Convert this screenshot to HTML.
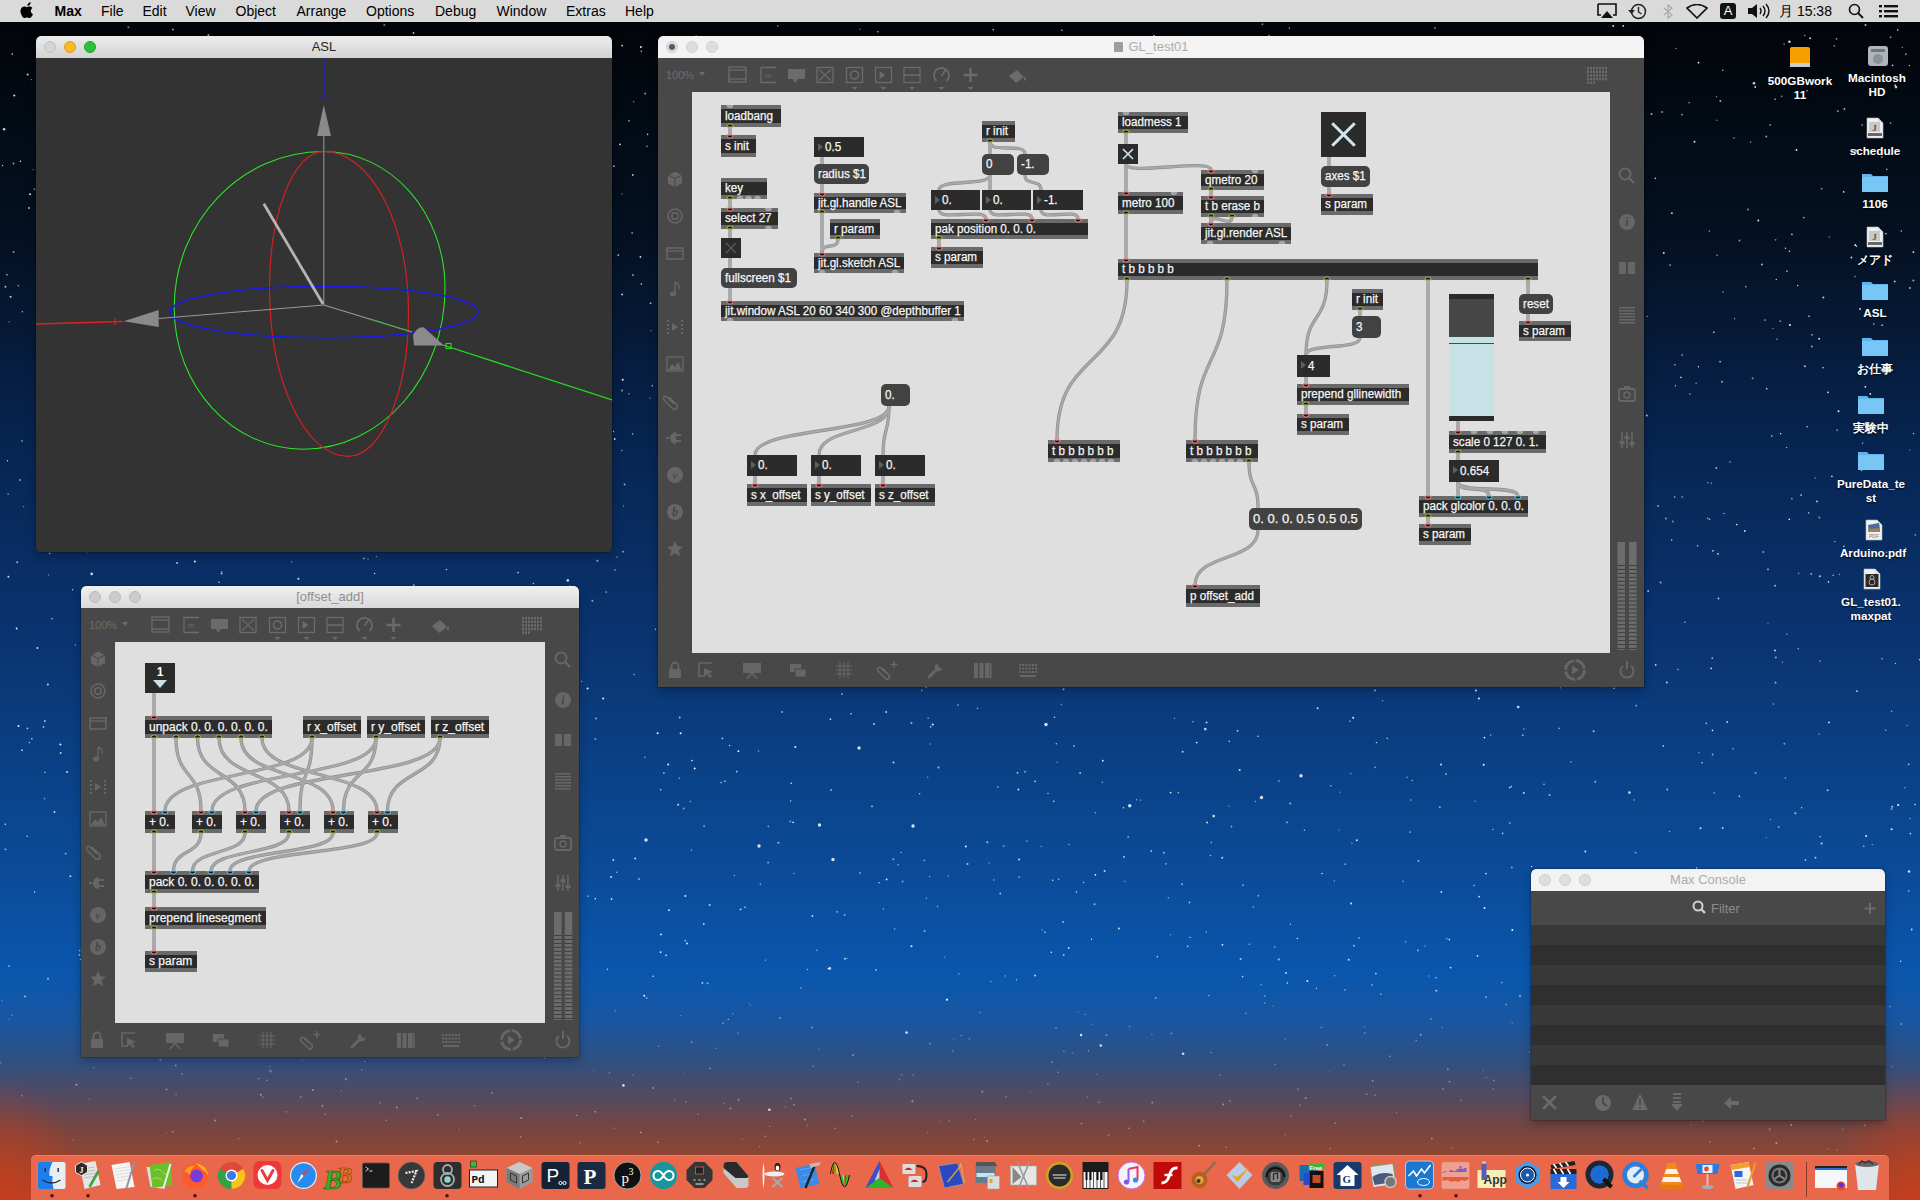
<!DOCTYPE html><html><head><meta charset="utf-8"><style>
*{margin:0;padding:0;box-sizing:border-box}
html,body{width:1920px;height:1200px;overflow:hidden}
body{position:relative;font-family:"Liberation Sans",sans-serif;
background:linear-gradient(to bottom,#010306 0px,#02060b 40px,#041122 240px,#072552 450px,#0a3674 660px,#0b4b98 870px,#0a57ae 978px,#1a56a0 1022px,#2f5080 1060px,#524a62 1095px,#784540 1130px,#924532 1160px,#b04028 1200px);}
.a{position:absolute}
#mb{position:absolute;left:0;top:0;width:1920px;height:22px;background:#dadada;font-size:14px;color:#000;line-height:22px}
#mb span{position:absolute;top:0;white-space:nowrap}
.win{position:absolute;border-radius:5px 5px 0 0;box-shadow:0 4px 10px rgba(0,0,0,.25),0 0 0 1px rgba(0,0,0,.18)}
.tb{position:absolute;left:0;top:0;right:0;height:22px;text-align:center;font-size:13px;line-height:22px;border-radius:5px 5px 0 0}
.tl{position:absolute;top:5px;width:12px;height:12px;border-radius:50%}
.o{position:absolute;background:#6a6a6a;color:#f6f6f6;font-size:12px;white-space:nowrap;overflow:hidden;-webkit-text-stroke:.25px #f6f6f6}
.o i{position:absolute;left:0;right:0;top:4px;bottom:4px;background:#2b2b2b}
.o b{position:absolute;left:4px;top:0;line-height:22px;font-weight:normal;transform-origin:0 0}
.sq b,.sq{transform-origin:0 50%}
.m{position:absolute;background:#424242;border-radius:5px;color:#f6f6f6;-webkit-text-stroke:.25px #f6f6f6;font-size:12px;white-space:nowrap;line-height:20px;padding-left:4px}
.n{position:absolute;background:#2b2b2b;color:#f6f6f6;-webkit-text-stroke:.25px #f6f6f6;font-size:12px;white-space:nowrap;line-height:20px;padding-left:11px}
.n:before{content:"";position:absolute;left:4px;top:6px;border-left:5px solid #5e5e5e;border-top:4px solid transparent;border-bottom:4px solid transparent}
.dl{position:absolute;color:#fff;font-size:11.7px;font-weight:bold;text-align:center;width:90px;line-height:14px;text-shadow:0 1px 2px rgba(0,0,0,.9)}
</style></head><body>
<div class="a" style="left:0;top:950px;width:1920px;height:250px;background:radial-gradient(ellipse 90px 120px at 0px 250px,rgba(205,62,25,.75),rgba(205,62,25,0)),radial-gradient(ellipse 90px 130px at 1920px 250px,rgba(205,62,25,.7),rgba(205,62,25,0))"></div>
<svg class="a" style="left:0;top:0" width="1920" height="1200"><circle cx="1046" cy="724.5" r="1.7" fill="#fff" opacity=".85"/><circle cx="859" cy="748" r="1.7" fill="#fff" opacity=".85"/><circle cx="913" cy="826" r="1.7" fill="#fff" opacity=".85"/><circle cx="819.5" cy="825" r="1.7" fill="#fff" opacity=".85"/><circle cx="646" cy="840" r="1.7" fill="#fff" opacity=".85"/><circle cx="833" cy="859.5" r="1.7" fill="#fff" opacity=".85"/><circle cx="759" cy="846" r="1.7" fill="#fff" opacity=".85"/><circle cx="1301" cy="775.75" r="1.7" fill="#fff" opacity=".85"/><circle cx="1129.75" cy="805.75" r="1.7" fill="#fff" opacity=".85"/><circle cx="1261.5" cy="797.5" r="1.7" fill="#fff" opacity=".85"/><circle cx="621.8" cy="193.9" r="0.7" fill="#fff" opacity="0.49"/><circle cx="702.1" cy="89.3" r="0.8" fill="#fff" opacity="0.47"/><circle cx="134.1" cy="126.1" r="1.0" fill="#fff" opacity="0.48"/><circle cx="1819.1" cy="734.1" r="0.7" fill="#fff" opacity="0.74"/><circle cx="1874.4" cy="76.5" r="0.8" fill="#fff" opacity="0.59"/><circle cx="226.2" cy="371.4" r="0.8" fill="#fff" opacity="0.50"/><circle cx="360.7" cy="133.7" r="0.7" fill="#fff" opacity="0.73"/><circle cx="953.1" cy="622.7" r="0.9" fill="#fff" opacity="0.68"/><circle cx="694.2" cy="303.7" r="0.8" fill="#fff" opacity="0.80"/><circle cx="1102.9" cy="615.4" r="0.9" fill="#fff" opacity="0.81"/><circle cx="1881.9" cy="156.9" r="1.0" fill="#fff" opacity="0.53"/><circle cx="1791.9" cy="498.8" r="0.7" fill="#fff" opacity="0.83"/><circle cx="1680.9" cy="377.3" r="0.9" fill="#fff" opacity="0.75"/><circle cx="875.9" cy="969.8" r="0.9" fill="#fff" opacity="0.69"/><circle cx="116.5" cy="813.9" r="1.0" fill="#fff" opacity="0.59"/><circle cx="1283.8" cy="49.4" r="1.0" fill="#fff" opacity="0.63"/><circle cx="947.9" cy="269.7" r="0.9" fill="#fff" opacity="0.51"/><circle cx="750.6" cy="1005.2" r="0.7" fill="#fff" opacity="0.27"/><circle cx="533.5" cy="178.2" r="1.0" fill="#fff" opacity="0.88"/><circle cx="797.4" cy="428.0" r="1.0" fill="#fff" opacity="0.93"/><circle cx="338.3" cy="285.2" r="0.8" fill="#fff" opacity="0.46"/><circle cx="350.1" cy="341.5" r="0.8" fill="#fff" opacity="0.66"/><circle cx="1087.4" cy="1097.2" r="0.7" fill="#fff" opacity="0.34"/><circle cx="1827.6" cy="790.3" r="1.0" fill="#fff" opacity="0.65"/><circle cx="924.5" cy="474.9" r="0.8" fill="#fff" opacity="0.48"/><circle cx="311.6" cy="406.9" r="0.7" fill="#fff" opacity="0.50"/><circle cx="1030.3" cy="1092.5" r="0.7" fill="#fff" opacity="0.24"/><circle cx="722.4" cy="738.3" r="0.9" fill="#fff" opacity="0.75"/><circle cx="221.5" cy="573.6" r="1.0" fill="#fff" opacity="0.69"/><circle cx="276.7" cy="868.1" r="0.9" fill="#fff" opacity="0.69"/><circle cx="991.4" cy="255.1" r="0.9" fill="#fff" opacity="0.52"/><circle cx="51.9" cy="618.7" r="0.7" fill="#fff" opacity="0.80"/><circle cx="704.1" cy="212.1" r="0.8" fill="#fff" opacity="0.72"/><circle cx="633.0" cy="275.1" r="0.8" fill="#fff" opacity="0.85"/><circle cx="1420.6" cy="279.3" r="1.0" fill="#fff" opacity="0.63"/><circle cx="53.6" cy="338.6" r="0.9" fill="#fff" opacity="0.55"/><circle cx="661.0" cy="934.4" r="0.9" fill="#fff" opacity="0.93"/><circle cx="423.3" cy="279.4" r="0.8" fill="#fff" opacity="0.62"/><circle cx="1891.7" cy="711.2" r="0.7" fill="#fff" opacity="0.69"/><circle cx="1535.3" cy="119.5" r="0.7" fill="#fff" opacity="0.90"/><circle cx="1440.3" cy="562.3" r="0.8" fill="#fff" opacity="0.67"/><circle cx="166.6" cy="1089.4" r="1.0" fill="#fff" opacity="0.34"/><circle cx="163.0" cy="202.9" r="0.8" fill="#fff" opacity="0.46"/><circle cx="893.5" cy="762.5" r="1.0" fill="#fff" opacity="0.78"/><circle cx="1053.4" cy="171.5" r="0.7" fill="#fff" opacity="0.85"/><circle cx="197.3" cy="867.9" r="0.8" fill="#fff" opacity="0.67"/><circle cx="1586.2" cy="261.6" r="0.9" fill="#fff" opacity="0.56"/><circle cx="1466.3" cy="391.1" r="1.0" fill="#fff" opacity="0.87"/><circle cx="1420.7" cy="1034.8" r="1.0" fill="#fff" opacity="0.43"/><circle cx="251.1" cy="195.0" r="0.7" fill="#fff" opacity="0.89"/><circle cx="1168.4" cy="897.8" r="0.8" fill="#fff" opacity="0.54"/><circle cx="1392.4" cy="650.6" r="0.9" fill="#fff" opacity="0.79"/><circle cx="926.4" cy="898.3" r="0.7" fill="#fff" opacity="0.57"/><circle cx="1482.7" cy="595.7" r="0.7" fill="#fff" opacity="0.83"/><circle cx="851.0" cy="713.7" r="0.8" fill="#fff" opacity="0.80"/><circle cx="1023.9" cy="562.3" r="0.8" fill="#fff" opacity="0.80"/><circle cx="1809.0" cy="316.3" r="0.8" fill="#fff" opacity="0.87"/><circle cx="233.5" cy="521.8" r="0.7" fill="#fff" opacity="0.79"/><circle cx="408.4" cy="364.9" r="0.7" fill="#fff" opacity="0.90"/><circle cx="1375.0" cy="767.4" r="0.8" fill="#fff" opacity="0.58"/><circle cx="898.1" cy="864.8" r="0.7" fill="#fff" opacity="0.65"/><circle cx="1900.6" cy="961.3" r="0.8" fill="#fff" opacity="0.80"/><circle cx="775.3" cy="498.4" r="0.9" fill="#fff" opacity="0.61"/><circle cx="37.4" cy="647.9" r="1.0" fill="#fff" opacity="0.80"/><circle cx="993.5" cy="356.7" r="0.7" fill="#fff" opacity="0.51"/><circle cx="438.8" cy="1010.8" r="0.7" fill="#fff" opacity="0.29"/><circle cx="1495.7" cy="328.5" r="0.8" fill="#fff" opacity="0.86"/><circle cx="1297.9" cy="1089.2" r="1.0" fill="#fff" opacity="0.26"/><circle cx="1095.5" cy="812.7" r="0.7" fill="#fff" opacity="0.59"/><circle cx="352.0" cy="1032.1" r="0.9" fill="#fff" opacity="0.46"/><circle cx="1539.1" cy="118.3" r="0.8" fill="#fff" opacity="0.48"/><circle cx="871.2" cy="405.9" r="1.0" fill="#fff" opacity="0.91"/><circle cx="248.1" cy="617.3" r="0.8" fill="#fff" opacity="0.92"/><circle cx="502.8" cy="228.0" r="0.9" fill="#fff" opacity="0.76"/><circle cx="395.3" cy="525.8" r="0.8" fill="#fff" opacity="0.59"/><circle cx="1909.4" cy="65.6" r="0.7" fill="#fff" opacity="0.82"/><circle cx="363.8" cy="558.6" r="1.0" fill="#fff" opacity="0.50"/><circle cx="829.8" cy="581.4" r="1.0" fill="#fff" opacity="0.94"/><circle cx="413.1" cy="282.5" r="0.8" fill="#fff" opacity="0.87"/><circle cx="1221.1" cy="479.7" r="0.9" fill="#fff" opacity="0.94"/><circle cx="27.4" cy="728.3" r="0.9" fill="#fff" opacity="0.67"/><circle cx="1277.2" cy="452.9" r="0.9" fill="#fff" opacity="0.75"/><circle cx="86.9" cy="232.7" r="0.9" fill="#fff" opacity="0.67"/><circle cx="1846.6" cy="1119.2" r="0.9" fill="#fff" opacity="0.29"/><circle cx="594.3" cy="425.5" r="0.7" fill="#fff" opacity="0.62"/><circle cx="535.5" cy="762.7" r="1.3" fill="#fff" opacity="0.80"/><circle cx="507.2" cy="125.1" r="1.0" fill="#fff" opacity="0.74"/><circle cx="575.3" cy="733.0" r="0.7" fill="#fff" opacity="0.74"/><circle cx="1441.0" cy="764.4" r="1.0" fill="#fff" opacity="0.83"/><circle cx="948.8" cy="344.0" r="0.8" fill="#fff" opacity="0.47"/><circle cx="1712.5" cy="730.4" r="0.8" fill="#fff" opacity="0.90"/><circle cx="1091.5" cy="939.3" r="0.7" fill="#fff" opacity="0.86"/><circle cx="1714.2" cy="792.9" r="0.8" fill="#fff" opacity="0.49"/><circle cx="1223.3" cy="1104.4" r="1.0" fill="#fff" opacity="0.43"/><circle cx="1205.3" cy="729.1" r="1.3" fill="#fff" opacity="0.80"/><circle cx="1531.6" cy="866.5" r="0.7" fill="#fff" opacity="0.78"/><circle cx="1414.6" cy="308.0" r="0.7" fill="#fff" opacity="0.87"/><circle cx="1452.4" cy="283.8" r="1.0" fill="#fff" opacity="0.70"/><circle cx="919.7" cy="793.8" r="0.7" fill="#fff" opacity="0.76"/><circle cx="148.7" cy="190.0" r="0.9" fill="#fff" opacity="0.78"/><circle cx="1192.6" cy="174.3" r="1.0" fill="#fff" opacity="0.48"/><circle cx="1290.2" cy="803.4" r="1.0" fill="#fff" opacity="0.60"/><circle cx="892.2" cy="549.1" r="0.7" fill="#fff" opacity="0.95"/><circle cx="598.4" cy="120.7" r="1.0" fill="#fff" opacity="0.46"/><circle cx="1574.2" cy="1114.1" r="1.0" fill="#fff" opacity="0.47"/><circle cx="1759.8" cy="1071.8" r="0.7" fill="#fff" opacity="0.37"/><circle cx="1006.2" cy="1096.8" r="0.8" fill="#fff" opacity="0.38"/><circle cx="536.8" cy="150.9" r="0.9" fill="#fff" opacity="0.57"/><circle cx="933.4" cy="52.0" r="0.7" fill="#fff" opacity="0.92"/><circle cx="778.4" cy="842.8" r="1.0" fill="#fff" opacity="0.62"/><circle cx="1613.2" cy="26.0" r="0.9" fill="#fff" opacity="0.87"/><circle cx="1778.7" cy="826.9" r="0.9" fill="#fff" opacity="0.58"/><circle cx="749.1" cy="1003.6" r="0.7" fill="#fff" opacity="0.32"/><circle cx="528.3" cy="78.3" r="0.7" fill="#fff" opacity="0.48"/><circle cx="1219.1" cy="191.7" r="0.9" fill="#fff" opacity="0.67"/><circle cx="1484.5" cy="908.1" r="1.0" fill="#fff" opacity="0.89"/><circle cx="1211.3" cy="1052.5" r="0.8" fill="#fff" opacity="0.40"/><circle cx="1406.1" cy="531.7" r="0.8" fill="#fff" opacity="0.77"/><circle cx="94.0" cy="1067.6" r="0.8" fill="#fff" opacity="0.27"/><circle cx="541.0" cy="312.0" r="0.9" fill="#fff" opacity="0.65"/><circle cx="927.7" cy="777.2" r="0.7" fill="#fff" opacity="0.53"/><circle cx="399.1" cy="1044.1" r="1.0" fill="#fff" opacity="0.36"/><circle cx="639.0" cy="878.9" r="1.0" fill="#fff" opacity="0.52"/><circle cx="174.2" cy="409.0" r="0.7" fill="#fff" opacity="0.61"/><circle cx="1554.0" cy="251.6" r="0.7" fill="#fff" opacity="0.82"/><circle cx="794.7" cy="614.2" r="1.0" fill="#fff" opacity="0.59"/><circle cx="956.4" cy="670.6" r="0.9" fill="#fff" opacity="0.51"/><circle cx="1208.9" cy="995.6" r="0.8" fill="#fff" opacity="0.50"/><circle cx="738.4" cy="751.2" r="1.0" fill="#fff" opacity="0.93"/><circle cx="1676.0" cy="48.6" r="0.7" fill="#fff" opacity="0.66"/><circle cx="1544.2" cy="1114.3" r="1.0" fill="#fff" opacity="0.23"/><circle cx="1779.5" cy="953.6" r="1.0" fill="#fff" opacity="0.94"/><circle cx="209.4" cy="197.8" r="0.7" fill="#fff" opacity="0.92"/><circle cx="1242.9" cy="885.2" r="1.0" fill="#fff" opacity="0.49"/><circle cx="2.6" cy="165.5" r="0.7" fill="#fff" opacity="0.77"/><circle cx="245.7" cy="307.5" r="1.0" fill="#fff" opacity="0.80"/><circle cx="135.1" cy="614.5" r="0.8" fill="#fff" opacity="0.64"/><circle cx="1154.0" cy="35.8" r="0.9" fill="#fff" opacity="0.95"/><circle cx="607.4" cy="969.2" r="0.8" fill="#fff" opacity="0.69"/><circle cx="474.4" cy="1105.7" r="0.9" fill="#fff" opacity="0.24"/><circle cx="1698.9" cy="752.7" r="0.7" fill="#fff" opacity="0.58"/><circle cx="1776.3" cy="279.4" r="0.7" fill="#fff" opacity="0.80"/><circle cx="695.7" cy="470.3" r="0.7" fill="#fff" opacity="0.85"/><circle cx="969.4" cy="255.1" r="0.8" fill="#fff" opacity="0.61"/><circle cx="443.2" cy="273.3" r="0.9" fill="#fff" opacity="0.50"/><circle cx="1171.4" cy="1033.4" r="1.0" fill="#fff" opacity="0.33"/><circle cx="1821.6" cy="188.8" r="1.0" fill="#fff" opacity="0.48"/><circle cx="1144.6" cy="491.7" r="0.7" fill="#fff" opacity="0.54"/><circle cx="1367.1" cy="377.8" r="0.7" fill="#fff" opacity="0.95"/><circle cx="632.1" cy="232.9" r="1.0" fill="#fff" opacity="0.47"/><circle cx="726.9" cy="445.0" r="0.9" fill="#fff" opacity="0.67"/><circle cx="150.2" cy="114.9" r="1.0" fill="#fff" opacity="0.93"/><circle cx="1851.4" cy="257.5" r="0.9" fill="#fff" opacity="0.83"/><circle cx="1543.6" cy="122.8" r="1.0" fill="#fff" opacity="0.55"/><circle cx="857.0" cy="388.0" r="1.0" fill="#fff" opacity="0.47"/><circle cx="1558.7" cy="887.3" r="0.7" fill="#fff" opacity="0.64"/><circle cx="1542.4" cy="93.8" r="0.8" fill="#fff" opacity="0.82"/><circle cx="651.0" cy="330.6" r="0.7" fill="#fff" opacity="0.58"/><circle cx="607.6" cy="334.4" r="0.7" fill="#fff" opacity="0.81"/><circle cx="1546.9" cy="1089.7" r="0.7" fill="#fff" opacity="0.23"/><circle cx="912.4" cy="1101.3" r="1.0" fill="#fff" opacity="0.42"/><circle cx="1564.4" cy="173.4" r="1.0" fill="#fff" opacity="0.54"/><circle cx="1417.9" cy="950.4" r="0.8" fill="#fff" opacity="0.75"/><circle cx="613.5" cy="431.5" r="0.7" fill="#fff" opacity="0.71"/><circle cx="307.1" cy="483.1" r="0.7" fill="#fff" opacity="0.69"/><circle cx="308.5" cy="504.3" r="0.7" fill="#fff" opacity="0.94"/><circle cx="161.4" cy="132.6" r="1.0" fill="#fff" opacity="0.94"/><circle cx="332.5" cy="173.7" r="1.0" fill="#fff" opacity="0.76"/><circle cx="1436.1" cy="977.7" r="0.7" fill="#fff" opacity="0.84"/><circle cx="536.4" cy="325.4" r="0.9" fill="#fff" opacity="0.82"/><circle cx="475.1" cy="300.3" r="0.8" fill="#fff" opacity="0.59"/><circle cx="361.4" cy="97.0" r="0.9" fill="#fff" opacity="0.95"/><circle cx="444.3" cy="934.3" r="1.0" fill="#fff" opacity="0.95"/><circle cx="911.5" cy="946.3" r="1.0" fill="#fff" opacity="0.91"/><circle cx="563.9" cy="158.2" r="0.8" fill="#fff" opacity="0.75"/><circle cx="372.8" cy="108.6" r="0.8" fill="#fff" opacity="0.67"/><circle cx="1493.3" cy="1088.9" r="0.7" fill="#fff" opacity="0.38"/><circle cx="671.4" cy="66.2" r="0.9" fill="#fff" opacity="0.52"/><circle cx="489.4" cy="699.0" r="0.8" fill="#fff" opacity="0.86"/><circle cx="785.3" cy="442.7" r="0.9" fill="#fff" opacity="0.49"/><circle cx="951.6" cy="568.4" r="1.0" fill="#fff" opacity="0.50"/><circle cx="1056.3" cy="743.7" r="0.7" fill="#fff" opacity="0.78"/><circle cx="520.6" cy="1136.8" r="0.9" fill="#fff" opacity="0.33"/><circle cx="1431.0" cy="1019.0" r="1.0" fill="#fff" opacity="0.33"/><circle cx="1913.5" cy="433.6" r="0.8" fill="#fff" opacity="0.65"/><circle cx="1808.6" cy="512.9" r="0.8" fill="#fff" opacity="0.66"/><circle cx="779.9" cy="1018.1" r="1.0" fill="#fff" opacity="0.42"/><circle cx="99.3" cy="184.5" r="1.0" fill="#fff" opacity="0.49"/><circle cx="712.0" cy="592.0" r="0.8" fill="#fff" opacity="0.62"/><circle cx="329.8" cy="99.6" r="1.0" fill="#fff" opacity="0.70"/><circle cx="1856.4" cy="246.2" r="0.8" fill="#fff" opacity="0.87"/><circle cx="1752.6" cy="378.2" r="1.0" fill="#fff" opacity="0.49"/><circle cx="1321.4" cy="1027.4" r="0.8" fill="#fff" opacity="0.38"/><circle cx="376.5" cy="556.5" r="0.8" fill="#fff" opacity="0.47"/><circle cx="300.4" cy="428.5" r="0.8" fill="#fff" opacity="0.57"/><circle cx="1722.8" cy="70.3" r="0.7" fill="#fff" opacity="0.78"/><circle cx="748.5" cy="537.2" r="0.9" fill="#fff" opacity="0.77"/><circle cx="478.6" cy="462.3" r="0.9" fill="#fff" opacity="0.67"/><circle cx="44.9" cy="720.9" r="1.0" fill="#fff" opacity="0.68"/><circle cx="1187.7" cy="946.2" r="0.8" fill="#fff" opacity="0.86"/><circle cx="128.9" cy="427.8" r="0.9" fill="#fff" opacity="0.50"/><circle cx="979.5" cy="69.9" r="0.8" fill="#fff" opacity="0.49"/><circle cx="1493.1" cy="599.9" r="0.7" fill="#fff" opacity="0.83"/><circle cx="1253.3" cy="907.1" r="0.7" fill="#fff" opacity="0.88"/><circle cx="1405.6" cy="941.7" r="0.8" fill="#fff" opacity="0.52"/><circle cx="552.7" cy="937.2" r="0.8" fill="#fff" opacity="0.79"/><circle cx="424.6" cy="962.0" r="0.9" fill="#fff" opacity="0.53"/><circle cx="528.0" cy="942.4" r="0.8" fill="#fff" opacity="0.58"/><circle cx="921.8" cy="690.5" r="0.8" fill="#fff" opacity="0.61"/><circle cx="349.6" cy="205.5" r="0.9" fill="#fff" opacity="0.79"/><circle cx="324.0" cy="907.8" r="0.7" fill="#fff" opacity="0.83"/><circle cx="1647.9" cy="1111.9" r="1.0" fill="#fff" opacity="0.36"/><circle cx="1694.5" cy="141.8" r="1.0" fill="#fff" opacity="0.82"/><circle cx="721.4" cy="439.4" r="0.8" fill="#fff" opacity="0.63"/><circle cx="849.2" cy="223.0" r="0.7" fill="#fff" opacity="0.60"/><circle cx="595.3" cy="1111.7" r="0.9" fill="#fff" opacity="0.41"/><circle cx="425.5" cy="351.6" r="1.0" fill="#fff" opacity="0.66"/><circle cx="91.7" cy="573.9" r="1.3" fill="#fff" opacity="0.80"/><circle cx="681.5" cy="143.8" r="0.9" fill="#fff" opacity="0.72"/><circle cx="578.2" cy="174.6" r="0.9" fill="#fff" opacity="0.76"/><circle cx="258.7" cy="1078.6" r="0.8" fill="#fff" opacity="0.40"/><circle cx="122.2" cy="186.9" r="0.9" fill="#fff" opacity="0.65"/><circle cx="22.1" cy="750.2" r="0.9" fill="#fff" opacity="0.75"/><circle cx="1155.6" cy="606.8" r="1.0" fill="#fff" opacity="0.57"/><circle cx="84.5" cy="622.5" r="1.0" fill="#fff" opacity="0.54"/><circle cx="1750.5" cy="142.1" r="0.8" fill="#fff" opacity="0.52"/><circle cx="1167.5" cy="594.8" r="1.0" fill="#fff" opacity="0.86"/><circle cx="594.0" cy="362.1" r="0.7" fill="#fff" opacity="0.95"/><circle cx="917.6" cy="630.2" r="1.0" fill="#fff" opacity="0.87"/><circle cx="893.3" cy="859.2" r="1.0" fill="#fff" opacity="0.54"/><circle cx="501.9" cy="749.2" r="0.7" fill="#fff" opacity="0.62"/><circle cx="1334.6" cy="975.8" r="0.7" fill="#fff" opacity="0.58"/><circle cx="837.2" cy="911.8" r="0.9" fill="#fff" opacity="0.60"/><circle cx="1716.8" cy="120.2" r="0.7" fill="#fff" opacity="0.53"/><circle cx="1616.1" cy="252.3" r="0.8" fill="#fff" opacity="0.82"/><circle cx="1689.9" cy="394.0" r="0.8" fill="#fff" opacity="0.64"/><circle cx="1769.6" cy="1129.3" r="1.0" fill="#fff" opacity="0.34"/><circle cx="12.3" cy="53.9" r="0.8" fill="#fff" opacity="0.74"/><circle cx="407.0" cy="725.1" r="0.7" fill="#fff" opacity="0.73"/><circle cx="63.2" cy="150.0" r="0.8" fill="#fff" opacity="0.62"/><circle cx="55.2" cy="70.9" r="0.7" fill="#fff" opacity="0.80"/><circle cx="126.3" cy="688.9" r="0.9" fill="#fff" opacity="0.55"/><circle cx="1025.1" cy="771.8" r="1.0" fill="#fff" opacity="0.50"/><circle cx="215.0" cy="62.8" r="0.7" fill="#fff" opacity="0.86"/><circle cx="551.7" cy="136.5" r="0.7" fill="#fff" opacity="0.85"/><circle cx="565.4" cy="402.9" r="0.9" fill="#fff" opacity="0.46"/><circle cx="542.6" cy="829.9" r="0.9" fill="#fff" opacity="0.91"/><circle cx="1155.9" cy="560.1" r="0.9" fill="#fff" opacity="0.76"/><circle cx="792.8" cy="515.4" r="0.7" fill="#fff" opacity="0.62"/><circle cx="1032.7" cy="267.9" r="0.7" fill="#fff" opacity="0.74"/><circle cx="837.2" cy="613.5" r="0.9" fill="#fff" opacity="0.83"/><circle cx="8.4" cy="576.7" r="1.0" fill="#fff" opacity="0.80"/><circle cx="1856.9" cy="691.2" r="0.9" fill="#fff" opacity="0.74"/><circle cx="1565.3" cy="1080.5" r="0.8" fill="#fff" opacity="0.35"/><circle cx="1222.1" cy="115.1" r="0.7" fill="#fff" opacity="0.76"/><circle cx="770.4" cy="468.3" r="0.7" fill="#fff" opacity="0.66"/><circle cx="714.1" cy="365.3" r="1.0" fill="#fff" opacity="0.90"/><circle cx="728.3" cy="1019.4" r="0.8" fill="#fff" opacity="0.46"/><circle cx="1140.6" cy="800.1" r="0.7" fill="#fff" opacity="0.62"/><circle cx="298.2" cy="973.3" r="0.9" fill="#fff" opacity="0.53"/><circle cx="1485.0" cy="676.1" r="0.8" fill="#fff" opacity="0.62"/><circle cx="1337.4" cy="595.7" r="0.9" fill="#fff" opacity="0.60"/><circle cx="1619.8" cy="198.1" r="0.8" fill="#fff" opacity="0.94"/><circle cx="1157.6" cy="416.6" r="0.8" fill="#fff" opacity="0.61"/><circle cx="1872.3" cy="844.6" r="0.7" fill="#fff" opacity="0.53"/><circle cx="375.2" cy="194.0" r="0.8" fill="#fff" opacity="0.85"/><circle cx="835.1" cy="244.9" r="0.7" fill="#fff" opacity="0.59"/><circle cx="890.7" cy="38.2" r="1.0" fill="#fff" opacity="0.80"/><circle cx="1214.2" cy="545.7" r="0.8" fill="#fff" opacity="0.58"/><circle cx="10.6" cy="296.8" r="1.0" fill="#fff" opacity="0.80"/><circle cx="1242.6" cy="976.6" r="0.8" fill="#fff" opacity="0.79"/><circle cx="871.5" cy="376.5" r="0.7" fill="#fff" opacity="0.90"/><circle cx="768.3" cy="826.4" r="0.8" fill="#fff" opacity="0.58"/><circle cx="874.0" cy="723.9" r="1.0" fill="#fff" opacity="0.71"/><circle cx="1676.1" cy="1031.2" r="0.9" fill="#fff" opacity="0.42"/><circle cx="940.5" cy="1121.4" r="0.7" fill="#fff" opacity="0.29"/><circle cx="1375.1" cy="1095.2" r="0.8" fill="#fff" opacity="0.35"/><circle cx="1103.2" cy="633.2" r="1.0" fill="#fff" opacity="0.71"/><circle cx="1591.7" cy="611.4" r="1.0" fill="#fff" opacity="0.82"/><circle cx="1901.3" cy="231.0" r="0.7" fill="#fff" opacity="0.81"/><circle cx="1224.1" cy="308.3" r="1.3" fill="#fff" opacity="0.80"/><circle cx="803.7" cy="497.5" r="0.9" fill="#fff" opacity="0.74"/><circle cx="582.7" cy="474.9" r="0.8" fill="#fff" opacity="0.95"/><circle cx="887.3" cy="209.3" r="0.7" fill="#fff" opacity="0.85"/><circle cx="900.8" cy="656.9" r="0.8" fill="#fff" opacity="0.86"/><circle cx="1278.8" cy="959.4" r="1.0" fill="#fff" opacity="0.68"/><circle cx="1052.7" cy="164.9" r="1.0" fill="#fff" opacity="0.63"/><circle cx="513.5" cy="447.5" r="0.9" fill="#fff" opacity="0.94"/><circle cx="924.6" cy="930.9" r="0.9" fill="#fff" opacity="0.63"/><circle cx="615.0" cy="570.0" r="0.7" fill="#fff" opacity="0.78"/><circle cx="1783.2" cy="986.1" r="0.7" fill="#fff" opacity="0.49"/><circle cx="623.4" cy="1085.4" r="1.3" fill="#fff" opacity="0.80"/><circle cx="22.0" cy="1095.7" r="0.9" fill="#fff" opacity="0.29"/><circle cx="274.0" cy="287.1" r="1.0" fill="#fff" opacity="0.62"/><circle cx="1735.8" cy="915.4" r="0.8" fill="#fff" opacity="0.75"/><circle cx="1876.2" cy="125.8" r="0.9" fill="#fff" opacity="0.55"/><circle cx="1019.1" cy="859.4" r="1.0" fill="#fff" opacity="0.79"/><circle cx="227.4" cy="495.8" r="0.8" fill="#fff" opacity="0.69"/><circle cx="930.0" cy="1043.6" r="1.0" fill="#fff" opacity="0.29"/><circle cx="1151.2" cy="851.1" r="0.8" fill="#fff" opacity="0.87"/><circle cx="1080.1" cy="773.1" r="1.0" fill="#fff" opacity="0.64"/><circle cx="1844.4" cy="108.9" r="0.9" fill="#fff" opacity="0.77"/><circle cx="1170.6" cy="792.6" r="0.9" fill="#fff" opacity="0.85"/><circle cx="929.6" cy="876.6" r="0.8" fill="#fff" opacity="0.47"/><circle cx="1200.5" cy="405.3" r="0.9" fill="#fff" opacity="0.62"/><circle cx="1063.9" cy="1051.3" r="0.9" fill="#fff" opacity="0.33"/><circle cx="1063.7" cy="954.9" r="0.9" fill="#fff" opacity="0.63"/><circle cx="640.7" cy="1132.3" r="0.9" fill="#fff" opacity="0.47"/><circle cx="1520.5" cy="396.6" r="0.9" fill="#fff" opacity="0.81"/><circle cx="1867.7" cy="122.6" r="0.7" fill="#fff" opacity="0.65"/><circle cx="779.6" cy="670.4" r="1.3" fill="#fff" opacity="0.80"/><circle cx="364.7" cy="1061.5" r="0.7" fill="#fff" opacity="0.42"/><circle cx="1174.5" cy="718.4" r="0.7" fill="#fff" opacity="0.56"/><circle cx="879.1" cy="882.8" r="0.7" fill="#fff" opacity="0.78"/><circle cx="809.4" cy="137.3" r="0.7" fill="#fff" opacity="0.63"/><circle cx="1510.2" cy="656.9" r="0.9" fill="#fff" opacity="0.88"/><circle cx="65.7" cy="47.0" r="0.7" fill="#fff" opacity="0.70"/><circle cx="1583.5" cy="895.3" r="1.0" fill="#fff" opacity="0.74"/><circle cx="857.2" cy="39.9" r="1.0" fill="#fff" opacity="0.75"/><circle cx="1266.0" cy="198.9" r="1.0" fill="#fff" opacity="0.72"/><circle cx="906.6" cy="1032.6" r="1.3" fill="#fff" opacity="0.80"/><circle cx="1285.2" cy="1135.0" r="0.7" fill="#fff" opacity="0.28"/><circle cx="906.9" cy="334.2" r="0.8" fill="#fff" opacity="0.68"/><circle cx="1771.8" cy="436.0" r="0.8" fill="#fff" opacity="0.81"/><circle cx="1207.0" cy="822.6" r="1.0" fill="#fff" opacity="0.78"/><circle cx="1754.0" cy="83.3" r="1.3" fill="#fff" opacity="0.80"/><circle cx="1249.3" cy="944.3" r="0.7" fill="#fff" opacity="0.64"/><circle cx="1152.2" cy="1102.4" r="1.0" fill="#fff" opacity="0.38"/><circle cx="1821.6" cy="843.5" r="1.0" fill="#fff" opacity="0.79"/><circle cx="1530.9" cy="433.0" r="0.8" fill="#fff" opacity="0.76"/><circle cx="740.6" cy="909.3" r="0.9" fill="#fff" opacity="0.84"/><circle cx="561.4" cy="92.3" r="0.9" fill="#fff" opacity="0.88"/><circle cx="29.8" cy="194.2" r="0.9" fill="#fff" opacity="0.74"/><circle cx="472.5" cy="460.2" r="1.0" fill="#fff" opacity="0.75"/><circle cx="1550.4" cy="343.0" r="0.7" fill="#fff" opacity="0.61"/><circle cx="302.0" cy="1060.6" r="0.7" fill="#fff" opacity="0.30"/><circle cx="1710.0" cy="1141.9" r="0.8" fill="#fff" opacity="0.29"/><circle cx="1549.5" cy="794.9" r="1.0" fill="#fff" opacity="0.62"/><circle cx="1063.1" cy="921.9" r="0.8" fill="#fff" opacity="0.84"/><circle cx="1886.0" cy="372.5" r="0.7" fill="#fff" opacity="0.79"/><circle cx="396.6" cy="310.8" r="0.7" fill="#fff" opacity="0.85"/><circle cx="168.4" cy="932.2" r="0.7" fill="#fff" opacity="0.57"/><circle cx="1722.1" cy="1020.6" r="0.9" fill="#fff" opacity="0.34"/><circle cx="363.2" cy="240.5" r="0.8" fill="#fff" opacity="0.85"/><circle cx="1109.5" cy="428.1" r="0.8" fill="#fff" opacity="0.57"/><circle cx="947.1" cy="999.5" r="0.9" fill="#fff" opacity="0.77"/><circle cx="299.8" cy="696.5" r="0.9" fill="#fff" opacity="0.59"/><circle cx="180.6" cy="254.4" r="1.0" fill="#fff" opacity="0.74"/><circle cx="1777.0" cy="339.1" r="0.7" fill="#fff" opacity="0.92"/><circle cx="1572.2" cy="1108.9" r="0.9" fill="#fff" opacity="0.44"/><circle cx="1909.7" cy="449.9" r="0.7" fill="#fff" opacity="0.48"/><circle cx="1671.7" cy="540.0" r="0.7" fill="#fff" opacity="0.88"/><circle cx="1770.5" cy="819.4" r="0.7" fill="#fff" opacity="0.58"/><circle cx="1230.0" cy="1100.9" r="1.0" fill="#fff" opacity="0.27"/><circle cx="712.1" cy="288.8" r="0.8" fill="#fff" opacity="0.54"/><circle cx="1807.0" cy="90.7" r="0.7" fill="#fff" opacity="0.87"/><circle cx="1509.8" cy="823.0" r="1.0" fill="#fff" opacity="0.48"/><circle cx="1449.5" cy="1081.7" r="0.9" fill="#fff" opacity="0.37"/><circle cx="1252.8" cy="554.0" r="0.9" fill="#fff" opacity="0.58"/><circle cx="924.1" cy="213.8" r="0.8" fill="#fff" opacity="0.85"/><circle cx="1713.0" cy="550.9" r="0.8" fill="#fff" opacity="0.85"/><circle cx="1599.0" cy="111.6" r="0.9" fill="#fff" opacity="0.89"/><circle cx="858.7" cy="133.2" r="1.0" fill="#fff" opacity="0.87"/><circle cx="868.5" cy="406.6" r="0.8" fill="#fff" opacity="0.69"/><circle cx="274.1" cy="273.6" r="0.7" fill="#fff" opacity="0.54"/><circle cx="1707.5" cy="518.3" r="0.8" fill="#fff" opacity="0.58"/><circle cx="298.9" cy="329.3" r="0.9" fill="#fff" opacity="0.62"/><circle cx="942.7" cy="382.1" r="1.0" fill="#fff" opacity="0.51"/><circle cx="109.2" cy="1031.8" r="0.8" fill="#fff" opacity="0.36"/><circle cx="228.8" cy="874.0" r="0.9" fill="#fff" opacity="0.67"/><circle cx="458.3" cy="292.2" r="1.0" fill="#fff" opacity="0.59"/><circle cx="110.4" cy="842.0" r="0.9" fill="#fff" opacity="0.52"/><circle cx="848.9" cy="595.8" r="0.8" fill="#fff" opacity="0.67"/><circle cx="1811.8" cy="346.5" r="0.9" fill="#fff" opacity="0.67"/><circle cx="419.1" cy="667.3" r="0.8" fill="#fff" opacity="0.87"/><circle cx="442.4" cy="221.8" r="0.7" fill="#fff" opacity="0.86"/><circle cx="1403.2" cy="881.2" r="0.8" fill="#fff" opacity="0.55"/><circle cx="1358.9" cy="937.8" r="0.9" fill="#fff" opacity="0.55"/><circle cx="1406.8" cy="483.5" r="0.7" fill="#fff" opacity="0.71"/><circle cx="541.0" cy="743.7" r="1.0" fill="#fff" opacity="0.50"/><circle cx="1464.9" cy="174.1" r="0.9" fill="#fff" opacity="0.57"/><circle cx="1892.6" cy="65.3" r="0.9" fill="#fff" opacity="0.74"/><circle cx="683.8" cy="1073.6" r="0.7" fill="#fff" opacity="0.26"/><circle cx="1567.7" cy="998.5" r="0.9" fill="#fff" opacity="0.84"/><circle cx="1106.5" cy="1035.2" r="0.9" fill="#fff" opacity="0.44"/><circle cx="950.0" cy="602.0" r="0.8" fill="#fff" opacity="0.46"/><circle cx="429.5" cy="229.4" r="0.7" fill="#fff" opacity="0.61"/><circle cx="1834.3" cy="45.9" r="0.8" fill="#fff" opacity="0.58"/><circle cx="1222.7" cy="546.4" r="0.8" fill="#fff" opacity="0.80"/><circle cx="1669.5" cy="831.5" r="0.7" fill="#fff" opacity="0.59"/><circle cx="1124.9" cy="881.5" r="0.7" fill="#fff" opacity="0.51"/><circle cx="263.0" cy="690.4" r="0.8" fill="#fff" opacity="0.52"/><circle cx="1433.4" cy="209.0" r="0.7" fill="#fff" opacity="0.92"/><circle cx="807.3" cy="969.5" r="0.7" fill="#fff" opacity="0.65"/><circle cx="1491.7" cy="405.2" r="0.8" fill="#fff" opacity="0.87"/><circle cx="1618.6" cy="659.5" r="0.9" fill="#fff" opacity="0.86"/><circle cx="102.8" cy="606.6" r="0.9" fill="#fff" opacity="0.57"/><circle cx="1214.8" cy="434.4" r="0.8" fill="#fff" opacity="0.48"/><circle cx="969.2" cy="47.5" r="0.8" fill="#fff" opacity="0.66"/><circle cx="1915.2" cy="534.9" r="0.7" fill="#fff" opacity="0.85"/><circle cx="1698.5" cy="62.7" r="0.9" fill="#fff" opacity="0.91"/><circle cx="1206.2" cy="931.9" r="0.7" fill="#fff" opacity="0.76"/><circle cx="999.0" cy="512.3" r="0.7" fill="#fff" opacity="0.59"/><circle cx="1243.2" cy="159.5" r="0.9" fill="#fff" opacity="0.49"/><circle cx="1789.3" cy="519.4" r="0.8" fill="#fff" opacity="0.89"/><circle cx="1108.5" cy="332.7" r="0.7" fill="#fff" opacity="0.82"/><circle cx="872.0" cy="806.4" r="0.8" fill="#fff" opacity="0.78"/><circle cx="1363.9" cy="543.0" r="0.9" fill="#fff" opacity="0.76"/><circle cx="596.2" cy="296.8" r="0.8" fill="#fff" opacity="0.54"/><circle cx="1861.6" cy="470.4" r="0.9" fill="#fff" opacity="0.53"/><circle cx="622.0" cy="390.5" r="0.9" fill="#fff" opacity="0.59"/><circle cx="567.4" cy="893.4" r="0.8" fill="#fff" opacity="0.73"/><circle cx="668.2" cy="764.6" r="1.0" fill="#fff" opacity="0.87"/><circle cx="1464.7" cy="610.6" r="0.8" fill="#fff" opacity="0.66"/><circle cx="269.4" cy="252.0" r="0.9" fill="#fff" opacity="0.86"/><circle cx="1418.4" cy="860.9" r="1.0" fill="#fff" opacity="0.58"/><circle cx="1213.7" cy="816.1" r="1.3" fill="#fff" opacity="0.80"/><circle cx="1470.1" cy="683.6" r="1.0" fill="#fff" opacity="0.65"/><circle cx="287.3" cy="981.0" r="0.9" fill="#fff" opacity="0.89"/><circle cx="728.8" cy="533.3" r="1.0" fill="#fff" opacity="0.59"/><circle cx="677.7" cy="616.4" r="1.3" fill="#fff" opacity="0.80"/><circle cx="1431.9" cy="1138.4" r="1.0" fill="#fff" opacity="0.34"/><circle cx="583.7" cy="187.3" r="1.0" fill="#fff" opacity="0.74"/><circle cx="1766.7" cy="388.7" r="0.8" fill="#fff" opacity="0.93"/><circle cx="818.8" cy="1049.3" r="0.7" fill="#fff" opacity="0.23"/><circle cx="1720.1" cy="361.6" r="0.9" fill="#fff" opacity="0.72"/><circle cx="993.5" cy="606.4" r="1.0" fill="#fff" opacity="0.64"/><circle cx="1141.9" cy="419.3" r="0.7" fill="#fff" opacity="0.79"/><circle cx="190.0" cy="445.6" r="1.0" fill="#fff" opacity="0.77"/><circle cx="296.1" cy="235.9" r="1.0" fill="#fff" opacity="0.69"/><circle cx="1199.2" cy="1145.6" r="0.9" fill="#fff" opacity="0.40"/><circle cx="177.1" cy="432.4" r="0.9" fill="#fff" opacity="0.94"/><circle cx="984.2" cy="148.4" r="0.9" fill="#fff" opacity="0.79"/><circle cx="1901.3" cy="1024.0" r="1.0" fill="#fff" opacity="0.38"/><circle cx="1567.0" cy="258.0" r="0.8" fill="#fff" opacity="0.66"/><circle cx="1084.7" cy="144.1" r="1.3" fill="#fff" opacity="0.80"/><circle cx="5.3" cy="824.2" r="0.7" fill="#fff" opacity="0.91"/><circle cx="189.1" cy="41.4" r="0.7" fill="#fff" opacity="0.55"/><circle cx="1062.2" cy="323.5" r="0.8" fill="#fff" opacity="0.74"/><circle cx="233.3" cy="200.5" r="0.7" fill="#fff" opacity="0.46"/><circle cx="1819.8" cy="576.2" r="1.0" fill="#fff" opacity="0.76"/><circle cx="119.3" cy="38.1" r="0.9" fill="#fff" opacity="0.52"/><circle cx="528.9" cy="61.0" r="0.7" fill="#fff" opacity="0.88"/><circle cx="121.0" cy="239.8" r="1.0" fill="#fff" opacity="0.46"/><circle cx="760.3" cy="884.3" r="0.7" fill="#fff" opacity="0.67"/><circle cx="478.7" cy="73.5" r="0.8" fill="#fff" opacity="0.61"/><circle cx="1566.5" cy="365.9" r="0.9" fill="#fff" opacity="0.93"/><circle cx="1823.4" cy="297.5" r="1.0" fill="#fff" opacity="0.79"/><circle cx="793.9" cy="472.8" r="1.0" fill="#fff" opacity="0.46"/><circle cx="167.9" cy="215.3" r="1.0" fill="#fff" opacity="0.54"/><circle cx="558.1" cy="656.3" r="0.7" fill="#fff" opacity="0.62"/><circle cx="644.9" cy="757.3" r="0.7" fill="#fff" opacity="0.66"/><circle cx="1063.4" cy="460.2" r="1.0" fill="#fff" opacity="0.59"/><circle cx="67.0" cy="772.0" r="0.9" fill="#fff" opacity="0.85"/><circle cx="249.3" cy="245.0" r="0.8" fill="#fff" opacity="0.73"/><circle cx="1526.3" cy="294.4" r="0.9" fill="#fff" opacity="0.63"/><circle cx="723.6" cy="1103.2" r="0.8" fill="#fff" opacity="0.30"/><circle cx="392.5" cy="990.5" r="0.8" fill="#fff" opacity="0.92"/><circle cx="1144.2" cy="519.8" r="0.9" fill="#fff" opacity="0.72"/><circle cx="979.6" cy="165.3" r="0.7" fill="#fff" opacity="0.79"/><circle cx="1635.6" cy="852.7" r="1.0" fill="#fff" opacity="0.46"/><circle cx="278.5" cy="40.9" r="0.7" fill="#fff" opacity="0.80"/><circle cx="444.6" cy="236.0" r="0.7" fill="#fff" opacity="0.48"/><circle cx="1545.9" cy="878.0" r="0.8" fill="#fff" opacity="0.48"/><circle cx="434.7" cy="166.0" r="1.0" fill="#fff" opacity="0.59"/><circle cx="1745.1" cy="896.6" r="0.8" fill="#fff" opacity="0.92"/><circle cx="703.8" cy="924.1" r="0.9" fill="#fff" opacity="0.90"/><circle cx="1351.3" cy="544.9" r="1.0" fill="#fff" opacity="0.63"/><circle cx="348.8" cy="153.8" r="0.8" fill="#fff" opacity="0.81"/><circle cx="76.8" cy="206.4" r="0.8" fill="#fff" opacity="0.83"/><circle cx="1417.6" cy="645.9" r="0.8" fill="#fff" opacity="0.73"/><circle cx="956.0" cy="610.4" r="1.0" fill="#fff" opacity="0.79"/><circle cx="1796.5" cy="150.0" r="0.9" fill="#fff" opacity="0.90"/><circle cx="1123.4" cy="807.7" r="0.8" fill="#fff" opacity="0.79"/><circle cx="611.6" cy="899.0" r="0.9" fill="#fff" opacity="0.82"/><circle cx="1333.8" cy="467.2" r="0.8" fill="#fff" opacity="0.59"/><circle cx="1817.0" cy="501.4" r="0.9" fill="#fff" opacity="0.80"/><circle cx="1593.6" cy="731.2" r="1.0" fill="#fff" opacity="0.70"/><circle cx="395.5" cy="781.9" r="0.8" fill="#fff" opacity="0.69"/><circle cx="1828.4" cy="953.1" r="0.9" fill="#fff" opacity="0.54"/><circle cx="1499.3" cy="289.7" r="0.9" fill="#fff" opacity="0.57"/><circle cx="687.0" cy="487.5" r="0.8" fill="#fff" opacity="0.77"/><circle cx="1317.6" cy="571.7" r="1.0" fill="#fff" opacity="0.57"/><circle cx="989.5" cy="525.1" r="0.9" fill="#fff" opacity="0.80"/><circle cx="1358.8" cy="685.6" r="0.8" fill="#fff" opacity="0.62"/><circle cx="1052.7" cy="880.3" r="0.8" fill="#fff" opacity="0.79"/><circle cx="1880.3" cy="969.3" r="1.0" fill="#fff" opacity="0.87"/><circle cx="555.5" cy="429.9" r="0.8" fill="#fff" opacity="0.47"/><circle cx="583.5" cy="148.5" r="0.9" fill="#fff" opacity="0.67"/><circle cx="623.0" cy="551.7" r="0.9" fill="#fff" opacity="0.59"/><circle cx="87.5" cy="551.5" r="1.0" fill="#fff" opacity="0.49"/><circle cx="1882.0" cy="658.7" r="0.7" fill="#fff" opacity="0.77"/><circle cx="937.6" cy="906.6" r="0.9" fill="#fff" opacity="0.45"/><circle cx="1237.5" cy="730.8" r="0.9" fill="#fff" opacity="0.78"/><circle cx="1435.1" cy="52.5" r="1.0" fill="#fff" opacity="0.87"/><circle cx="356.6" cy="742.5" r="0.8" fill="#fff" opacity="0.50"/><circle cx="595.9" cy="718.5" r="1.0" fill="#fff" opacity="0.54"/><circle cx="614.7" cy="439.0" r="0.9" fill="#fff" opacity="0.87"/><circle cx="110.8" cy="144.7" r="1.0" fill="#fff" opacity="0.90"/><circle cx="949.2" cy="586.5" r="0.8" fill="#fff" opacity="0.95"/><circle cx="1202.9" cy="183.8" r="0.8" fill="#fff" opacity="0.53"/><circle cx="1862.0" cy="125.0" r="0.7" fill="#fff" opacity="0.88"/><circle cx="419.1" cy="443.4" r="0.7" fill="#fff" opacity="0.87"/><circle cx="1510.9" cy="503.1" r="0.9" fill="#fff" opacity="0.49"/><circle cx="1364.7" cy="1026.8" r="0.7" fill="#fff" opacity="0.33"/><circle cx="1586.1" cy="1041.9" r="1.3" fill="#fff" opacity="0.80"/><circle cx="1544.0" cy="784.3" r="0.8" fill="#fff" opacity="0.68"/><circle cx="992.2" cy="506.4" r="0.8" fill="#fff" opacity="0.94"/><circle cx="1190.1" cy="937.4" r="0.7" fill="#fff" opacity="0.81"/><circle cx="1264.2" cy="660.2" r="1.0" fill="#fff" opacity="0.93"/><circle cx="1242.9" cy="361.0" r="0.9" fill="#fff" opacity="0.72"/><circle cx="1628.4" cy="274.5" r="1.0" fill="#fff" opacity="0.80"/><circle cx="1111.8" cy="648.8" r="1.0" fill="#fff" opacity="0.63"/><circle cx="847.4" cy="318.0" r="0.8" fill="#fff" opacity="0.54"/><circle cx="1052.4" cy="150.4" r="0.9" fill="#fff" opacity="0.77"/><circle cx="1286.9" cy="822.4" r="0.8" fill="#fff" opacity="0.73"/><circle cx="1099.6" cy="151.3" r="0.7" fill="#fff" opacity="0.88"/><circle cx="1536.6" cy="175.2" r="0.7" fill="#fff" opacity="0.76"/><circle cx="989.1" cy="541.9" r="1.0" fill="#fff" opacity="0.72"/><circle cx="368.0" cy="559.0" r="0.7" fill="#fff" opacity="0.52"/><circle cx="110.5" cy="290.8" r="0.9" fill="#fff" opacity="0.47"/><circle cx="1834.8" cy="541.6" r="0.7" fill="#fff" opacity="0.80"/><circle cx="1706.2" cy="723.4" r="0.8" fill="#fff" opacity="0.73"/><circle cx="1671.9" cy="213.2" r="0.9" fill="#fff" opacity="0.85"/><circle cx="22.4" cy="311.8" r="0.8" fill="#fff" opacity="0.64"/><circle cx="1820.2" cy="836.7" r="0.7" fill="#fff" opacity="0.86"/><circle cx="683.0" cy="392.6" r="0.7" fill="#fff" opacity="0.47"/><circle cx="465.5" cy="423.0" r="1.0" fill="#fff" opacity="0.46"/><circle cx="844.6" cy="914.9" r="1.0" fill="#fff" opacity="0.51"/><circle cx="355.7" cy="648.1" r="0.9" fill="#fff" opacity="0.89"/><circle cx="1605.5" cy="686.4" r="0.9" fill="#fff" opacity="0.72"/><circle cx="1551.7" cy="1092.3" r="0.7" fill="#fff" opacity="0.23"/><circle cx="935.4" cy="568.9" r="0.7" fill="#fff" opacity="0.85"/><circle cx="350.0" cy="945.4" r="1.0" fill="#fff" opacity="0.87"/><circle cx="1330.4" cy="529.1" r="0.8" fill="#fff" opacity="0.89"/><circle cx="145.7" cy="394.8" r="0.8" fill="#fff" opacity="0.61"/><circle cx="1199.3" cy="262.0" r="0.9" fill="#fff" opacity="0.81"/><circle cx="899.3" cy="1079.5" r="0.9" fill="#fff" opacity="0.23"/><circle cx="640.9" cy="47.1" r="1.0" fill="#fff" opacity="0.89"/><circle cx="1211.3" cy="842.6" r="0.8" fill="#fff" opacity="0.59"/><circle cx="960.0" cy="319.1" r="0.8" fill="#fff" opacity="0.95"/><circle cx="1076.4" cy="892.0" r="0.8" fill="#fff" opacity="0.84"/><circle cx="1218.5" cy="432.6" r="0.9" fill="#fff" opacity="0.85"/><circle cx="1529.7" cy="182.9" r="0.7" fill="#fff" opacity="0.60"/><circle cx="1419.9" cy="597.0" r="0.8" fill="#fff" opacity="0.63"/><circle cx="779.4" cy="92.1" r="0.9" fill="#fff" opacity="0.79"/><circle cx="1502.5" cy="591.2" r="0.8" fill="#fff" opacity="0.85"/><circle cx="289.6" cy="255.2" r="1.0" fill="#fff" opacity="0.65"/><circle cx="1482.9" cy="1070.6" r="0.7" fill="#fff" opacity="0.26"/><circle cx="484.1" cy="668.0" r="0.9" fill="#fff" opacity="0.49"/><circle cx="1775.6" cy="682.6" r="0.9" fill="#fff" opacity="0.74"/><circle cx="685.4" cy="896.0" r="1.0" fill="#fff" opacity="0.81"/><circle cx="1610.1" cy="383.5" r="0.8" fill="#fff" opacity="0.59"/><circle cx="44.3" cy="209.3" r="0.9" fill="#fff" opacity="0.57"/><circle cx="91.6" cy="528.4" r="0.9" fill="#fff" opacity="0.88"/><circle cx="377.7" cy="850.4" r="0.8" fill="#fff" opacity="0.75"/><circle cx="1554.2" cy="1009.8" r="1.3" fill="#fff" opacity="0.80"/><circle cx="519.6" cy="747.4" r="0.7" fill="#fff" opacity="0.77"/><circle cx="407.5" cy="391.9" r="0.7" fill="#fff" opacity="0.77"/><circle cx="1303.6" cy="404.3" r="0.7" fill="#fff" opacity="0.88"/><circle cx="167.4" cy="714.0" r="1.0" fill="#fff" opacity="0.94"/><circle cx="1805.3" cy="1007.4" r="0.7" fill="#fff" opacity="0.46"/><circle cx="1896.0" cy="87.1" r="1.3" fill="#fff" opacity="0.80"/><circle cx="404.1" cy="620.2" r="0.7" fill="#fff" opacity="0.63"/><circle cx="660.7" cy="789.8" r="0.8" fill="#fff" opacity="0.78"/><circle cx="635.2" cy="858.5" r="0.9" fill="#fff" opacity="0.86"/><circle cx="60.7" cy="752.9" r="1.0" fill="#fff" opacity="0.73"/><circle cx="1016.9" cy="332.4" r="0.9" fill="#fff" opacity="0.45"/><circle cx="1258.3" cy="895.7" r="0.9" fill="#fff" opacity="0.53"/><circle cx="769.6" cy="1126.4" r="0.7" fill="#fff" opacity="0.38"/><circle cx="1043.1" cy="254.8" r="0.8" fill="#fff" opacity="0.58"/><circle cx="1416.2" cy="1040.6" r="0.8" fill="#fff" opacity="0.36"/><circle cx="1362.5" cy="521.2" r="1.0" fill="#fff" opacity="0.56"/><circle cx="1730.0" cy="462.0" r="0.8" fill="#fff" opacity="0.61"/><circle cx="207.0" cy="849.8" r="0.7" fill="#fff" opacity="0.85"/><circle cx="1294.5" cy="418.9" r="0.8" fill="#fff" opacity="0.73"/><circle cx="1764.7" cy="1088.0" r="0.8" fill="#fff" opacity="0.23"/><circle cx="1361.8" cy="296.3" r="0.9" fill="#fff" opacity="0.55"/><circle cx="1234.0" cy="360.1" r="1.0" fill="#fff" opacity="0.56"/><circle cx="300.9" cy="995.8" r="0.9" fill="#fff" opacity="0.93"/><circle cx="576.2" cy="123.6" r="0.7" fill="#fff" opacity="0.69"/><circle cx="310.3" cy="792.8" r="1.0" fill="#fff" opacity="0.56"/><circle cx="1501.8" cy="982.6" r="0.9" fill="#fff" opacity="0.47"/><circle cx="843.0" cy="513.6" r="0.8" fill="#fff" opacity="0.95"/><circle cx="46.9" cy="149.6" r="0.7" fill="#fff" opacity="0.52"/><circle cx="965.0" cy="420.0" r="0.8" fill="#fff" opacity="0.68"/><circle cx="795.3" cy="747.1" r="1.0" fill="#fff" opacity="0.89"/><circle cx="63.2" cy="288.2" r="0.7" fill="#fff" opacity="0.47"/><circle cx="444.7" cy="508.7" r="0.7" fill="#fff" opacity="0.81"/><circle cx="1716.5" cy="96.7" r="0.7" fill="#fff" opacity="0.51"/><circle cx="260.8" cy="506.5" r="0.8" fill="#fff" opacity="0.56"/><circle cx="1215.7" cy="638.3" r="0.7" fill="#fff" opacity="0.71"/><circle cx="1837.9" cy="111.1" r="0.8" fill="#fff" opacity="0.88"/><circle cx="430.0" cy="105.5" r="0.8" fill="#fff" opacity="0.46"/><circle cx="1855.3" cy="245.2" r="0.7" fill="#fff" opacity="0.65"/><circle cx="696.2" cy="35.9" r="0.7" fill="#fff" opacity="0.78"/><circle cx="1053.7" cy="801.3" r="0.9" fill="#fff" opacity="0.65"/><circle cx="804.8" cy="1119.5" r="1.0" fill="#fff" opacity="0.42"/><circle cx="1543.2" cy="1035.3" r="0.7" fill="#fff" opacity="0.28"/><circle cx="1898.2" cy="805.1" r="1.0" fill="#fff" opacity="0.95"/><circle cx="1273.8" cy="121.8" r="0.7" fill="#fff" opacity="0.90"/><circle cx="1332.8" cy="389.2" r="1.0" fill="#fff" opacity="0.72"/><circle cx="1865.5" cy="25.0" r="1.0" fill="#fff" opacity="0.71"/><circle cx="1909.9" cy="288.0" r="1.0" fill="#fff" opacity="0.63"/><circle cx="1873.8" cy="324.0" r="0.9" fill="#fff" opacity="0.49"/><circle cx="1275.3" cy="1064.4" r="0.9" fill="#fff" opacity="0.29"/><circle cx="1646.8" cy="415.6" r="1.0" fill="#fff" opacity="0.74"/><circle cx="126.4" cy="876.7" r="0.9" fill="#fff" opacity="0.71"/><circle cx="1561.6" cy="292.7" r="0.8" fill="#fff" opacity="0.53"/><circle cx="341.2" cy="1090.7" r="0.7" fill="#fff" opacity="0.31"/><circle cx="1658.1" cy="506.0" r="1.0" fill="#fff" opacity="0.53"/><circle cx="197.4" cy="425.6" r="0.9" fill="#fff" opacity="0.68"/><circle cx="759.5" cy="1146.6" r="0.7" fill="#fff" opacity="0.34"/><circle cx="1532.7" cy="878.4" r="0.8" fill="#fff" opacity="0.45"/><circle cx="938.5" cy="767.5" r="0.9" fill="#fff" opacity="0.71"/><circle cx="485.5" cy="650.3" r="0.7" fill="#fff" opacity="0.74"/><circle cx="342.6" cy="832.7" r="0.9" fill="#fff" opacity="0.91"/><circle cx="509.6" cy="517.3" r="1.0" fill="#fff" opacity="0.88"/><circle cx="812.4" cy="916.1" r="0.9" fill="#fff" opacity="0.91"/><circle cx="721.4" cy="71.0" r="0.9" fill="#fff" opacity="0.93"/><circle cx="1166.3" cy="313.1" r="0.8" fill="#fff" opacity="0.64"/><circle cx="1775.6" cy="239.8" r="0.9" fill="#fff" opacity="0.48"/><circle cx="1651.5" cy="114.0" r="1.0" fill="#fff" opacity="0.64"/><circle cx="953.5" cy="1038.9" r="0.7" fill="#fff" opacity="0.25"/><circle cx="1795.3" cy="813.3" r="1.0" fill="#fff" opacity="0.66"/><circle cx="1709.5" cy="519.3" r="1.0" fill="#fff" opacity="0.52"/><circle cx="18.3" cy="285.7" r="0.8" fill="#fff" opacity="0.65"/><circle cx="1305.3" cy="647.6" r="1.0" fill="#fff" opacity="0.83"/><circle cx="423.8" cy="110.9" r="0.7" fill="#fff" opacity="0.50"/><circle cx="1446.4" cy="659.5" r="0.7" fill="#fff" opacity="0.86"/><circle cx="644.3" cy="995.7" r="1.0" fill="#fff" opacity="0.87"/><circle cx="781.3" cy="80.4" r="0.8" fill="#fff" opacity="0.61"/><circle cx="1885.9" cy="233.6" r="0.9" fill="#fff" opacity="0.71"/><circle cx="736.8" cy="771.6" r="0.9" fill="#fff" opacity="0.73"/><circle cx="806.8" cy="81.6" r="0.9" fill="#fff" opacity="0.57"/><circle cx="837.3" cy="631.6" r="0.9" fill="#fff" opacity="0.55"/><circle cx="1030.8" cy="444.9" r="1.0" fill="#fff" opacity="0.78"/><circle cx="271.3" cy="1071.7" r="0.9" fill="#fff" opacity="0.28"/><circle cx="1067.8" cy="81.6" r="0.9" fill="#fff" opacity="0.45"/><circle cx="1826.7" cy="951.1" r="0.7" fill="#fff" opacity="0.59"/><circle cx="559.7" cy="824.1" r="1.0" fill="#fff" opacity="0.65"/><circle cx="391.4" cy="252.8" r="0.8" fill="#fff" opacity="0.67"/><circle cx="94.0" cy="995.3" r="0.7" fill="#fff" opacity="0.86"/><circle cx="27.2" cy="836.2" r="0.8" fill="#fff" opacity="0.70"/><circle cx="1295.9" cy="356.0" r="0.8" fill="#fff" opacity="0.72"/><circle cx="1492.9" cy="829.4" r="0.7" fill="#fff" opacity="0.68"/><circle cx="175.7" cy="80.6" r="0.8" fill="#fff" opacity="0.78"/><circle cx="1739.3" cy="796.3" r="0.8" fill="#fff" opacity="0.88"/><circle cx="256.1" cy="204.3" r="1.0" fill="#fff" opacity="0.60"/><circle cx="1117.5" cy="382.9" r="0.8" fill="#fff" opacity="0.60"/><circle cx="1053.6" cy="265.6" r="0.8" fill="#fff" opacity="0.65"/><circle cx="729.6" cy="745.5" r="0.8" fill="#fff" opacity="0.78"/><circle cx="380.5" cy="191.7" r="0.8" fill="#fff" opacity="0.66"/><circle cx="219.6" cy="956.9" r="0.7" fill="#fff" opacity="0.78"/><circle cx="1259.8" cy="614.4" r="0.7" fill="#fff" opacity="0.60"/><circle cx="1440.7" cy="583.1" r="0.7" fill="#fff" opacity="0.55"/><circle cx="581.7" cy="681.5" r="0.7" fill="#fff" opacity="0.55"/><circle cx="1474.1" cy="885.5" r="0.8" fill="#fff" opacity="0.74"/><circle cx="1113.8" cy="137.4" r="0.7" fill="#fff" opacity="0.62"/><circle cx="1260.5" cy="80.4" r="0.9" fill="#fff" opacity="0.63"/><circle cx="632.7" cy="433.9" r="0.7" fill="#fff" opacity="0.84"/><circle cx="133.3" cy="653.6" r="0.7" fill="#fff" opacity="0.82"/><circle cx="309.8" cy="466.8" r="0.7" fill="#fff" opacity="0.47"/><circle cx="186.7" cy="752.3" r="0.8" fill="#fff" opacity="0.66"/><circle cx="146.4" cy="843.3" r="0.8" fill="#fff" opacity="0.63"/><circle cx="172.9" cy="29.6" r="1.0" fill="#fff" opacity="0.60"/><circle cx="204.5" cy="292.8" r="0.8" fill="#fff" opacity="0.70"/><circle cx="225.8" cy="550.8" r="0.8" fill="#fff" opacity="0.73"/><circle cx="492.0" cy="1093.0" r="0.9" fill="#fff" opacity="0.33"/><circle cx="244.1" cy="294.1" r="1.3" fill="#fff" opacity="0.80"/><circle cx="1811.2" cy="573.9" r="0.8" fill="#fff" opacity="0.79"/><circle cx="1440.1" cy="197.0" r="0.9" fill="#fff" opacity="0.95"/><circle cx="1198.5" cy="147.4" r="0.7" fill="#fff" opacity="0.49"/><circle cx="449.1" cy="694.3" r="0.7" fill="#fff" opacity="0.86"/><circle cx="647.6" cy="134.4" r="0.8" fill="#fff" opacity="0.76"/><circle cx="1564.1" cy="409.2" r="1.0" fill="#fff" opacity="0.75"/><circle cx="609.6" cy="1072.7" r="1.0" fill="#fff" opacity="0.23"/><circle cx="284.3" cy="599.8" r="0.8" fill="#fff" opacity="0.53"/><circle cx="269.5" cy="247.2" r="0.8" fill="#fff" opacity="0.79"/><circle cx="128.4" cy="27.2" r="1.0" fill="#fff" opacity="0.47"/><circle cx="633.6" cy="101.7" r="0.7" fill="#fff" opacity="0.55"/><circle cx="1623.8" cy="909.7" r="0.7" fill="#fff" opacity="0.78"/><circle cx="1118.9" cy="928.6" r="1.0" fill="#fff" opacity="0.79"/><circle cx="259.1" cy="956.8" r="0.9" fill="#fff" opacity="0.90"/><circle cx="1598.3" cy="927.2" r="0.8" fill="#fff" opacity="0.67"/><circle cx="1506.1" cy="1004.5" r="0.9" fill="#fff" opacity="0.41"/><circle cx="1258.0" cy="736.2" r="0.7" fill="#fff" opacity="0.93"/><circle cx="483.8" cy="968.0" r="0.8" fill="#fff" opacity="0.57"/><circle cx="1078.3" cy="1012.1" r="0.7" fill="#fff" opacity="0.32"/><circle cx="1523.8" cy="792.9" r="0.9" fill="#fff" opacity="0.86"/><circle cx="167.2" cy="758.7" r="0.9" fill="#fff" opacity="0.78"/><circle cx="819.1" cy="367.2" r="1.3" fill="#fff" opacity="0.80"/><circle cx="212.3" cy="938.8" r="1.0" fill="#fff" opacity="0.66"/><circle cx="280.0" cy="638.1" r="0.7" fill="#fff" opacity="0.63"/><circle cx="1189.0" cy="352.9" r="0.7" fill="#fff" opacity="0.95"/><circle cx="1707.9" cy="482.8" r="0.8" fill="#fff" opacity="0.51"/><circle cx="79.7" cy="950.6" r="0.8" fill="#fff" opacity="0.64"/><circle cx="289.7" cy="212.5" r="0.9" fill="#fff" opacity="0.89"/><circle cx="1716.3" cy="468.0" r="1.0" fill="#fff" opacity="0.61"/><circle cx="1518.2" cy="707.0" r="1.3" fill="#fff" opacity="0.80"/><circle cx="1638.7" cy="140.8" r="0.8" fill="#fff" opacity="0.68"/><circle cx="481.6" cy="420.7" r="0.7" fill="#fff" opacity="0.94"/><circle cx="1446.0" cy="774.0" r="0.8" fill="#fff" opacity="0.91"/><circle cx="1279.3" cy="109.5" r="0.9" fill="#fff" opacity="0.67"/><circle cx="694.7" cy="768.5" r="1.0" fill="#fff" opacity="0.92"/><circle cx="114.6" cy="761.1" r="1.0" fill="#fff" opacity="0.63"/><circle cx="109.4" cy="964.0" r="0.7" fill="#fff" opacity="0.73"/><circle cx="1442.1" cy="1027.4" r="1.0" fill="#fff" opacity="0.23"/><circle cx="263.0" cy="1097.1" r="0.9" fill="#fff" opacity="0.26"/><circle cx="1107.4" cy="76.6" r="1.0" fill="#fff" opacity="0.54"/><circle cx="1885.7" cy="730.3" r="0.8" fill="#fff" opacity="0.60"/><circle cx="807.7" cy="1125.4" r="0.7" fill="#fff" opacity="0.43"/><circle cx="730.5" cy="1108.4" r="0.9" fill="#fff" opacity="0.40"/><circle cx="310.8" cy="671.6" r="0.7" fill="#fff" opacity="0.85"/><circle cx="268.6" cy="605.0" r="0.7" fill="#fff" opacity="0.53"/><circle cx="327.7" cy="375.3" r="0.7" fill="#fff" opacity="0.74"/><circle cx="1492.0" cy="429.5" r="0.8" fill="#fff" opacity="0.59"/><circle cx="911.5" cy="722.9" r="1.0" fill="#fff" opacity="0.65"/><circle cx="694.6" cy="383.9" r="1.0" fill="#fff" opacity="0.58"/><circle cx="1744.8" cy="531.0" r="1.0" fill="#fff" opacity="0.77"/><circle cx="604.3" cy="195.2" r="1.0" fill="#fff" opacity="0.78"/><circle cx="790.5" cy="110.1" r="1.0" fill="#fff" opacity="0.63"/><circle cx="1016.3" cy="348.7" r="0.7" fill="#fff" opacity="0.58"/><circle cx="79.4" cy="954.8" r="0.9" fill="#fff" opacity="0.63"/><circle cx="509.8" cy="298.0" r="0.7" fill="#fff" opacity="0.89"/><circle cx="1157.3" cy="956.7" r="0.7" fill="#fff" opacity="0.92"/><circle cx="338.7" cy="838.0" r="0.7" fill="#fff" opacity="0.84"/><circle cx="1805.5" cy="860.0" r="0.9" fill="#fff" opacity="0.65"/><circle cx="646.7" cy="998.0" r="0.8" fill="#fff" opacity="0.72"/><circle cx="1285.3" cy="1039.1" r="0.8" fill="#fff" opacity="0.28"/><circle cx="1775.1" cy="99.2" r="0.7" fill="#fff" opacity="0.88"/><circle cx="1109.4" cy="478.5" r="0.9" fill="#fff" opacity="0.84"/><circle cx="1637.7" cy="173.1" r="0.8" fill="#fff" opacity="0.79"/><circle cx="961.1" cy="1035.5" r="0.7" fill="#fff" opacity="0.41"/><circle cx="1245.8" cy="1013.4" r="0.8" fill="#fff" opacity="0.39"/><circle cx="737.9" cy="1033.2" r="0.7" fill="#fff" opacity="0.42"/><circle cx="977.4" cy="708.2" r="0.8" fill="#fff" opacity="0.60"/><circle cx="1092.5" cy="1024.3" r="0.7" fill="#fff" opacity="0.31"/><circle cx="138.6" cy="968.3" r="0.9" fill="#fff" opacity="0.56"/><circle cx="1466.9" cy="527.2" r="0.7" fill="#fff" opacity="0.94"/><circle cx="1143.7" cy="60.3" r="1.0" fill="#fff" opacity="0.51"/><circle cx="1208.5" cy="407.0" r="0.9" fill="#fff" opacity="0.72"/><circle cx="1068.7" cy="947.9" r="0.9" fill="#fff" opacity="0.87"/><circle cx="1031.2" cy="58.3" r="0.8" fill="#fff" opacity="0.46"/><circle cx="813.9" cy="95.0" r="0.9" fill="#fff" opacity="0.81"/><circle cx="768.3" cy="600.6" r="1.0" fill="#fff" opacity="0.56"/><circle cx="1911.7" cy="929.5" r="0.9" fill="#fff" opacity="0.78"/><circle cx="1232.2" cy="672.1" r="1.0" fill="#fff" opacity="0.68"/><circle cx="1360.2" cy="535.9" r="0.9" fill="#fff" opacity="0.76"/><circle cx="317.9" cy="879.3" r="0.7" fill="#fff" opacity="0.82"/><circle cx="842.1" cy="246.6" r="0.8" fill="#fff" opacity="0.84"/><circle cx="1450.6" cy="967.6" r="0.9" fill="#fff" opacity="0.82"/><circle cx="1766.3" cy="837.6" r="0.7" fill="#fff" opacity="0.48"/><circle cx="25.0" cy="996.4" r="0.9" fill="#fff" opacity="0.73"/><circle cx="1085.5" cy="379.5" r="0.9" fill="#fff" opacity="0.60"/><circle cx="336.3" cy="424.0" r="0.7" fill="#fff" opacity="0.85"/><circle cx="196.1" cy="144.1" r="0.8" fill="#fff" opacity="0.63"/><circle cx="933.2" cy="117.2" r="0.9" fill="#fff" opacity="0.85"/><circle cx="1578.1" cy="168.5" r="0.7" fill="#fff" opacity="0.71"/><circle cx="746.7" cy="422.4" r="0.7" fill="#fff" opacity="0.92"/><circle cx="534.4" cy="941.7" r="1.0" fill="#fff" opacity="0.84"/><circle cx="309.0" cy="1033.3" r="1.3" fill="#fff" opacity="0.80"/><circle cx="410.9" cy="683.1" r="1.0" fill="#fff" opacity="0.46"/><circle cx="1868.5" cy="120.9" r="0.7" fill="#fff" opacity="0.55"/><circle cx="1754.6" cy="990.7" r="0.9" fill="#fff" opacity="0.76"/><circle cx="930.3" cy="744.0" r="0.8" fill="#fff" opacity="0.45"/><circle cx="680.8" cy="1015.6" r="0.7" fill="#fff" opacity="0.37"/><circle cx="383.8" cy="537.9" r="1.0" fill="#fff" opacity="0.83"/><circle cx="1380.8" cy="994.3" r="0.8" fill="#fff" opacity="0.65"/><circle cx="1370.4" cy="294.0" r="1.0" fill="#fff" opacity="0.80"/><circle cx="272.2" cy="1047.6" r="1.0" fill="#fff" opacity="0.24"/><circle cx="1894.7" cy="281.5" r="1.0" fill="#fff" opacity="0.73"/><circle cx="430.4" cy="855.5" r="0.7" fill="#fff" opacity="0.57"/><circle cx="384.3" cy="25.1" r="1.0" fill="#fff" opacity="0.47"/><circle cx="1786.9" cy="271.3" r="0.7" fill="#fff" opacity="0.92"/><circle cx="1765.0" cy="320.1" r="0.8" fill="#fff" opacity="0.68"/><circle cx="1836.4" cy="879.2" r="0.7" fill="#fff" opacity="0.54"/><circle cx="312.6" cy="600.7" r="0.7" fill="#fff" opacity="0.70"/><circle cx="732.7" cy="1013.7" r="0.7" fill="#fff" opacity="0.44"/><circle cx="1577.0" cy="589.8" r="0.7" fill="#fff" opacity="0.80"/><circle cx="1181.0" cy="538.7" r="0.7" fill="#fff" opacity="0.73"/><circle cx="359.7" cy="594.9" r="1.0" fill="#fff" opacity="0.55"/><circle cx="1412.2" cy="780.4" r="0.7" fill="#fff" opacity="0.76"/><circle cx="997.8" cy="787.0" r="0.7" fill="#fff" opacity="0.82"/><circle cx="1628.8" cy="138.2" r="0.9" fill="#fff" opacity="0.59"/><circle cx="567.8" cy="580.4" r="1.3" fill="#fff" opacity="0.80"/><circle cx="144.0" cy="152.0" r="0.8" fill="#fff" opacity="0.71"/><circle cx="782.2" cy="712.0" r="0.8" fill="#fff" opacity="0.91"/><circle cx="1529.4" cy="1051.9" r="0.7" fill="#fff" opacity="0.40"/><circle cx="1307.3" cy="981.1" r="1.0" fill="#fff" opacity="0.85"/><circle cx="1187.9" cy="354.3" r="0.9" fill="#fff" opacity="0.80"/><circle cx="577.0" cy="416.4" r="0.9" fill="#fff" opacity="0.64"/><circle cx="312.8" cy="1090.0" r="1.0" fill="#fff" opacity="0.42"/><circle cx="1909.0" cy="871.5" r="1.3" fill="#fff" opacity="0.80"/><circle cx="1032.7" cy="407.6" r="0.9" fill="#fff" opacity="0.91"/><circle cx="1479.2" cy="896.6" r="0.9" fill="#fff" opacity="0.85"/><circle cx="201.3" cy="953.4" r="0.9" fill="#fff" opacity="0.66"/><circle cx="123.4" cy="161.2" r="1.0" fill="#fff" opacity="0.53"/><circle cx="1247.9" cy="630.2" r="1.0" fill="#fff" opacity="0.92"/><circle cx="1490.6" cy="735.1" r="0.8" fill="#fff" opacity="0.56"/><circle cx="1700.5" cy="828.3" r="1.0" fill="#fff" opacity="0.81"/><circle cx="338.5" cy="517.2" r="0.8" fill="#fff" opacity="0.80"/><circle cx="1446.0" cy="303.8" r="0.9" fill="#fff" opacity="0.93"/><circle cx="1663.2" cy="745.9" r="0.8" fill="#fff" opacity="0.78"/><circle cx="1334.2" cy="366.2" r="0.7" fill="#fff" opacity="0.81"/><circle cx="141.0" cy="107.9" r="0.7" fill="#fff" opacity="0.81"/><circle cx="979.7" cy="1012.4" r="1.0" fill="#fff" opacity="0.27"/><circle cx="582.1" cy="484.5" r="0.8" fill="#fff" opacity="0.67"/><circle cx="182.1" cy="1073.8" r="0.9" fill="#fff" opacity="0.31"/><circle cx="744.9" cy="907.3" r="0.7" fill="#fff" opacity="0.88"/><circle cx="1287.8" cy="336.6" r="0.7" fill="#fff" opacity="0.87"/><circle cx="171.8" cy="905.0" r="0.9" fill="#fff" opacity="0.78"/><circle cx="275.8" cy="133.3" r="0.7" fill="#fff" opacity="0.64"/><circle cx="1093.7" cy="275.4" r="0.7" fill="#fff" opacity="0.60"/><circle cx="1787.0" cy="1078.0" r="0.9" fill="#fff" opacity="0.32"/><circle cx="265.7" cy="911.3" r="0.9" fill="#fff" opacity="0.64"/><circle cx="1273.3" cy="1006.3" r="0.8" fill="#fff" opacity="0.30"/><circle cx="1468.4" cy="276.2" r="0.8" fill="#fff" opacity="0.89"/><circle cx="1638.0" cy="295.2" r="1.3" fill="#fff" opacity="0.80"/><circle cx="191.2" cy="449.0" r="0.9" fill="#fff" opacity="0.57"/><circle cx="841.6" cy="154.4" r="1.0" fill="#fff" opacity="0.73"/><circle cx="777.0" cy="570.1" r="0.8" fill="#fff" opacity="0.90"/><circle cx="116.6" cy="238.8" r="0.9" fill="#fff" opacity="0.63"/><circle cx="1798.2" cy="648.7" r="0.7" fill="#fff" opacity="0.70"/><circle cx="414.5" cy="712.1" r="1.0" fill="#fff" opacity="0.51"/><circle cx="1007.7" cy="293.9" r="0.8" fill="#fff" opacity="0.71"/><circle cx="194.9" cy="561.5" r="1.0" fill="#fff" opacity="0.91"/><circle cx="1404.1" cy="107.8" r="1.0" fill="#fff" opacity="0.77"/><circle cx="538.8" cy="912.5" r="0.7" fill="#fff" opacity="0.51"/><circle cx="924.6" cy="226.6" r="0.7" fill="#fff" opacity="0.76"/><circle cx="1733.1" cy="748.7" r="0.7" fill="#fff" opacity="0.72"/><circle cx="958.1" cy="705.1" r="0.9" fill="#fff" opacity="0.52"/><circle cx="1815.5" cy="857.7" r="0.9" fill="#fff" opacity="0.78"/><circle cx="1343.6" cy="41.6" r="1.0" fill="#fff" opacity="0.90"/><circle cx="416.6" cy="64.4" r="1.0" fill="#fff" opacity="0.94"/><circle cx="584.5" cy="377.6" r="0.8" fill="#fff" opacity="0.92"/><circle cx="1303.9" cy="38.2" r="1.0" fill="#fff" opacity="0.57"/><circle cx="982.4" cy="1091.8" r="1.0" fill="#fff" opacity="0.39"/><circle cx="1739.5" cy="240.6" r="1.0" fill="#fff" opacity="0.55"/><circle cx="876.6" cy="278.8" r="0.9" fill="#fff" opacity="0.47"/><circle cx="793.1" cy="822.3" r="0.9" fill="#fff" opacity="0.84"/><circle cx="1607.0" cy="198.3" r="0.9" fill="#fff" opacity="0.75"/><circle cx="1051.9" cy="459.3" r="0.9" fill="#fff" opacity="0.57"/><circle cx="1843.7" cy="191.9" r="0.8" fill="#fff" opacity="0.95"/><circle cx="616.7" cy="872.2" r="0.8" fill="#fff" opacity="0.57"/><circle cx="1124.3" cy="533.4" r="1.0" fill="#fff" opacity="0.58"/><circle cx="428.1" cy="193.8" r="0.9" fill="#fff" opacity="0.93"/><circle cx="182.1" cy="514.5" r="0.7" fill="#fff" opacity="0.93"/><circle cx="135.4" cy="872.4" r="0.8" fill="#fff" opacity="0.89"/><circle cx="1016.4" cy="979.8" r="0.7" fill="#fff" opacity="0.67"/><circle cx="1018.4" cy="789.5" r="0.9" fill="#fff" opacity="0.90"/><circle cx="370.0" cy="109.6" r="0.9" fill="#fff" opacity="0.74"/><circle cx="1328.8" cy="311.9" r="0.8" fill="#fff" opacity="0.66"/><circle cx="494.3" cy="949.6" r="0.7" fill="#fff" opacity="0.76"/><circle cx="1290.4" cy="924.3" r="0.7" fill="#fff" opacity="0.67"/><circle cx="1460.7" cy="1100.4" r="0.8" fill="#fff" opacity="0.34"/><circle cx="1864.8" cy="1125.5" r="0.7" fill="#fff" opacity="0.46"/><circle cx="785.5" cy="1106.8" r="0.8" fill="#fff" opacity="0.32"/><circle cx="729.8" cy="580.6" r="0.9" fill="#fff" opacity="0.51"/><circle cx="412.7" cy="323.5" r="0.7" fill="#fff" opacity="0.70"/><circle cx="1182.7" cy="751.8" r="1.0" fill="#fff" opacity="0.74"/><circle cx="1107.8" cy="424.5" r="1.0" fill="#fff" opacity="0.61"/><circle cx="1330.8" cy="785.7" r="0.8" fill="#fff" opacity="0.65"/><circle cx="1208.4" cy="353.0" r="0.8" fill="#fff" opacity="0.77"/><circle cx="1855.3" cy="245.0" r="0.9" fill="#fff" opacity="0.77"/><circle cx="124.3" cy="536.2" r="1.3" fill="#fff" opacity="0.80"/><circle cx="1026.9" cy="841.1" r="0.9" fill="#fff" opacity="0.46"/><circle cx="1607.2" cy="120.6" r="0.8" fill="#fff" opacity="0.45"/><circle cx="509.1" cy="824.7" r="0.8" fill="#fff" opacity="0.46"/><circle cx="1794.4" cy="1116.2" r="0.8" fill="#fff" opacity="0.34"/><circle cx="670.0" cy="352.5" r="1.0" fill="#fff" opacity="0.89"/><circle cx="1780.3" cy="321.2" r="0.9" fill="#fff" opacity="0.50"/><circle cx="1337.5" cy="320.1" r="0.9" fill="#fff" opacity="0.62"/><circle cx="361.7" cy="1070.0" r="0.7" fill="#fff" opacity="0.41"/><circle cx="811.8" cy="356.3" r="0.7" fill="#fff" opacity="0.56"/><circle cx="1539.8" cy="130.1" r="0.8" fill="#fff" opacity="0.55"/><circle cx="1543.7" cy="915.0" r="0.8" fill="#fff" opacity="0.76"/><circle cx="906.0" cy="514.3" r="0.7" fill="#fff" opacity="0.55"/><circle cx="207.2" cy="737.8" r="0.8" fill="#fff" opacity="0.83"/><circle cx="1001.9" cy="397.7" r="0.7" fill="#fff" opacity="0.47"/><circle cx="424.3" cy="351.4" r="1.0" fill="#fff" opacity="0.76"/><circle cx="392.9" cy="374.3" r="0.9" fill="#fff" opacity="0.52"/><circle cx="888.8" cy="405.6" r="0.9" fill="#fff" opacity="0.65"/><circle cx="588.3" cy="896.2" r="0.9" fill="#fff" opacity="0.49"/><circle cx="986.4" cy="194.3" r="0.8" fill="#fff" opacity="0.68"/><circle cx="229.6" cy="594.7" r="0.9" fill="#fff" opacity="0.79"/><circle cx="596.7" cy="108.4" r="0.7" fill="#fff" opacity="0.76"/><circle cx="128.1" cy="928.8" r="0.8" fill="#fff" opacity="0.67"/><circle cx="1801.1" cy="495.1" r="0.9" fill="#fff" opacity="0.72"/><circle cx="1391.4" cy="378.3" r="0.7" fill="#fff" opacity="0.50"/><circle cx="1222.7" cy="337.7" r="0.7" fill="#fff" opacity="0.88"/><circle cx="1070.5" cy="95.2" r="0.7" fill="#fff" opacity="0.60"/><circle cx="1441.3" cy="891.9" r="1.0" fill="#fff" opacity="0.71"/><circle cx="1339.1" cy="830.1" r="0.7" fill="#fff" opacity="0.47"/><circle cx="1287.0" cy="620.8" r="0.7" fill="#fff" opacity="0.61"/><circle cx="1159.0" cy="481.5" r="0.8" fill="#fff" opacity="0.54"/><circle cx="817.5" cy="404.6" r="0.7" fill="#fff" opacity="0.90"/><circle cx="1059.7" cy="127.2" r="1.0" fill="#fff" opacity="0.69"/><circle cx="1159.8" cy="349.1" r="1.0" fill="#fff" opacity="0.65"/><circle cx="1511.8" cy="867.4" r="1.0" fill="#fff" opacity="0.50"/><circle cx="650.6" cy="303.2" r="0.9" fill="#fff" opacity="0.71"/><circle cx="1335.0" cy="1123.2" r="0.9" fill="#fff" opacity="0.30"/><circle cx="1629.4" cy="792.6" r="1.3" fill="#fff" opacity="0.80"/><circle cx="444.9" cy="411.1" r="0.9" fill="#fff" opacity="0.75"/><circle cx="1827.9" cy="392.3" r="0.9" fill="#fff" opacity="0.86"/><circle cx="702.4" cy="445.9" r="0.9" fill="#fff" opacity="0.65"/><circle cx="1810.1" cy="38.2" r="1.0" fill="#fff" opacity="0.83"/><circle cx="1088.6" cy="1050.7" r="0.7" fill="#fff" opacity="0.47"/><circle cx="1449.3" cy="939.5" r="0.9" fill="#fff" opacity="0.70"/><circle cx="839.0" cy="369.8" r="0.8" fill="#fff" opacity="0.72"/><circle cx="1575.6" cy="412.8" r="0.8" fill="#fff" opacity="0.87"/><circle cx="267.0" cy="1080.5" r="0.7" fill="#fff" opacity="0.42"/><circle cx="1880.0" cy="1089.4" r="1.0" fill="#fff" opacity="0.42"/><circle cx="1670.1" cy="265.1" r="0.9" fill="#fff" opacity="0.63"/><circle cx="227.2" cy="1022.3" r="0.7" fill="#fff" opacity="0.28"/><circle cx="129.9" cy="858.5" r="0.8" fill="#fff" opacity="0.88"/><circle cx="597.4" cy="560.7" r="1.0" fill="#fff" opacity="0.60"/><circle cx="1717.9" cy="553.8" r="0.9" fill="#fff" opacity="0.82"/><circle cx="1678.0" cy="669.5" r="0.7" fill="#fff" opacity="0.75"/><circle cx="1720.3" cy="101.1" r="1.0" fill="#fff" opacity="0.66"/><circle cx="1277.8" cy="258.1" r="0.9" fill="#fff" opacity="0.72"/><circle cx="1264.9" cy="996.0" r="0.7" fill="#fff" opacity="0.68"/><circle cx="45.4" cy="171.5" r="0.7" fill="#fff" opacity="0.54"/><circle cx="989.2" cy="862.9" r="0.7" fill="#fff" opacity="0.56"/><circle cx="1539.3" cy="270.6" r="1.0" fill="#fff" opacity="0.53"/><circle cx="147.8" cy="493.3" r="0.9" fill="#fff" opacity="0.60"/><circle cx="1405.8" cy="234.4" r="0.7" fill="#fff" opacity="0.78"/><circle cx="1836.8" cy="1150.0" r="0.8" fill="#fff" opacity="0.27"/><circle cx="1058.7" cy="879.2" r="0.9" fill="#fff" opacity="0.48"/><circle cx="969.4" cy="1038.9" r="0.8" fill="#fff" opacity="0.35"/><circle cx="1075.1" cy="185.8" r="1.0" fill="#fff" opacity="0.85"/><circle cx="1156.1" cy="315.8" r="0.9" fill="#fff" opacity="0.57"/><circle cx="1206.7" cy="85.0" r="0.7" fill="#fff" opacity="0.85"/><circle cx="317.6" cy="905.4" r="0.9" fill="#fff" opacity="0.57"/><circle cx="445.7" cy="220.9" r="0.8" fill="#fff" opacity="0.94"/><circle cx="210.8" cy="544.6" r="0.8" fill="#fff" opacity="0.59"/><circle cx="1776.2" cy="83.2" r="0.7" fill="#fff" opacity="0.67"/><circle cx="133.7" cy="921.3" r="1.0" fill="#fff" opacity="0.52"/><circle cx="1226.3" cy="1147.3" r="0.9" fill="#fff" opacity="0.33"/><circle cx="1913.3" cy="280.4" r="1.0" fill="#fff" opacity="0.63"/><circle cx="595.3" cy="739.0" r="1.0" fill="#fff" opacity="0.49"/><circle cx="606.3" cy="592.1" r="0.8" fill="#fff" opacity="0.66"/><circle cx="1475.9" cy="690.6" r="1.0" fill="#fff" opacity="0.92"/><circle cx="380.1" cy="690.6" r="0.8" fill="#fff" opacity="0.70"/><circle cx="675.4" cy="455.8" r="0.7" fill="#fff" opacity="0.65"/><circle cx="816.3" cy="420.3" r="1.0" fill="#fff" opacity="0.77"/><circle cx="1602.4" cy="640.9" r="0.7" fill="#fff" opacity="0.87"/><circle cx="680.6" cy="733.3" r="1.0" fill="#fff" opacity="0.93"/><circle cx="300.4" cy="758.6" r="0.7" fill="#fff" opacity="0.92"/><circle cx="702.4" cy="982.9" r="0.9" fill="#fff" opacity="0.75"/><circle cx="652.9" cy="1087.9" r="1.0" fill="#fff" opacity="0.39"/><circle cx="261.1" cy="1042.4" r="0.7" fill="#fff" opacity="0.38"/><circle cx="846.4" cy="333.3" r="0.7" fill="#fff" opacity="0.62"/><circle cx="1784.4" cy="743.7" r="1.0" fill="#fff" opacity="0.51"/><circle cx="1170.7" cy="660.5" r="0.9" fill="#fff" opacity="0.46"/><circle cx="129.0" cy="936.5" r="0.7" fill="#fff" opacity="0.59"/><circle cx="1577.2" cy="204.4" r="1.0" fill="#fff" opacity="0.46"/><circle cx="114.2" cy="931.1" r="0.8" fill="#fff" opacity="0.61"/><circle cx="838.3" cy="161.4" r="0.7" fill="#fff" opacity="0.92"/><circle cx="1770.1" cy="124.9" r="0.8" fill="#fff" opacity="0.67"/><circle cx="1436.3" cy="990.8" r="1.0" fill="#fff" opacity="0.66"/><circle cx="1361.1" cy="226.1" r="0.8" fill="#fff" opacity="0.94"/><circle cx="107.4" cy="163.9" r="0.7" fill="#fff" opacity="0.61"/><circle cx="323.5" cy="545.7" r="0.7" fill="#fff" opacity="0.54"/><circle cx="1291.2" cy="1115.7" r="0.9" fill="#fff" opacity="0.26"/><circle cx="624.6" cy="484.6" r="1.0" fill="#fff" opacity="0.57"/><circle cx="1910.2" cy="818.8" r="0.8" fill="#fff" opacity="0.53"/><circle cx="1523.9" cy="728.9" r="0.7" fill="#fff" opacity="0.67"/><circle cx="1738.5" cy="905.9" r="0.7" fill="#fff" opacity="0.68"/><circle cx="1153.9" cy="403.4" r="1.0" fill="#fff" opacity="0.71"/><circle cx="92.4" cy="909.6" r="0.8" fill="#fff" opacity="0.70"/><circle cx="300.7" cy="751.5" r="0.7" fill="#fff" opacity="0.87"/><circle cx="1354.7" cy="236.9" r="1.0" fill="#fff" opacity="0.81"/><circle cx="1843.1" cy="1099.9" r="0.8" fill="#fff" opacity="0.30"/><circle cx="516.4" cy="1041.7" r="0.7" fill="#fff" opacity="0.47"/><circle cx="611.1" cy="877.0" r="0.9" fill="#fff" opacity="0.85"/><circle cx="1101.3" cy="638.8" r="0.9" fill="#fff" opacity="0.88"/><circle cx="944.7" cy="957.1" r="0.7" fill="#fff" opacity="0.52"/><circle cx="1100.8" cy="1045.5" r="1.3" fill="#fff" opacity="0.80"/><circle cx="1130.8" cy="174.4" r="1.0" fill="#fff" opacity="0.59"/><circle cx="1672.8" cy="521.5" r="0.9" fill="#fff" opacity="0.49"/><circle cx="707.2" cy="64.2" r="0.9" fill="#fff" opacity="0.56"/><circle cx="533.6" cy="441.2" r="1.0" fill="#fff" opacity="0.83"/><circle cx="1243.2" cy="336.6" r="0.9" fill="#fff" opacity="0.65"/><circle cx="907.7" cy="157.5" r="0.8" fill="#fff" opacity="0.86"/><circle cx="1155.7" cy="997.9" r="0.8" fill="#fff" opacity="0.63"/><circle cx="1647.2" cy="316.4" r="0.7" fill="#fff" opacity="0.67"/><circle cx="157.0" cy="914.8" r="0.7" fill="#fff" opacity="0.56"/><circle cx="1682.1" cy="114.6" r="0.9" fill="#fff" opacity="0.62"/><circle cx="355.8" cy="177.8" r="0.7" fill="#fff" opacity="0.77"/><circle cx="499.7" cy="208.9" r="0.8" fill="#fff" opacity="0.69"/><circle cx="480.4" cy="1051.6" r="0.8" fill="#fff" opacity="0.27"/><circle cx="579.7" cy="1142.7" r="0.7" fill="#fff" opacity="0.38"/><circle cx="1641.3" cy="523.4" r="0.7" fill="#fff" opacity="0.66"/><circle cx="600.5" cy="92.1" r="1.0" fill="#fff" opacity="0.57"/><circle cx="1580.0" cy="1107.2" r="0.9" fill="#fff" opacity="0.27"/><circle cx="1063.9" cy="480.2" r="0.8" fill="#fff" opacity="0.91"/><circle cx="901.6" cy="1074.8" r="0.9" fill="#fff" opacity="0.25"/><circle cx="1870.3" cy="393.9" r="0.9" fill="#fff" opacity="0.89"/><circle cx="1842.8" cy="1129.3" r="0.8" fill="#fff" opacity="0.35"/><circle cx="634.1" cy="674.5" r="0.8" fill="#fff" opacity="0.61"/><circle cx="392.8" cy="163.6" r="0.9" fill="#fff" opacity="0.68"/><circle cx="1493.7" cy="1080.4" r="0.9" fill="#fff" opacity="0.35"/><circle cx="379.8" cy="1102.9" r="0.8" fill="#fff" opacity="0.32"/><circle cx="576.5" cy="1115.4" r="0.8" fill="#fff" opacity="0.40"/><circle cx="807.3" cy="260.1" r="0.7" fill="#fff" opacity="0.55"/><circle cx="226.9" cy="966.3" r="0.7" fill="#fff" opacity="0.79"/><circle cx="1904.9" cy="787.7" r="0.7" fill="#fff" opacity="0.58"/><circle cx="168.1" cy="339.8" r="0.7" fill="#fff" opacity="0.71"/><circle cx="1363.4" cy="623.9" r="0.8" fill="#fff" opacity="0.46"/><circle cx="344.1" cy="961.2" r="0.7" fill="#fff" opacity="0.56"/><circle cx="1124.1" cy="856.9" r="0.9" fill="#fff" opacity="0.79"/><circle cx="1905.9" cy="54.3" r="1.0" fill="#fff" opacity="0.51"/><circle cx="519.2" cy="190.6" r="0.9" fill="#fff" opacity="0.89"/><circle cx="52.3" cy="85.3" r="1.0" fill="#fff" opacity="0.76"/><circle cx="309.4" cy="841.6" r="0.8" fill="#fff" opacity="0.63"/><circle cx="489.7" cy="183.5" r="0.8" fill="#fff" opacity="0.53"/><circle cx="1530.0" cy="164.5" r="0.9" fill="#fff" opacity="0.70"/><circle cx="1076.1" cy="488.7" r="0.7" fill="#fff" opacity="0.81"/><circle cx="269.7" cy="1066.4" r="0.7" fill="#fff" opacity="0.29"/><circle cx="463.6" cy="128.2" r="1.0" fill="#fff" opacity="0.74"/><circle cx="914.6" cy="70.8" r="0.7" fill="#fff" opacity="0.68"/><circle cx="1773.4" cy="704.1" r="0.8" fill="#fff" opacity="0.55"/><circle cx="1486.0" cy="873.6" r="0.9" fill="#fff" opacity="0.77"/><circle cx="592.4" cy="600.7" r="1.0" fill="#fff" opacity="0.57"/><circle cx="586.3" cy="389.2" r="0.7" fill="#fff" opacity="0.80"/><circle cx="318.7" cy="75.1" r="0.7" fill="#fff" opacity="0.94"/><circle cx="1425.0" cy="945.9" r="0.7" fill="#fff" opacity="0.59"/><circle cx="91.7" cy="610.5" r="0.8" fill="#fff" opacity="0.71"/><circle cx="1285.6" cy="511.9" r="1.0" fill="#fff" opacity="0.50"/><circle cx="6.9" cy="274.8" r="1.0" fill="#fff" opacity="0.50"/><circle cx="1029.4" cy="347.9" r="0.9" fill="#fff" opacity="0.62"/><circle cx="1287.7" cy="274.6" r="1.0" fill="#fff" opacity="0.66"/><circle cx="132.7" cy="119.5" r="0.7" fill="#fff" opacity="0.72"/><circle cx="1766.3" cy="136.5" r="1.0" fill="#fff" opacity="0.58"/><circle cx="1775.8" cy="657.6" r="1.0" fill="#fff" opacity="0.60"/><circle cx="1563.9" cy="557.2" r="0.8" fill="#fff" opacity="0.48"/><circle cx="1267.2" cy="52.3" r="0.8" fill="#fff" opacity="0.74"/><circle cx="86.8" cy="829.4" r="0.7" fill="#fff" opacity="0.51"/><circle cx="103.2" cy="680.5" r="0.9" fill="#fff" opacity="0.62"/><circle cx="704.1" cy="826.0" r="0.9" fill="#fff" opacity="0.53"/><circle cx="344.9" cy="172.7" r="1.0" fill="#fff" opacity="0.88"/><circle cx="298.3" cy="1005.9" r="0.7" fill="#fff" opacity="0.25"/><circle cx="1289.3" cy="28.1" r="0.7" fill="#fff" opacity="0.89"/><circle cx="587.6" cy="688.5" r="1.0" fill="#fff" opacity="0.93"/><circle cx="1819.9" cy="661.1" r="0.8" fill="#fff" opacity="0.61"/><circle cx="1396.7" cy="166.3" r="0.9" fill="#fff" opacity="0.71"/><circle cx="427.3" cy="336.4" r="0.8" fill="#fff" opacity="0.70"/><circle cx="1275.2" cy="232.8" r="0.9" fill="#fff" opacity="0.59"/><circle cx="1351.1" cy="903.4" r="1.0" fill="#fff" opacity="0.57"/><circle cx="980.8" cy="446.4" r="0.9" fill="#fff" opacity="0.60"/><circle cx="61.1" cy="313.2" r="0.9" fill="#fff" opacity="0.82"/><circle cx="867.9" cy="427.0" r="0.9" fill="#fff" opacity="0.68"/><circle cx="691.9" cy="760.6" r="0.8" fill="#fff" opacity="0.94"/><circle cx="1411.3" cy="312.0" r="0.9" fill="#fff" opacity="0.80"/><circle cx="116.9" cy="430.1" r="0.7" fill="#fff" opacity="0.67"/><circle cx="1708.7" cy="1001.7" r="0.9" fill="#fff" opacity="0.43"/><circle cx="646.9" cy="146.2" r="0.8" fill="#fff" opacity="0.69"/><circle cx="518.1" cy="572.6" r="0.8" fill="#fff" opacity="0.90"/><circle cx="1665.9" cy="518.6" r="1.0" fill="#fff" opacity="0.53"/><circle cx="1231.5" cy="826.6" r="0.9" fill="#fff" opacity="0.59"/><circle cx="1637.2" cy="397.3" r="0.8" fill="#fff" opacity="0.90"/><circle cx="369.2" cy="894.1" r="0.9" fill="#fff" opacity="0.70"/><circle cx="521.5" cy="598.8" r="0.9" fill="#fff" opacity="0.94"/><circle cx="356.8" cy="904.6" r="0.9" fill="#fff" opacity="0.51"/><circle cx="243.3" cy="63.5" r="0.8" fill="#fff" opacity="0.55"/><circle cx="1099.6" cy="284.9" r="0.7" fill="#fff" opacity="0.55"/><circle cx="1745.8" cy="286.7" r="0.9" fill="#fff" opacity="0.51"/><circle cx="990.8" cy="981.6" r="0.7" fill="#fff" opacity="0.71"/><circle cx="408.6" cy="374.6" r="1.3" fill="#fff" opacity="0.80"/><circle cx="438.2" cy="397.8" r="1.0" fill="#fff" opacity="0.57"/><circle cx="467.7" cy="685.2" r="1.0" fill="#fff" opacity="0.77"/><circle cx="1056.2" cy="366.0" r="1.0" fill="#fff" opacity="0.84"/><circle cx="1895.1" cy="85.2" r="1.0" fill="#fff" opacity="0.68"/><circle cx="336.4" cy="698.7" r="1.0" fill="#fff" opacity="0.72"/><circle cx="1535.3" cy="141.8" r="0.9" fill="#fff" opacity="0.83"/><circle cx="1802.6" cy="1012.6" r="0.9" fill="#fff" opacity="0.34"/><circle cx="4.1" cy="129.3" r="1.3" fill="#fff" opacity="0.80"/><circle cx="787.9" cy="537.0" r="0.9" fill="#fff" opacity="0.71"/><circle cx="324.9" cy="598.9" r="1.0" fill="#fff" opacity="0.51"/><circle cx="1038.8" cy="272.3" r="1.0" fill="#fff" opacity="0.63"/><circle cx="1180.5" cy="658.3" r="0.9" fill="#fff" opacity="0.83"/><circle cx="1375.9" cy="973.6" r="0.9" fill="#fff" opacity="0.78"/><circle cx="628.9" cy="393.8" r="0.7" fill="#fff" opacity="0.62"/><circle cx="1837.2" cy="430.3" r="1.0" fill="#fff" opacity="0.45"/><circle cx="379.6" cy="622.5" r="0.9" fill="#fff" opacity="0.65"/><circle cx="1516.7" cy="538.9" r="0.9" fill="#fff" opacity="0.86"/><circle cx="723.2" cy="1023.2" r="0.9" fill="#fff" opacity="0.40"/><circle cx="954.3" cy="555.9" r="0.8" fill="#fff" opacity="0.72"/><circle cx="335.0" cy="233.7" r="0.8" fill="#fff" opacity="0.80"/><circle cx="1264.6" cy="1003.2" r="0.9" fill="#fff" opacity="0.36"/><circle cx="928.1" cy="718.3" r="0.8" fill="#fff" opacity="0.59"/><circle cx="386.2" cy="1120.2" r="0.8" fill="#fff" opacity="0.39"/><circle cx="613.9" cy="166.2" r="0.9" fill="#fff" opacity="0.70"/><circle cx="315.2" cy="90.9" r="0.7" fill="#fff" opacity="0.49"/><circle cx="1136.5" cy="799.7" r="0.8" fill="#fff" opacity="0.58"/><circle cx="340.2" cy="956.2" r="0.7" fill="#fff" opacity="0.46"/><circle cx="844.9" cy="958.8" r="1.0" fill="#fff" opacity="0.72"/><circle cx="389.8" cy="1035.8" r="0.9" fill="#fff" opacity="0.38"/><circle cx="715.6" cy="1048.2" r="0.7" fill="#fff" opacity="0.38"/><circle cx="306.6" cy="353.4" r="0.9" fill="#fff" opacity="0.60"/><circle cx="167.8" cy="254.7" r="1.0" fill="#fff" opacity="0.75"/><circle cx="1061.9" cy="30.2" r="0.7" fill="#fff" opacity="0.82"/><circle cx="175.7" cy="1065.6" r="1.0" fill="#fff" opacity="0.38"/><circle cx="275.5" cy="811.4" r="1.0" fill="#fff" opacity="0.64"/><circle cx="1592.7" cy="1081.8" r="0.8" fill="#fff" opacity="0.30"/><circle cx="1596.0" cy="303.0" r="0.9" fill="#fff" opacity="0.65"/><circle cx="417.2" cy="1098.3" r="0.9" fill="#fff" opacity="0.34"/><circle cx="930.7" cy="726.8" r="0.9" fill="#fff" opacity="0.65"/><circle cx="952.8" cy="1051.2" r="1.0" fill="#fff" opacity="0.26"/><circle cx="816.1" cy="231.8" r="0.8" fill="#fff" opacity="0.84"/><circle cx="1387.2" cy="421.8" r="0.7" fill="#fff" opacity="0.58"/><circle cx="232.7" cy="341.4" r="0.8" fill="#fff" opacity="0.61"/><circle cx="1674.9" cy="364.8" r="0.8" fill="#fff" opacity="0.73"/><circle cx="1202.0" cy="165.3" r="0.8" fill="#fff" opacity="0.60"/><circle cx="1509.8" cy="787.6" r="1.0" fill="#fff" opacity="0.67"/><circle cx="1829.4" cy="236.9" r="0.7" fill="#fff" opacity="0.53"/><circle cx="1722.0" cy="381.8" r="1.0" fill="#fff" opacity="0.64"/><circle cx="351.3" cy="674.2" r="0.8" fill="#fff" opacity="0.53"/><circle cx="370.8" cy="751.2" r="1.3" fill="#fff" opacity="0.80"/><circle cx="1785.5" cy="248.3" r="0.7" fill="#fff" opacity="0.89"/><circle cx="195.7" cy="514.2" r="0.9" fill="#fff" opacity="0.77"/><circle cx="1803.8" cy="217.6" r="0.9" fill="#fff" opacity="0.64"/><circle cx="125.3" cy="748.4" r="0.9" fill="#fff" opacity="0.53"/><circle cx="1407.5" cy="137.8" r="0.7" fill="#fff" opacity="0.55"/><circle cx="490.9" cy="962.5" r="0.9" fill="#fff" opacity="0.69"/><circle cx="576.2" cy="543.7" r="0.9" fill="#fff" opacity="0.57"/><circle cx="794.0" cy="873.4" r="0.7" fill="#fff" opacity="0.51"/><circle cx="868.3" cy="576.1" r="0.7" fill="#fff" opacity="0.95"/><circle cx="70.4" cy="876.3" r="1.0" fill="#fff" opacity="0.78"/><circle cx="429.6" cy="494.6" r="1.0" fill="#fff" opacity="0.79"/><circle cx="1019.2" cy="877.1" r="0.9" fill="#fff" opacity="0.54"/><circle cx="1711.3" cy="483.1" r="0.7" fill="#fff" opacity="0.73"/><circle cx="1103.7" cy="300.0" r="0.7" fill="#fff" opacity="0.49"/><circle cx="1690.8" cy="1125.5" r="0.7" fill="#fff" opacity="0.29"/><circle cx="303.0" cy="240.9" r="0.8" fill="#fff" opacity="0.89"/><circle cx="1220.3" cy="1075.1" r="0.8" fill="#fff" opacity="0.39"/><circle cx="1263.0" cy="48.7" r="1.0" fill="#fff" opacity="0.81"/><circle cx="444.5" cy="100.4" r="0.7" fill="#fff" opacity="0.79"/><circle cx="1518.1" cy="368.2" r="0.8" fill="#fff" opacity="0.51"/><circle cx="130.8" cy="1078.2" r="0.7" fill="#fff" opacity="0.42"/><circle cx="1353.2" cy="717.8" r="1.0" fill="#fff" opacity="0.90"/><circle cx="890.8" cy="572.5" r="1.0" fill="#fff" opacity="0.64"/><circle cx="437.9" cy="1114.9" r="0.9" fill="#fff" opacity="0.35"/><circle cx="727.1" cy="608.5" r="0.9" fill="#fff" opacity="0.87"/><circle cx="1251.2" cy="319.6" r="0.8" fill="#fff" opacity="0.53"/><circle cx="1170.3" cy="430.9" r="0.8" fill="#fff" opacity="0.66"/><circle cx="1723.0" cy="292.0" r="0.7" fill="#fff" opacity="0.66"/><circle cx="853.1" cy="1055.0" r="0.9" fill="#fff" opacity="0.45"/><circle cx="1464.7" cy="139.2" r="0.7" fill="#fff" opacity="0.65"/><circle cx="1570.3" cy="936.7" r="0.9" fill="#fff" opacity="0.51"/><circle cx="30.3" cy="194.2" r="0.8" fill="#fff" opacity="0.77"/><circle cx="1061.3" cy="704.5" r="0.7" fill="#fff" opacity="0.52"/><circle cx="800.4" cy="307.6" r="0.8" fill="#fff" opacity="0.61"/><circle cx="1081.5" cy="1123.5" r="1.0" fill="#fff" opacity="0.30"/><circle cx="214.8" cy="505.8" r="0.8" fill="#fff" opacity="0.74"/><circle cx="533.4" cy="583.5" r="0.8" fill="#fff" opacity="0.74"/><circle cx="876.2" cy="390.3" r="0.9" fill="#fff" opacity="0.77"/><circle cx="180.7" cy="605.4" r="0.9" fill="#fff" opacity="0.56"/><circle cx="976.9" cy="591.4" r="0.9" fill="#fff" opacity="0.64"/><circle cx="1713.8" cy="332.3" r="0.8" fill="#fff" opacity="0.95"/><circle cx="493.8" cy="940.9" r="0.8" fill="#fff" opacity="0.52"/><circle cx="245.8" cy="936.0" r="0.7" fill="#fff" opacity="0.49"/><circle cx="336.9" cy="315.8" r="0.8" fill="#fff" opacity="0.65"/><circle cx="1249.3" cy="362.2" r="0.7" fill="#fff" opacity="0.54"/><circle cx="1015.1" cy="496.5" r="0.8" fill="#fff" opacity="0.93"/><circle cx="1315.5" cy="244.3" r="0.9" fill="#fff" opacity="0.65"/><circle cx="989.6" cy="235.6" r="0.8" fill="#fff" opacity="0.93"/><circle cx="1905.7" cy="548.2" r="0.7" fill="#fff" opacity="0.57"/><circle cx="1372.7" cy="1080.8" r="0.9" fill="#fff" opacity="0.44"/><circle cx="1511.9" cy="559.2" r="0.9" fill="#fff" opacity="0.75"/><circle cx="1709.3" cy="231.1" r="0.8" fill="#fff" opacity="0.54"/><circle cx="1090.5" cy="262.7" r="0.9" fill="#fff" opacity="0.88"/><circle cx="275.6" cy="644.3" r="0.9" fill="#fff" opacity="0.94"/><circle cx="157.7" cy="255.9" r="0.7" fill="#fff" opacity="0.92"/><circle cx="895.4" cy="520.1" r="1.0" fill="#fff" opacity="0.84"/><circle cx="1815.2" cy="478.0" r="0.8" fill="#fff" opacity="0.46"/><circle cx="1362.8" cy="679.3" r="0.7" fill="#fff" opacity="0.57"/><circle cx="1862.6" cy="443.1" r="0.7" fill="#fff" opacity="0.89"/><circle cx="1628.4" cy="47.7" r="1.0" fill="#fff" opacity="0.72"/><circle cx="296.4" cy="631.8" r="0.9" fill="#fff" opacity="0.62"/><circle cx="172.8" cy="1131.7" r="0.9" fill="#fff" opacity="0.37"/><circle cx="1559.9" cy="662.2" r="0.9" fill="#fff" opacity="0.47"/><circle cx="973.1" cy="67.0" r="0.9" fill="#fff" opacity="0.80"/><circle cx="1239.7" cy="770.0" r="1.0" fill="#fff" opacity="0.84"/><circle cx="886.6" cy="879.4" r="0.9" fill="#fff" opacity="0.91"/><circle cx="336.5" cy="151.6" r="0.8" fill="#fff" opacity="0.55"/><circle cx="1281.5" cy="235.8" r="0.9" fill="#fff" opacity="0.95"/><circle cx="1522.8" cy="735.3" r="0.8" fill="#fff" opacity="0.86"/><circle cx="856.4" cy="99.7" r="0.7" fill="#fff" opacity="0.46"/><circle cx="791.2" cy="1098.6" r="1.0" fill="#fff" opacity="0.28"/><circle cx="96.1" cy="486.6" r="0.9" fill="#fff" opacity="0.60"/><circle cx="758.6" cy="750.9" r="0.7" fill="#fff" opacity="0.61"/><circle cx="1913.4" cy="252.1" r="0.9" fill="#fff" opacity="0.94"/><circle cx="1617.2" cy="984.7" r="1.0" fill="#fff" opacity="0.80"/><circle cx="1606.9" cy="683.7" r="0.9" fill="#fff" opacity="0.46"/><circle cx="502.4" cy="722.9" r="0.7" fill="#fff" opacity="0.70"/><circle cx="199.0" cy="134.3" r="0.7" fill="#fff" opacity="0.70"/><circle cx="968.9" cy="52.0" r="1.0" fill="#fff" opacity="0.89"/><circle cx="1456.3" cy="75.5" r="1.0" fill="#fff" opacity="0.78"/><circle cx="1766.5" cy="954.2" r="0.8" fill="#fff" opacity="0.63"/><circle cx="198.7" cy="731.9" r="0.7" fill="#fff" opacity="0.62"/><circle cx="1782.4" cy="662.1" r="0.7" fill="#fff" opacity="0.67"/><circle cx="1218.2" cy="677.4" r="0.8" fill="#fff" opacity="0.76"/><circle cx="1217.8" cy="624.6" r="1.3" fill="#fff" opacity="0.80"/><circle cx="615.1" cy="1010.8" r="0.7" fill="#fff" opacity="0.42"/><circle cx="1747.9" cy="209.5" r="0.9" fill="#fff" opacity="0.57"/><circle cx="434.7" cy="817.6" r="0.9" fill="#fff" opacity="0.76"/><circle cx="1546.3" cy="946.6" r="0.7" fill="#fff" opacity="0.57"/><circle cx="740.5" cy="413.7" r="1.0" fill="#fff" opacity="0.54"/><circle cx="1486.2" cy="1077.4" r="0.7" fill="#fff" opacity="0.36"/><circle cx="100.6" cy="161.6" r="0.7" fill="#fff" opacity="0.65"/><circle cx="1781.7" cy="96.3" r="0.9" fill="#fff" opacity="0.49"/><circle cx="1786.8" cy="634.1" r="0.7" fill="#fff" opacity="0.74"/><circle cx="1538.8" cy="595.2" r="0.8" fill="#fff" opacity="0.69"/><circle cx="231.8" cy="1023.1" r="0.8" fill="#fff" opacity="0.43"/><circle cx="1.9" cy="1000.6" r="0.9" fill="#fff" opacity="0.25"/><circle cx="1484.5" cy="737.6" r="0.9" fill="#fff" opacity="0.94"/><circle cx="355.5" cy="819.2" r="1.0" fill="#fff" opacity="0.79"/><circle cx="1088.4" cy="334.4" r="0.9" fill="#fff" opacity="0.75"/><circle cx="1180.1" cy="442.9" r="0.8" fill="#fff" opacity="0.57"/><circle cx="1292.5" cy="161.2" r="0.9" fill="#fff" opacity="0.83"/><circle cx="188.5" cy="341.3" r="1.0" fill="#fff" opacity="0.85"/><circle cx="850.0" cy="128.6" r="1.0" fill="#fff" opacity="0.89"/><circle cx="141.0" cy="871.7" r="0.7" fill="#fff" opacity="0.90"/><circle cx="241.3" cy="534.9" r="0.7" fill="#fff" opacity="0.89"/><circle cx="863.2" cy="59.0" r="0.9" fill="#fff" opacity="0.55"/><circle cx="836.4" cy="414.5" r="1.0" fill="#fff" opacity="0.72"/><circle cx="244.3" cy="457.6" r="0.9" fill="#fff" opacity="0.66"/><circle cx="225.1" cy="515.8" r="1.0" fill="#fff" opacity="0.59"/><circle cx="1225.9" cy="565.2" r="1.0" fill="#fff" opacity="0.76"/><circle cx="227.9" cy="94.5" r="1.0" fill="#fff" opacity="0.88"/><circle cx="496.6" cy="140.1" r="0.8" fill="#fff" opacity="0.71"/><circle cx="11.8" cy="1015.1" r="0.9" fill="#fff" opacity="0.32"/><circle cx="1222.2" cy="857.7" r="1.0" fill="#fff" opacity="0.78"/><circle cx="988.7" cy="348.0" r="1.0" fill="#fff" opacity="0.87"/><circle cx="1672.4" cy="896.4" r="1.0" fill="#fff" opacity="0.76"/><circle cx="332.7" cy="310.0" r="0.7" fill="#fff" opacity="0.66"/><circle cx="48.0" cy="978.7" r="1.0" fill="#fff" opacity="0.64"/><circle cx="410.2" cy="871.3" r="1.0" fill="#fff" opacity="0.95"/><circle cx="1340.0" cy="792.3" r="0.7" fill="#fff" opacity="0.49"/><circle cx="424.9" cy="446.5" r="1.0" fill="#fff" opacity="0.64"/><circle cx="1317.1" cy="535.6" r="1.0" fill="#fff" opacity="0.63"/><circle cx="132.1" cy="608.2" r="1.0" fill="#fff" opacity="0.83"/><circle cx="1269.4" cy="666.2" r="0.8" fill="#fff" opacity="0.57"/><circle cx="973.9" cy="1139.3" r="0.9" fill="#fff" opacity="0.29"/><circle cx="947.7" cy="526.5" r="1.0" fill="#fff" opacity="0.73"/><circle cx="103.1" cy="203.2" r="0.9" fill="#fff" opacity="0.60"/><circle cx="413.8" cy="585.2" r="0.9" fill="#fff" opacity="0.67"/><circle cx="1023.2" cy="71.9" r="0.7" fill="#fff" opacity="0.54"/><circle cx="177.4" cy="196.1" r="0.9" fill="#fff" opacity="0.63"/><circle cx="623.4" cy="506.0" r="0.7" fill="#fff" opacity="0.47"/><circle cx="65.6" cy="853.6" r="0.9" fill="#fff" opacity="0.64"/><circle cx="512.6" cy="550.7" r="0.8" fill="#fff" opacity="0.86"/><circle cx="1373.7" cy="415.4" r="0.8" fill="#fff" opacity="0.75"/><circle cx="754.0" cy="656.6" r="0.8" fill="#fff" opacity="0.60"/><circle cx="525.1" cy="289.9" r="0.7" fill="#fff" opacity="0.73"/><circle cx="1189.3" cy="383.1" r="0.7" fill="#fff" opacity="0.67"/><circle cx="1502.6" cy="833.4" r="0.9" fill="#fff" opacity="0.70"/><circle cx="423.2" cy="258.7" r="0.9" fill="#fff" opacity="0.73"/><circle cx="683.7" cy="808.5" r="1.0" fill="#fff" opacity="0.49"/><circle cx="1104.6" cy="871.1" r="1.0" fill="#fff" opacity="0.77"/><circle cx="955.9" cy="514.1" r="0.8" fill="#fff" opacity="0.69"/><circle cx="1480.7" cy="269.6" r="1.0" fill="#fff" opacity="0.84"/><circle cx="560.9" cy="799.0" r="0.8" fill="#fff" opacity="0.77"/><circle cx="1406.9" cy="777.2" r="0.8" fill="#fff" opacity="0.59"/><circle cx="352.9" cy="1046.2" r="0.9" fill="#fff" opacity="0.32"/><circle cx="569.8" cy="1054.8" r="0.8" fill="#fff" opacity="0.37"/><circle cx="1404.8" cy="155.5" r="0.8" fill="#fff" opacity="0.93"/><circle cx="1459.4" cy="489.6" r="1.0" fill="#fff" opacity="0.92"/><circle cx="1439.8" cy="807.2" r="0.9" fill="#fff" opacity="0.58"/><circle cx="1836.5" cy="38.8" r="0.9" fill="#fff" opacity="0.56"/><circle cx="1531.2" cy="320.1" r="0.9" fill="#fff" opacity="0.46"/><circle cx="593.2" cy="39.3" r="0.9" fill="#fff" opacity="0.52"/><circle cx="1224.8" cy="409.4" r="0.8" fill="#fff" opacity="0.66"/><circle cx="1775.1" cy="585.7" r="0.9" fill="#fff" opacity="0.71"/><circle cx="1390.2" cy="410.8" r="0.9" fill="#fff" opacity="0.73"/><circle cx="632.8" cy="175.0" r="0.9" fill="#fff" opacity="0.75"/><circle cx="1777.0" cy="1022.9" r="0.7" fill="#fff" opacity="0.27"/><circle cx="251.0" cy="790.5" r="1.0" fill="#fff" opacity="0.63"/><circle cx="1277.3" cy="240.6" r="0.8" fill="#fff" opacity="0.66"/><circle cx="360.3" cy="824.6" r="0.7" fill="#fff" opacity="0.49"/><circle cx="932.0" cy="601.8" r="0.8" fill="#fff" opacity="0.93"/><circle cx="992.4" cy="191.3" r="1.0" fill="#fff" opacity="0.51"/><circle cx="1468.6" cy="553.5" r="1.0" fill="#fff" opacity="0.62"/><circle cx="1838.5" cy="411.2" r="1.0" fill="#fff" opacity="0.90"/><circle cx="1047.9" cy="1083.8" r="0.7" fill="#fff" opacity="0.40"/><circle cx="1855.1" cy="276.5" r="0.7" fill="#fff" opacity="0.62"/><circle cx="365.7" cy="653.1" r="0.9" fill="#fff" opacity="0.63"/><circle cx="200.2" cy="633.0" r="0.9" fill="#fff" opacity="0.92"/><circle cx="1542.1" cy="555.0" r="0.9" fill="#fff" opacity="0.60"/><circle cx="48.4" cy="574.9" r="0.7" fill="#fff" opacity="0.55"/><circle cx="1116.7" cy="235.9" r="0.7" fill="#fff" opacity="0.93"/><circle cx="1351.9" cy="843.2" r="0.8" fill="#fff" opacity="0.46"/><circle cx="842.0" cy="694.0" r="0.9" fill="#fff" opacity="0.59"/><circle cx="1772.9" cy="328.6" r="0.7" fill="#fff" opacity="0.59"/><circle cx="397.9" cy="995.1" r="0.8" fill="#fff" opacity="0.52"/><circle cx="1276.4" cy="680.5" r="0.8" fill="#fff" opacity="0.69"/><circle cx="1724.1" cy="513.5" r="0.7" fill="#fff" opacity="0.70"/><circle cx="956.9" cy="682.1" r="0.7" fill="#fff" opacity="0.65"/><circle cx="1480.6" cy="221.0" r="1.0" fill="#fff" opacity="0.85"/><circle cx="1682.2" cy="496.9" r="0.9" fill="#fff" opacity="0.49"/><circle cx="1780.6" cy="433.8" r="0.7" fill="#fff" opacity="0.90"/><circle cx="984.2" cy="1137.5" r="0.8" fill="#fff" opacity="0.26"/><circle cx="444.2" cy="281.3" r="0.7" fill="#fff" opacity="0.66"/><circle cx="1768.0" cy="569.4" r="0.8" fill="#fff" opacity="0.83"/><circle cx="1399.9" cy="256.0" r="1.0" fill="#fff" opacity="0.84"/><circle cx="660.6" cy="952.1" r="0.9" fill="#fff" opacity="0.94"/><circle cx="403.5" cy="144.1" r="0.9" fill="#fff" opacity="0.77"/><circle cx="990.6" cy="657.1" r="0.7" fill="#fff" opacity="0.78"/><circle cx="948.3" cy="876.2" r="0.7" fill="#fff" opacity="0.51"/><circle cx="808.9" cy="510.7" r="0.9" fill="#fff" opacity="0.71"/><circle cx="501.6" cy="359.0" r="0.7" fill="#fff" opacity="0.67"/><circle cx="219.0" cy="582.2" r="0.8" fill="#fff" opacity="0.75"/><circle cx="459.2" cy="41.3" r="0.7" fill="#fff" opacity="0.92"/><circle cx="893.2" cy="388.6" r="0.7" fill="#fff" opacity="0.90"/><circle cx="1284.9" cy="528.8" r="1.0" fill="#fff" opacity="0.67"/><circle cx="357.5" cy="933.7" r="0.9" fill="#fff" opacity="0.51"/><circle cx="1891.6" cy="829.3" r="1.0" fill="#fff" opacity="0.91"/><circle cx="815.3" cy="266.9" r="1.0" fill="#fff" opacity="0.78"/><circle cx="1711.8" cy="1074.1" r="0.8" fill="#fff" opacity="0.25"/><circle cx="808.2" cy="305.0" r="0.7" fill="#fff" opacity="0.74"/><circle cx="417.3" cy="1029.9" r="0.7" fill="#fff" opacity="0.33"/><circle cx="349.0" cy="834.9" r="0.9" fill="#fff" opacity="0.93"/><circle cx="125.3" cy="1005.9" r="0.7" fill="#fff" opacity="0.25"/><circle cx="1196.7" cy="742.6" r="0.9" fill="#fff" opacity="0.87"/><circle cx="618.3" cy="255.1" r="0.9" fill="#fff" opacity="0.72"/><circle cx="1882.2" cy="325.2" r="0.9" fill="#fff" opacity="0.67"/><circle cx="562.9" cy="813.5" r="0.8" fill="#fff" opacity="0.90"/><circle cx="369.3" cy="172.3" r="0.8" fill="#fff" opacity="0.81"/><circle cx="1571.8" cy="367.4" r="1.0" fill="#fff" opacity="0.94"/><circle cx="701.0" cy="78.5" r="0.9" fill="#fff" opacity="0.54"/><circle cx="640.4" cy="256.9" r="0.9" fill="#fff" opacity="0.86"/><circle cx="1754.0" cy="1148.4" r="1.0" fill="#fff" opacity="0.35"/><circle cx="263.8" cy="749.1" r="0.9" fill="#fff" opacity="0.45"/><circle cx="831.6" cy="101.6" r="0.9" fill="#fff" opacity="0.50"/><circle cx="569.9" cy="586.3" r="0.8" fill="#fff" opacity="0.94"/><circle cx="1511.5" cy="786.5" r="0.7" fill="#fff" opacity="0.80"/><circle cx="1255.5" cy="151.8" r="0.7" fill="#fff" opacity="0.46"/><circle cx="1662.2" cy="112.0" r="1.0" fill="#fff" opacity="0.55"/><circle cx="1045.0" cy="932.2" r="1.0" fill="#fff" opacity="0.47"/><circle cx="491.7" cy="978.5" r="0.7" fill="#fff" opacity="0.65"/><circle cx="1502.1" cy="646.7" r="0.7" fill="#fff" opacity="0.82"/><circle cx="1636.2" cy="705.6" r="0.9" fill="#fff" opacity="0.59"/><circle cx="166.5" cy="1132.9" r="0.7" fill="#fff" opacity="0.25"/><circle cx="1102.8" cy="760.7" r="0.9" fill="#fff" opacity="0.92"/><circle cx="316.0" cy="732.8" r="0.9" fill="#fff" opacity="0.54"/><circle cx="212.8" cy="220.0" r="0.8" fill="#fff" opacity="0.63"/><circle cx="260.8" cy="1094.7" r="1.0" fill="#fff" opacity="0.45"/><circle cx="80.5" cy="959.5" r="0.7" fill="#fff" opacity="0.78"/><circle cx="49.3" cy="91.6" r="0.8" fill="#fff" opacity="0.51"/><circle cx="1634.1" cy="799.9" r="0.7" fill="#fff" opacity="0.70"/><circle cx="1712.6" cy="754.5" r="0.9" fill="#fff" opacity="0.61"/><circle cx="316.2" cy="477.2" r="0.8" fill="#fff" opacity="0.60"/><circle cx="622.2" cy="294.4" r="0.9" fill="#fff" opacity="0.85"/><circle cx="633.2" cy="1074.9" r="0.7" fill="#fff" opacity="0.42"/><circle cx="1512.1" cy="668.7" r="0.7" fill="#fff" opacity="0.73"/><circle cx="291.7" cy="393.7" r="1.0" fill="#fff" opacity="0.46"/><circle cx="345.8" cy="1079.2" r="1.0" fill="#fff" opacity="0.42"/><circle cx="609.2" cy="187.8" r="0.9" fill="#fff" opacity="0.80"/><circle cx="659.1" cy="197.0" r="1.0" fill="#fff" opacity="0.68"/><circle cx="652.3" cy="385.7" r="0.7" fill="#fff" opacity="0.82"/><circle cx="678.2" cy="804.8" r="1.0" fill="#fff" opacity="0.79"/><circle cx="1063.5" cy="689.2" r="1.0" fill="#fff" opacity="0.59"/><circle cx="1537.7" cy="367.6" r="0.7" fill="#fff" opacity="0.80"/><circle cx="826.7" cy="69.3" r="0.9" fill="#fff" opacity="0.73"/><circle cx="787.7" cy="651.5" r="0.7" fill="#fff" opacity="0.52"/><circle cx="1305.6" cy="1097.9" r="1.0" fill="#fff" opacity="0.39"/><circle cx="1329.8" cy="1071.9" r="0.7" fill="#fff" opacity="0.28"/><circle cx="1447.8" cy="1069.3" r="1.0" fill="#fff" opacity="0.36"/><circle cx="300.0" cy="617.9" r="1.0" fill="#fff" opacity="0.93"/><circle cx="9.0" cy="966.0" r="0.8" fill="#fff" opacity="0.79"/><circle cx="1405.1" cy="572.1" r="0.7" fill="#fff" opacity="0.63"/><circle cx="1314.5" cy="531.4" r="1.3" fill="#fff" opacity="0.80"/><circle cx="1722.7" cy="828.1" r="1.0" fill="#fff" opacity="0.73"/><circle cx="17.2" cy="562.3" r="1.0" fill="#fff" opacity="0.64"/><circle cx="1245.4" cy="75.0" r="0.7" fill="#fff" opacity="0.68"/><circle cx="768.4" cy="286.0" r="1.0" fill="#fff" opacity="0.77"/><circle cx="1035.0" cy="975.4" r="1.0" fill="#fff" opacity="0.74"/><circle cx="1035.6" cy="571.7" r="0.8" fill="#fff" opacity="0.86"/><circle cx="237.4" cy="413.1" r="0.8" fill="#fff" opacity="0.72"/><circle cx="1279.0" cy="258.9" r="0.8" fill="#fff" opacity="0.56"/><circle cx="44.9" cy="332.2" r="0.7" fill="#fff" opacity="0.46"/><circle cx="1765.5" cy="911.1" r="1.0" fill="#fff" opacity="0.75"/><circle cx="1410.8" cy="800.0" r="0.8" fill="#fff" opacity="0.69"/><circle cx="549.0" cy="69.1" r="1.0" fill="#fff" opacity="0.92"/><circle cx="1221.7" cy="594.8" r="0.7" fill="#fff" opacity="0.88"/><circle cx="937.6" cy="221.9" r="0.9" fill="#fff" opacity="0.63"/><circle cx="1156.3" cy="394.2" r="0.9" fill="#fff" opacity="0.91"/><circle cx="1443.0" cy="1089.0" r="0.9" fill="#fff" opacity="0.31"/><circle cx="1566.6" cy="184.1" r="0.7" fill="#fff" opacity="0.74"/><circle cx="121.0" cy="635.3" r="0.9" fill="#fff" opacity="0.94"/><circle cx="199.5" cy="444.3" r="1.0" fill="#fff" opacity="0.72"/><circle cx="486.7" cy="52.8" r="0.9" fill="#fff" opacity="0.80"/><circle cx="139.9" cy="649.8" r="1.0" fill="#fff" opacity="0.89"/><circle cx="1576.3" cy="44.7" r="1.0" fill="#fff" opacity="0.46"/><circle cx="31.3" cy="79.6" r="0.7" fill="#fff" opacity="0.57"/><circle cx="1252.8" cy="131.0" r="0.9" fill="#fff" opacity="0.49"/><circle cx="668.9" cy="185.7" r="0.7" fill="#fff" opacity="0.82"/><circle cx="1628.5" cy="530.0" r="0.8" fill="#fff" opacity="0.93"/><circle cx="1022.5" cy="333.6" r="0.9" fill="#fff" opacity="0.94"/><circle cx="1286.0" cy="973.1" r="1.0" fill="#fff" opacity="0.76"/><circle cx="1572.6" cy="119.6" r="0.7" fill="#fff" opacity="0.72"/><circle cx="110.3" cy="922.5" r="1.0" fill="#fff" opacity="0.62"/><circle cx="1625.6" cy="357.2" r="0.8" fill="#fff" opacity="0.45"/><circle cx="1369.4" cy="172.5" r="0.9" fill="#fff" opacity="0.67"/><circle cx="1304.4" cy="830.1" r="0.7" fill="#fff" opacity="0.94"/><circle cx="1624.8" cy="384.3" r="0.7" fill="#fff" opacity="0.67"/><circle cx="1128.9" cy="1128.2" r="0.8" fill="#fff" opacity="0.46"/><circle cx="440.7" cy="283.2" r="0.7" fill="#fff" opacity="0.67"/><circle cx="622.7" cy="379.7" r="1.0" fill="#fff" opacity="0.92"/><circle cx="904.3" cy="201.3" r="1.0" fill="#fff" opacity="0.85"/><circle cx="195.0" cy="730.2" r="1.0" fill="#fff" opacity="0.73"/><circle cx="140.7" cy="294.7" r="0.9" fill="#fff" opacity="0.88"/><circle cx="1298.1" cy="488.2" r="1.0" fill="#fff" opacity="0.64"/><circle cx="1660.6" cy="582.6" r="1.0" fill="#fff" opacity="0.59"/><circle cx="1151.9" cy="1034.5" r="0.8" fill="#fff" opacity="0.31"/><circle cx="1210.5" cy="855.5" r="0.8" fill="#fff" opacity="0.67"/><circle cx="1648.1" cy="591.0" r="1.0" fill="#fff" opacity="0.67"/><circle cx="1663.8" cy="253.0" r="0.9" fill="#fff" opacity="0.87"/><circle cx="136.5" cy="156.7" r="0.8" fill="#fff" opacity="0.82"/><circle cx="1785.3" cy="778.0" r="0.7" fill="#fff" opacity="0.65"/><circle cx="1000.9" cy="235.6" r="0.8" fill="#fff" opacity="0.55"/><circle cx="794.1" cy="1104.9" r="0.9" fill="#fff" opacity="0.39"/><circle cx="1789.4" cy="251.3" r="0.7" fill="#fff" opacity="0.92"/><circle cx="1428.9" cy="976.0" r="0.7" fill="#fff" opacity="0.47"/><circle cx="1170.4" cy="934.7" r="0.7" fill="#fff" opacity="0.46"/><circle cx="1870.1" cy="964.9" r="1.0" fill="#fff" opacity="0.63"/><circle cx="31.8" cy="738.8" r="1.0" fill="#fff" opacity="0.52"/><circle cx="1595.3" cy="781.8" r="1.0" fill="#fff" opacity="0.61"/><circle cx="1768.0" cy="623.1" r="0.7" fill="#fff" opacity="0.59"/><circle cx="34.6" cy="892.0" r="0.7" fill="#fff" opacity="0.90"/><circle cx="8.1" cy="494.1" r="0.7" fill="#fff" opacity="0.84"/><circle cx="1607.6" cy="126.8" r="0.7" fill="#fff" opacity="0.58"/><circle cx="1684.9" cy="622.3" r="0.8" fill="#fff" opacity="0.65"/><circle cx="1317.6" cy="708.2" r="1.0" fill="#fff" opacity="0.80"/><circle cx="1090.4" cy="210.2" r="0.7" fill="#fff" opacity="0.49"/><circle cx="434.4" cy="389.5" r="0.9" fill="#fff" opacity="0.65"/><circle cx="663.9" cy="773.1" r="1.0" fill="#fff" opacity="0.55"/><circle cx="13.6" cy="252.0" r="1.0" fill="#fff" opacity="0.55"/><circle cx="1797.7" cy="285.5" r="0.7" fill="#fff" opacity="0.87"/><circle cx="1100.6" cy="483.5" r="1.0" fill="#fff" opacity="0.49"/><circle cx="597.7" cy="162.9" r="0.7" fill="#fff" opacity="0.88"/><circle cx="1332.1" cy="60.1" r="0.7" fill="#fff" opacity="0.81"/><circle cx="1188.9" cy="280.1" r="1.0" fill="#fff" opacity="0.65"/><circle cx="285.2" cy="997.8" r="1.0" fill="#fff" opacity="0.92"/><circle cx="507.2" cy="597.5" r="0.7" fill="#fff" opacity="0.88"/><circle cx="436.7" cy="363.6" r="0.9" fill="#fff" opacity="0.77"/><circle cx="1041.0" cy="846.4" r="0.7" fill="#fff" opacity="0.51"/><circle cx="1263.4" cy="171.6" r="0.7" fill="#fff" opacity="0.53"/><circle cx="1041.0" cy="435.7" r="0.8" fill="#fff" opacity="0.69"/><circle cx="1316.4" cy="988.2" r="0.8" fill="#fff" opacity="0.66"/><circle cx="622.2" cy="45.6" r="0.9" fill="#fff" opacity="0.82"/><circle cx="5.4" cy="286.7" r="1.0" fill="#fff" opacity="0.68"/><circle cx="1574.3" cy="1027.8" r="0.7" fill="#fff" opacity="0.46"/><circle cx="1897.7" cy="29.9" r="0.8" fill="#fff" opacity="0.76"/><circle cx="1206.6" cy="722.4" r="1.0" fill="#fff" opacity="0.72"/><circle cx="375.7" cy="670.2" r="0.9" fill="#fff" opacity="0.49"/><circle cx="329.9" cy="413.9" r="0.8" fill="#fff" opacity="0.73"/><circle cx="1791.3" cy="1125.0" r="0.9" fill="#fff" opacity="0.46"/><circle cx="1102.4" cy="782.2" r="0.8" fill="#fff" opacity="0.58"/><circle cx="815.5" cy="621.1" r="0.8" fill="#fff" opacity="0.52"/><circle cx="1229.3" cy="741.4" r="0.8" fill="#fff" opacity="0.70"/><circle cx="397.1" cy="232.2" r="1.0" fill="#fff" opacity="0.49"/><circle cx="1702.0" cy="762.8" r="0.7" fill="#fff" opacity="0.94"/><circle cx="1784.1" cy="44.1" r="0.7" fill="#fff" opacity="0.74"/><circle cx="1449.3" cy="142.3" r="0.9" fill="#fff" opacity="0.57"/><circle cx="1016.9" cy="406.9" r="1.0" fill="#fff" opacity="0.73"/><circle cx="1915.1" cy="804.5" r="0.8" fill="#fff" opacity="0.83"/><circle cx="1376.4" cy="742.6" r="0.7" fill="#fff" opacity="0.94"/><circle cx="415.5" cy="664.1" r="1.0" fill="#fff" opacity="0.90"/><circle cx="901.2" cy="852.4" r="0.7" fill="#fff" opacity="0.69"/><circle cx="1356.8" cy="840.2" r="1.0" fill="#fff" opacity="0.85"/><circle cx="1284.8" cy="581.9" r="0.7" fill="#fff" opacity="0.67"/><circle cx="49.7" cy="553.4" r="0.9" fill="#fff" opacity="0.60"/><circle cx="143.9" cy="1016.9" r="1.0" fill="#fff" opacity="0.34"/><circle cx="960.2" cy="620.9" r="1.0" fill="#fff" opacity="0.76"/><circle cx="1201.9" cy="120.9" r="0.9" fill="#fff" opacity="0.59"/><circle cx="613.3" cy="860.0" r="1.0" fill="#fff" opacity="0.75"/><circle cx="286.4" cy="1111.8" r="0.9" fill="#fff" opacity="0.28"/><circle cx="250.9" cy="659.3" r="0.7" fill="#fff" opacity="0.77"/><circle cx="1590.2" cy="400.5" r="0.7" fill="#fff" opacity="0.81"/><circle cx="1919.7" cy="659.7" r="0.9" fill="#fff" opacity="0.64"/><circle cx="544.6" cy="1057.9" r="0.9" fill="#fff" opacity="0.28"/><circle cx="446.5" cy="569.5" r="0.8" fill="#fff" opacity="0.69"/><circle cx="221.9" cy="260.9" r="0.7" fill="#fff" opacity="0.95"/><circle cx="1324.8" cy="311.9" r="0.7" fill="#fff" opacity="0.51"/><circle cx="685.4" cy="940.8" r="1.0" fill="#fff" opacity="0.49"/><circle cx="707.5" cy="983.3" r="1.0" fill="#fff" opacity="0.51"/><circle cx="1340.6" cy="250.8" r="1.0" fill="#fff" opacity="0.88"/><circle cx="922.2" cy="551.6" r="0.7" fill="#fff" opacity="0.65"/><circle cx="1395.0" cy="288.0" r="0.9" fill="#fff" opacity="0.88"/><circle cx="1141.6" cy="80.7" r="0.8" fill="#fff" opacity="0.91"/><circle cx="1183.1" cy="1053.8" r="1.3" fill="#fff" opacity="0.80"/><circle cx="402.2" cy="910.2" r="0.9" fill="#fff" opacity="0.60"/><circle cx="1802.9" cy="1062.6" r="1.0" fill="#fff" opacity="0.24"/><circle cx="863.9" cy="313.0" r="0.7" fill="#fff" opacity="0.52"/><circle cx="1857.6" cy="1024.7" r="1.0" fill="#fff" opacity="0.27"/><circle cx="621.8" cy="450.5" r="0.8" fill="#fff" opacity="0.54"/><circle cx="1890.6" cy="37.2" r="1.0" fill="#fff" opacity="0.50"/><circle cx="813.2" cy="1066.0" r="0.8" fill="#fff" opacity="0.41"/><circle cx="451.8" cy="388.3" r="0.7" fill="#fff" opacity="0.84"/><circle cx="1000.1" cy="134.2" r="0.7" fill="#fff" opacity="0.86"/><circle cx="976.4" cy="557.5" r="1.0" fill="#fff" opacity="0.87"/><circle cx="629.0" cy="120.8" r="1.0" fill="#fff" opacity="0.50"/><circle cx="505.8" cy="740.8" r="0.7" fill="#fff" opacity="0.93"/><circle cx="238.8" cy="915.7" r="1.0" fill="#fff" opacity="0.93"/><circle cx="938.8" cy="265.4" r="0.8" fill="#fff" opacity="0.45"/><circle cx="1475.1" cy="801.2" r="0.7" fill="#fff" opacity="0.49"/><circle cx="1101.7" cy="259.8" r="0.7" fill="#fff" opacity="0.50"/><circle cx="459.0" cy="1129.1" r="0.7" fill="#fff" opacity="0.27"/><circle cx="809.0" cy="595.0" r="0.7" fill="#fff" opacity="0.51"/><circle cx="1253.9" cy="113.5" r="0.7" fill="#fff" opacity="0.59"/><circle cx="727.1" cy="473.2" r="1.0" fill="#fff" opacity="0.93"/><circle cx="458.2" cy="660.7" r="0.7" fill="#fff" opacity="0.63"/><circle cx="1108.6" cy="1135.6" r="1.0" fill="#fff" opacity="0.27"/><circle cx="616.9" cy="557.0" r="0.8" fill="#fff" opacity="0.46"/><circle cx="603.1" cy="698.5" r="1.0" fill="#fff" opacity="0.91"/><circle cx="219.7" cy="171.2" r="0.7" fill="#fff" opacity="0.72"/><circle cx="1469.0" cy="586.5" r="0.9" fill="#fff" opacity="0.61"/><circle cx="578.0" cy="789.1" r="0.9" fill="#fff" opacity="0.57"/><circle cx="1212.7" cy="51.9" r="0.9" fill="#fff" opacity="0.62"/><circle cx="1311.2" cy="204.4" r="0.9" fill="#fff" opacity="0.56"/><circle cx="883.4" cy="909.0" r="0.7" fill="#fff" opacity="0.56"/><circle cx="60.4" cy="744.6" r="1.0" fill="#fff" opacity="0.91"/><circle cx="1763.3" cy="552.0" r="0.9" fill="#fff" opacity="0.59"/><circle cx="1798.7" cy="573.2" r="0.7" fill="#fff" opacity="0.61"/><circle cx="165.8" cy="45.9" r="1.0" fill="#fff" opacity="0.63"/><circle cx="307.7" cy="464.7" r="0.9" fill="#fff" opacity="0.80"/><circle cx="1252.7" cy="587.5" r="0.7" fill="#fff" opacity="0.64"/><circle cx="34.5" cy="189.2" r="0.9" fill="#fff" opacity="0.51"/><circle cx="1046.3" cy="209.2" r="0.7" fill="#fff" opacity="0.58"/><circle cx="791.2" cy="783.3" r="0.8" fill="#fff" opacity="0.88"/><circle cx="14.3" cy="95.6" r="1.0" fill="#fff" opacity="0.89"/><circle cx="1105.9" cy="228.6" r="0.9" fill="#fff" opacity="0.91"/><circle cx="1364.7" cy="1033.1" r="0.8" fill="#fff" opacity="0.45"/><circle cx="145.0" cy="1002.4" r="1.0" fill="#fff" opacity="0.46"/><circle cx="156.0" cy="816.8" r="0.8" fill="#fff" opacity="0.84"/><circle cx="1402.4" cy="185.1" r="0.9" fill="#fff" opacity="0.58"/><circle cx="426.3" cy="658.8" r="1.0" fill="#fff" opacity="0.60"/><circle cx="307.7" cy="357.7" r="0.9" fill="#fff" opacity="0.78"/><circle cx="521.2" cy="1118.0" r="0.9" fill="#fff" opacity="0.44"/><circle cx="204.0" cy="130.9" r="0.8" fill="#fff" opacity="0.88"/><circle cx="92.3" cy="816.0" r="1.0" fill="#fff" opacity="0.69"/><circle cx="1001.9" cy="230.1" r="1.0" fill="#fff" opacity="0.51"/><circle cx="1635.0" cy="663.8" r="1.0" fill="#fff" opacity="0.70"/><circle cx="1060.2" cy="49.1" r="0.9" fill="#fff" opacity="0.64"/><circle cx="977.0" cy="105.1" r="0.9" fill="#fff" opacity="0.53"/><circle cx="543.3" cy="930.1" r="0.8" fill="#fff" opacity="0.75"/><circle cx="513.4" cy="963.4" r="0.8" fill="#fff" opacity="0.58"/><circle cx="694.3" cy="110.7" r="0.9" fill="#fff" opacity="0.69"/><circle cx="1689.2" cy="102.6" r="0.9" fill="#fff" opacity="0.49"/><circle cx="118.4" cy="779.3" r="0.8" fill="#fff" opacity="0.85"/><circle cx="43.5" cy="727.0" r="0.9" fill="#fff" opacity="0.59"/><circle cx="200.3" cy="428.5" r="0.7" fill="#fff" opacity="0.72"/><circle cx="890.2" cy="297.3" r="0.9" fill="#fff" opacity="0.88"/><circle cx="1382.6" cy="700.8" r="0.8" fill="#fff" opacity="0.48"/><circle cx="1240.6" cy="461.9" r="1.0" fill="#fff" opacity="0.61"/><circle cx="1511.8" cy="434.9" r="0.9" fill="#fff" opacity="0.56"/><circle cx="1069.0" cy="844.5" r="0.7" fill="#fff" opacity="0.70"/><circle cx="1382.7" cy="587.4" r="0.7" fill="#fff" opacity="0.55"/><circle cx="118.1" cy="655.9" r="0.8" fill="#fff" opacity="0.52"/><circle cx="710.0" cy="1068.4" r="0.8" fill="#fff" opacity="0.46"/><circle cx="1051.3" cy="952.3" r="0.8" fill="#fff" opacity="0.88"/><circle cx="924.3" cy="860.4" r="0.8" fill="#fff" opacity="0.60"/><circle cx="113.5" cy="93.4" r="0.9" fill="#fff" opacity="0.81"/><circle cx="336.5" cy="1141.5" r="0.9" fill="#fff" opacity="0.44"/><circle cx="1210.5" cy="519.4" r="1.0" fill="#fff" opacity="0.86"/><circle cx="1255.4" cy="801.5" r="0.8" fill="#fff" opacity="0.55"/><circle cx="163.9" cy="481.4" r="0.7" fill="#fff" opacity="0.48"/><circle cx="264.0" cy="1019.7" r="0.7" fill="#fff" opacity="0.47"/><circle cx="1641.0" cy="589.8" r="0.7" fill="#fff" opacity="0.83"/><circle cx="803.1" cy="477.1" r="0.9" fill="#fff" opacity="0.48"/><circle cx="1351.2" cy="903.5" r="0.9" fill="#fff" opacity="0.55"/><circle cx="666.1" cy="955.4" r="0.8" fill="#fff" opacity="0.91"/><circle cx="831.3" cy="381.5" r="0.7" fill="#fff" opacity="0.59"/><circle cx="790.3" cy="821.4" r="0.9" fill="#fff" opacity="0.56"/><circle cx="679.7" cy="717.6" r="1.0" fill="#fff" opacity="0.66"/><circle cx="924.9" cy="417.3" r="0.8" fill="#fff" opacity="0.89"/><circle cx="448.9" cy="971.7" r="0.8" fill="#fff" opacity="0.87"/><circle cx="1345.2" cy="864.2" r="0.9" fill="#fff" opacity="0.49"/><circle cx="947.0" cy="999.8" r="1.0" fill="#fff" opacity="0.82"/><circle cx="913.2" cy="1074.7" r="0.7" fill="#fff" opacity="0.38"/><circle cx="1486.1" cy="997.1" r="0.9" fill="#fff" opacity="0.61"/><circle cx="1902.4" cy="47.5" r="0.8" fill="#fff" opacity="0.48"/><circle cx="456.5" cy="445.9" r="1.0" fill="#fff" opacity="0.92"/><circle cx="47.1" cy="169.9" r="0.9" fill="#fff" opacity="0.89"/><circle cx="1189.7" cy="515.3" r="1.0" fill="#fff" opacity="0.74"/><circle cx="947.1" cy="251.9" r="0.9" fill="#fff" opacity="0.89"/><circle cx="1682.2" cy="355.0" r="0.9" fill="#fff" opacity="0.47"/><circle cx="1600.3" cy="199.6" r="0.9" fill="#fff" opacity="0.48"/><circle cx="1793.2" cy="878.1" r="0.8" fill="#fff" opacity="0.64"/><circle cx="372.3" cy="78.7" r="0.8" fill="#fff" opacity="0.77"/><circle cx="157.7" cy="821.5" r="1.0" fill="#fff" opacity="0.63"/><circle cx="614.5" cy="1128.2" r="0.7" fill="#fff" opacity="0.33"/><circle cx="83.2" cy="1018.2" r="0.9" fill="#fff" opacity="0.24"/><circle cx="1483.7" cy="764.7" r="1.0" fill="#fff" opacity="0.92"/><circle cx="1281.1" cy="632.3" r="0.8" fill="#fff" opacity="0.82"/><circle cx="1084.8" cy="43.3" r="0.7" fill="#fff" opacity="0.87"/><circle cx="1855.9" cy="150.8" r="1.3" fill="#fff" opacity="0.80"/><circle cx="1839.4" cy="574.4" r="0.7" fill="#fff" opacity="0.56"/><circle cx="159.0" cy="161.4" r="0.7" fill="#fff" opacity="0.74"/><circle cx="81.8" cy="536.8" r="1.0" fill="#fff" opacity="0.79"/><circle cx="1366.6" cy="1094.2" r="0.9" fill="#fff" opacity="0.34"/><circle cx="708.7" cy="587.5" r="0.8" fill="#fff" opacity="0.58"/><circle cx="1860.1" cy="1093.6" r="1.3" fill="#fff" opacity="0.80"/><circle cx="932.7" cy="724.4" r="1.0" fill="#fff" opacity="0.92"/><circle cx="829.9" cy="968.4" r="1.3" fill="#fff" opacity="0.80"/><circle cx="892.3" cy="133.6" r="0.8" fill="#fff" opacity="0.49"/><circle cx="432.1" cy="174.9" r="1.0" fill="#fff" opacity="0.84"/><circle cx="691.4" cy="850.1" r="0.7" fill="#fff" opacity="0.72"/><circle cx="790.7" cy="800.9" r="0.7" fill="#fff" opacity="0.84"/><circle cx="1204.2" cy="129.5" r="1.0" fill="#fff" opacity="0.63"/><circle cx="177.3" cy="631.2" r="0.8" fill="#fff" opacity="0.63"/><circle cx="387.9" cy="187.0" r="1.0" fill="#fff" opacity="0.54"/><circle cx="987.3" cy="842.3" r="1.0" fill="#fff" opacity="0.66"/><circle cx="955.7" cy="39.3" r="1.0" fill="#fff" opacity="0.56"/><circle cx="1355.9" cy="431.3" r="1.0" fill="#fff" opacity="0.84"/><circle cx="669.0" cy="910.2" r="0.9" fill="#fff" opacity="0.93"/><circle cx="122.8" cy="255.3" r="0.8" fill="#fff" opacity="0.91"/><circle cx="275.6" cy="773.5" r="0.9" fill="#fff" opacity="0.54"/><circle cx="1736.8" cy="524.6" r="0.8" fill="#fff" opacity="0.87"/><circle cx="1269.0" cy="35.5" r="0.7" fill="#fff" opacity="0.85"/><circle cx="1056.0" cy="1027.9" r="0.8" fill="#fff" opacity="0.45"/><circle cx="351.4" cy="232.9" r="0.8" fill="#fff" opacity="0.48"/><circle cx="543.1" cy="550.3" r="0.7" fill="#fff" opacity="0.83"/><circle cx="1187.9" cy="446.4" r="1.0" fill="#fff" opacity="0.49"/><circle cx="291.6" cy="561.8" r="0.8" fill="#fff" opacity="0.46"/><circle cx="1387.2" cy="738.3" r="0.7" fill="#fff" opacity="0.85"/><circle cx="141.1" cy="808.5" r="0.7" fill="#fff" opacity="0.53"/><circle cx="13.5" cy="163.5" r="0.9" fill="#fff" opacity="0.61"/><circle cx="249.4" cy="523.5" r="0.7" fill="#fff" opacity="0.70"/><circle cx="1619.6" cy="216.7" r="0.7" fill="#fff" opacity="0.90"/><circle cx="1011.6" cy="215.3" r="0.9" fill="#fff" opacity="0.51"/><circle cx="641.3" cy="51.3" r="0.7" fill="#fff" opacity="0.83"/><circle cx="1588.3" cy="122.5" r="0.9" fill="#fff" opacity="0.70"/><circle cx="457.8" cy="807.7" r="1.0" fill="#fff" opacity="0.75"/><circle cx="502.9" cy="277.3" r="0.7" fill="#fff" opacity="0.52"/><circle cx="512.4" cy="116.8" r="0.7" fill="#fff" opacity="0.69"/><circle cx="1438.5" cy="106.1" r="0.8" fill="#fff" opacity="0.58"/><circle cx="498.1" cy="256.2" r="0.8" fill="#fff" opacity="0.68"/><circle cx="1434.9" cy="28.1" r="0.9" fill="#fff" opacity="0.58"/><circle cx="1863.8" cy="846.3" r="0.7" fill="#fff" opacity="0.80"/><circle cx="902.6" cy="881.4" r="1.0" fill="#fff" opacity="0.49"/><circle cx="1698.4" cy="366.7" r="0.7" fill="#fff" opacity="0.88"/><circle cx="135.1" cy="966.3" r="0.8" fill="#fff" opacity="0.47"/><circle cx="374.4" cy="468.2" r="0.9" fill="#fff" opacity="0.74"/><circle cx="1287.3" cy="474.7" r="1.0" fill="#fff" opacity="0.71"/><circle cx="1828.5" cy="581.9" r="0.8" fill="#fff" opacity="0.87"/><circle cx="1322.0" cy="598.3" r="1.3" fill="#fff" opacity="0.80"/><circle cx="851.8" cy="1115.9" r="0.8" fill="#fff" opacity="0.31"/><circle cx="548.1" cy="535.9" r="0.8" fill="#fff" opacity="0.47"/><circle cx="1532.1" cy="1001.5" r="0.9" fill="#fff" opacity="0.35"/><circle cx="1017.5" cy="772.8" r="0.9" fill="#fff" opacity="0.79"/><circle cx="9.1" cy="321.9" r="0.7" fill="#fff" opacity="0.49"/><circle cx="1074.0" cy="746.0" r="0.8" fill="#fff" opacity="0.83"/><circle cx="1602.2" cy="1039.9" r="0.7" fill="#fff" opacity="0.42"/><circle cx="1326.0" cy="406.7" r="0.8" fill="#fff" opacity="0.88"/><circle cx="842.0" cy="223.6" r="0.7" fill="#fff" opacity="0.57"/><circle cx="27.7" cy="74.4" r="1.0" fill="#fff" opacity="0.78"/><circle cx="1439.5" cy="411.1" r="0.9" fill="#fff" opacity="0.83"/><circle cx="100.3" cy="627.5" r="0.9" fill="#fff" opacity="0.60"/><circle cx="1261.2" cy="984.7" r="0.7" fill="#fff" opacity="0.54"/><circle cx="1387.7" cy="594.0" r="0.7" fill="#fff" opacity="0.59"/><circle cx="1392.2" cy="425.3" r="0.7" fill="#fff" opacity="0.50"/><circle cx="1099.2" cy="1102.3" r="0.9" fill="#fff" opacity="0.34"/><circle cx="1129.6" cy="1026.5" r="0.9" fill="#fff" opacity="0.30"/><circle cx="1222.1" cy="631.3" r="0.7" fill="#fff" opacity="0.91"/><circle cx="691.7" cy="1042.1" r="0.9" fill="#fff" opacity="0.47"/><circle cx="127.7" cy="305.1" r="0.7" fill="#fff" opacity="0.75"/><circle cx="1083.6" cy="882.5" r="0.7" fill="#fff" opacity="0.70"/><circle cx="263.6" cy="811.0" r="0.7" fill="#fff" opacity="0.75"/><circle cx="454.6" cy="712.4" r="0.7" fill="#fff" opacity="0.86"/><circle cx="89.4" cy="1099.0" r="0.8" fill="#fff" opacity="0.26"/><circle cx="1349.6" cy="682.7" r="1.0" fill="#fff" opacity="0.77"/><circle cx="1278.9" cy="781.1" r="0.8" fill="#fff" opacity="0.65"/><circle cx="742.0" cy="1139.3" r="0.8" fill="#fff" opacity="0.24"/><circle cx="1496.4" cy="603.9" r="1.0" fill="#fff" opacity="0.82"/><circle cx="508.7" cy="268.2" r="0.8" fill="#fff" opacity="0.68"/><circle cx="1274.6" cy="946.9" r="0.8" fill="#fff" opacity="0.55"/><circle cx="1120.1" cy="676.4" r="1.0" fill="#fff" opacity="0.90"/><circle cx="877.9" cy="31.8" r="0.7" fill="#fff" opacity="0.84"/><circle cx="229.6" cy="315.7" r="0.9" fill="#fff" opacity="0.59"/><circle cx="1843.9" cy="546.3" r="0.8" fill="#fff" opacity="0.82"/><circle cx="1344.0" cy="1065.1" r="0.8" fill="#fff" opacity="0.42"/><circle cx="1596.4" cy="612.2" r="0.7" fill="#fff" opacity="0.85"/><circle cx="277.2" cy="932.0" r="1.0" fill="#fff" opacity="0.67"/><circle cx="1460.8" cy="490.4" r="1.0" fill="#fff" opacity="0.91"/><circle cx="337.5" cy="439.8" r="0.7" fill="#fff" opacity="0.48"/><circle cx="1755.6" cy="773.1" r="1.0" fill="#fff" opacity="0.52"/><circle cx="789.2" cy="302.1" r="0.7" fill="#fff" opacity="0.61"/><circle cx="1609.6" cy="873.1" r="0.9" fill="#fff" opacity="0.90"/><circle cx="777.8" cy="25.9" r="0.7" fill="#fff" opacity="0.72"/><circle cx="543.9" cy="500.7" r="0.8" fill="#fff" opacity="0.76"/><circle cx="1479.5" cy="280.8" r="0.8" fill="#fff" opacity="0.54"/><circle cx="75.4" cy="644.9" r="0.7" fill="#fff" opacity="0.56"/><circle cx="73.1" cy="1140.1" r="0.7" fill="#fff" opacity="0.30"/><circle cx="306.1" cy="182.2" r="1.0" fill="#fff" opacity="0.76"/><circle cx="1623.3" cy="25.9" r="0.9" fill="#fff" opacity="0.85"/><circle cx="80.9" cy="135.4" r="0.8" fill="#fff" opacity="0.70"/><circle cx="381.7" cy="338.5" r="0.8" fill="#fff" opacity="0.85"/><circle cx="219.5" cy="165.6" r="0.7" fill="#fff" opacity="0.75"/><circle cx="304.7" cy="630.3" r="0.7" fill="#fff" opacity="0.55"/><circle cx="1228.9" cy="806.1" r="0.7" fill="#fff" opacity="0.53"/><circle cx="1085.1" cy="1014.5" r="0.8" fill="#fff" opacity="0.39"/><circle cx="1247.3" cy="604.7" r="1.0" fill="#fff" opacity="0.93"/><circle cx="952.8" cy="257.8" r="1.0" fill="#fff" opacity="0.46"/><circle cx="1532.0" cy="266.7" r="1.0" fill="#fff" opacity="0.56"/><circle cx="164.7" cy="267.8" r="0.7" fill="#fff" opacity="0.84"/><circle cx="322.5" cy="1105.8" r="1.0" fill="#fff" opacity="0.39"/><circle cx="217.1" cy="666.3" r="1.0" fill="#fff" opacity="0.87"/><circle cx="280.3" cy="646.0" r="0.8" fill="#fff" opacity="0.86"/><circle cx="1098.0" cy="173.3" r="0.7" fill="#fff" opacity="0.58"/><circle cx="1478.9" cy="698.5" r="1.0" fill="#fff" opacity="0.95"/><circle cx="769.4" cy="1109.8" r="1.3" fill="#fff" opacity="0.80"/><circle cx="1200.2" cy="625.5" r="0.7" fill="#fff" opacity="0.59"/><circle cx="159.1" cy="944.9" r="0.7" fill="#fff" opacity="0.77"/><circle cx="1046.4" cy="617.3" r="0.8" fill="#fff" opacity="0.54"/><circle cx="274.3" cy="418.9" r="0.8" fill="#fff" opacity="0.93"/><circle cx="1262.4" cy="24.2" r="1.0" fill="#fff" opacity="0.48"/><circle cx="1791.9" cy="234.3" r="0.9" fill="#fff" opacity="0.74"/><circle cx="460.2" cy="609.5" r="0.8" fill="#fff" opacity="0.79"/><circle cx="177.1" cy="562.9" r="0.9" fill="#fff" opacity="0.85"/><circle cx="1157.3" cy="112.3" r="0.7" fill="#fff" opacity="0.84"/><circle cx="1036.0" cy="427.1" r="0.9" fill="#fff" opacity="0.80"/><circle cx="492.6" cy="515.7" r="1.0" fill="#fff" opacity="0.48"/><circle cx="1586.0" cy="171.6" r="0.7" fill="#fff" opacity="0.65"/><circle cx="1446.8" cy="938.7" r="0.7" fill="#fff" opacity="0.64"/><circle cx="383.3" cy="718.8" r="0.7" fill="#fff" opacity="0.73"/><circle cx="593.7" cy="1070.2" r="0.7" fill="#fff" opacity="0.23"/><circle cx="176.1" cy="1094.1" r="0.7" fill="#fff" opacity="0.46"/><circle cx="1643.2" cy="63.2" r="0.9" fill="#fff" opacity="0.84"/><circle cx="160.0" cy="613.0" r="1.0" fill="#fff" opacity="0.54"/><circle cx="1860.1" cy="308.9" r="0.9" fill="#fff" opacity="0.93"/><circle cx="845.4" cy="495.0" r="1.0" fill="#fff" opacity="0.76"/><circle cx="1094.5" cy="904.2" r="1.0" fill="#fff" opacity="0.63"/><circle cx="1081.1" cy="1035.1" r="1.3" fill="#fff" opacity="0.80"/><circle cx="1717.1" cy="255.3" r="0.7" fill="#fff" opacity="0.65"/><circle cx="502.8" cy="852.2" r="0.8" fill="#fff" opacity="0.94"/><circle cx="685.9" cy="1102.0" r="0.8" fill="#fff" opacity="0.36"/><circle cx="379.2" cy="912.7" r="1.0" fill="#fff" opacity="0.62"/><circle cx="793.7" cy="406.4" r="0.7" fill="#fff" opacity="0.72"/><circle cx="881.5" cy="94.3" r="0.8" fill="#fff" opacity="0.91"/><circle cx="1372.1" cy="985.0" r="0.9" fill="#fff" opacity="0.48"/><circle cx="438.4" cy="268.9" r="1.3" fill="#fff" opacity="0.80"/><circle cx="1372.9" cy="679.4" r="1.0" fill="#fff" opacity="0.83"/><circle cx="1341.6" cy="482.1" r="1.0" fill="#fff" opacity="0.62"/><circle cx="653.1" cy="976.2" r="0.8" fill="#fff" opacity="0.85"/><circle cx="958.9" cy="973.9" r="0.7" fill="#fff" opacity="0.66"/><circle cx="1305.2" cy="154.8" r="1.0" fill="#fff" opacity="0.73"/><circle cx="1337.9" cy="426.1" r="0.8" fill="#fff" opacity="0.76"/><circle cx="837.1" cy="331.5" r="0.9" fill="#fff" opacity="0.95"/><circle cx="511.7" cy="914.8" r="0.9" fill="#fff" opacity="0.75"/><circle cx="1890.6" cy="123.0" r="0.9" fill="#fff" opacity="0.50"/><circle cx="1702.6" cy="1121.0" r="0.7" fill="#fff" opacity="0.42"/><circle cx="348.3" cy="523.4" r="1.0" fill="#fff" opacity="0.82"/><circle cx="250.4" cy="345.6" r="0.7" fill="#fff" opacity="0.81"/><circle cx="1551.4" cy="51.7" r="0.8" fill="#fff" opacity="0.94"/><circle cx="488.3" cy="239.4" r="1.0" fill="#fff" opacity="0.75"/><circle cx="1486.0" cy="620.3" r="0.9" fill="#fff" opacity="0.92"/><circle cx="9.0" cy="1019.3" r="0.7" fill="#fff" opacity="0.26"/><circle cx="828.5" cy="968.6" r="0.9" fill="#fff" opacity="0.93"/><circle cx="1143.7" cy="1121.2" r="0.9" fill="#fff" opacity="0.31"/><circle cx="655.5" cy="629.2" r="0.7" fill="#fff" opacity="0.78"/><circle cx="1165.9" cy="863.8" r="0.9" fill="#fff" opacity="0.56"/><circle cx="1426.7" cy="532.3" r="0.7" fill="#fff" opacity="0.45"/><circle cx="865.1" cy="407.4" r="0.9" fill="#fff" opacity="0.76"/><circle cx="1568.5" cy="515.7" r="1.0" fill="#fff" opacity="0.81"/><circle cx="645.2" cy="93.6" r="1.0" fill="#fff" opacity="0.60"/><circle cx="413.5" cy="32.9" r="0.9" fill="#fff" opacity="0.84"/><circle cx="1910.4" cy="833.6" r="0.9" fill="#fff" opacity="0.77"/><circle cx="1833.2" cy="575.3" r="0.8" fill="#fff" opacity="0.67"/><circle cx="725.2" cy="619.2" r="0.9" fill="#fff" opacity="0.50"/><circle cx="1072.4" cy="1053.0" r="0.7" fill="#fff" opacity="0.32"/><circle cx="33.2" cy="169.6" r="0.7" fill="#fff" opacity="0.57"/><circle cx="325.2" cy="1114.5" r="1.0" fill="#fff" opacity="0.23"/><circle cx="1847.8" cy="1021.3" r="0.7" fill="#fff" opacity="0.32"/><circle cx="641.3" cy="284.1" r="0.8" fill="#fff" opacity="0.79"/><circle cx="223.5" cy="949.9" r="0.9" fill="#fff" opacity="0.58"/><circle cx="1891.6" cy="809.0" r="1.0" fill="#fff" opacity="0.48"/><circle cx="1215.9" cy="385.5" r="0.7" fill="#fff" opacity="0.81"/><circle cx="1163.8" cy="852.8" r="1.0" fill="#fff" opacity="0.60"/><circle cx="29.0" cy="208.0" r="1.0" fill="#fff" opacity="0.64"/><circle cx="1444.3" cy="468.1" r="1.0" fill="#fff" opacity="0.53"/><circle cx="965.8" cy="846.5" r="1.0" fill="#fff" opacity="0.92"/><circle cx="1222.4" cy="944.8" r="0.9" fill="#fff" opacity="0.94"/><circle cx="881.4" cy="56.4" r="0.8" fill="#fff" opacity="0.79"/><circle cx="284.5" cy="280.5" r="0.8" fill="#fff" opacity="0.59"/><circle cx="1321.2" cy="607.1" r="0.9" fill="#fff" opacity="0.76"/><circle cx="1260.8" cy="568.8" r="0.9" fill="#fff" opacity="0.92"/><circle cx="1632.1" cy="282.9" r="0.7" fill="#fff" opacity="0.70"/><circle cx="1128.2" cy="836.9" r="0.9" fill="#fff" opacity="0.51"/><circle cx="409.8" cy="397.0" r="0.9" fill="#fff" opacity="0.59"/><circle cx="543.1" cy="354.4" r="0.7" fill="#fff" opacity="0.64"/><circle cx="1886.8" cy="169.4" r="0.8" fill="#fff" opacity="0.64"/><circle cx="1612.8" cy="682.2" r="1.3" fill="#fff" opacity="0.80"/><circle cx="837.1" cy="568.6" r="0.8" fill="#fff" opacity="0.67"/><circle cx="1396.5" cy="1112.8" r="0.7" fill="#fff" opacity="0.33"/><circle cx="253.9" cy="711.4" r="0.7" fill="#fff" opacity="0.89"/><circle cx="318.9" cy="1039.5" r="0.7" fill="#fff" opacity="0.42"/><circle cx="1187.5" cy="49.8" r="0.9" fill="#fff" opacity="0.85"/><circle cx="5.5" cy="849.3" r="0.9" fill="#fff" opacity="0.63"/><circle cx="1558.9" cy="1114.7" r="0.9" fill="#fff" opacity="0.42"/><circle cx="1375.0" cy="690.6" r="1.0" fill="#fff" opacity="0.61"/><circle cx="1886.4" cy="552.3" r="0.7" fill="#fff" opacity="0.65"/><circle cx="1540.2" cy="1117.2" r="0.9" fill="#fff" opacity="0.40"/><circle cx="1764.8" cy="1097.5" r="1.0" fill="#fff" opacity="0.27"/><circle cx="595.3" cy="898.8" r="0.8" fill="#fff" opacity="0.95"/><circle cx="1789.4" cy="41.7" r="1.3" fill="#fff" opacity="0.80"/><circle cx="1524.8" cy="406.1" r="0.7" fill="#fff" opacity="0.53"/><circle cx="1322.1" cy="873.5" r="0.8" fill="#fff" opacity="0.85"/><circle cx="913.1" cy="569.6" r="1.0" fill="#fff" opacity="0.62"/><circle cx="721.1" cy="782.6" r="1.0" fill="#fff" opacity="0.45"/><circle cx="1428.0" cy="144.6" r="0.9" fill="#fff" opacity="0.88"/><circle cx="1095.4" cy="874.8" r="0.9" fill="#fff" opacity="0.91"/><circle cx="1711.2" cy="668.3" r="0.9" fill="#fff" opacity="0.81"/><circle cx="1445.8" cy="498.2" r="0.7" fill="#fff" opacity="0.55"/><circle cx="299.2" cy="998.3" r="1.0" fill="#fff" opacity="0.68"/><circle cx="1512.3" cy="930.1" r="1.0" fill="#fff" opacity="0.94"/><circle cx="1874.6" cy="1046.8" r="0.8" fill="#fff" opacity="0.28"/><circle cx="1182.0" cy="884.2" r="0.9" fill="#fff" opacity="0.60"/><circle cx="709.7" cy="905.0" r="1.0" fill="#fff" opacity="0.74"/><circle cx="201.6" cy="282.9" r="0.9" fill="#fff" opacity="0.90"/><circle cx="1240.6" cy="959.1" r="1.0" fill="#fff" opacity="0.69"/><circle cx="857.9" cy="1082.2" r="0.8" fill="#fff" opacity="0.32"/><circle cx="703.7" cy="409.2" r="1.0" fill="#fff" opacity="0.55"/><circle cx="350.8" cy="113.8" r="0.9" fill="#fff" opacity="0.92"/><circle cx="1553.4" cy="1041.1" r="0.8" fill="#fff" opacity="0.42"/><circle cx="1018.0" cy="587.7" r="0.8" fill="#fff" opacity="0.94"/><circle cx="1351.5" cy="340.4" r="0.7" fill="#fff" opacity="0.72"/><circle cx="504.1" cy="857.3" r="0.9" fill="#fff" opacity="0.92"/><circle cx="1235.8" cy="245.0" r="0.7" fill="#fff" opacity="0.73"/><circle cx="1316.1" cy="641.8" r="1.0" fill="#fff" opacity="0.45"/><circle cx="1183.3" cy="482.6" r="0.8" fill="#fff" opacity="0.90"/><circle cx="18.5" cy="726.0" r="1.0" fill="#fff" opacity="0.95"/><circle cx="1620.1" cy="564.7" r="0.8" fill="#fff" opacity="0.61"/><circle cx="71.7" cy="144.0" r="0.9" fill="#fff" opacity="0.61"/><circle cx="1319.6" cy="533.3" r="0.7" fill="#fff" opacity="0.64"/><circle cx="679.3" cy="778.3" r="0.8" fill="#fff" opacity="0.60"/><circle cx="956.3" cy="142.2" r="0.7" fill="#fff" opacity="0.61"/><circle cx="526.4" cy="199.5" r="0.7" fill="#fff" opacity="0.53"/><circle cx="106.9" cy="122.8" r="0.9" fill="#fff" opacity="0.89"/><circle cx="1797.4" cy="1117.3" r="1.0" fill="#fff" opacity="0.37"/><circle cx="1259.4" cy="583.2" r="1.0" fill="#fff" opacity="0.91"/><circle cx="1712.3" cy="658.2" r="0.9" fill="#fff" opacity="0.62"/><circle cx="771.8" cy="260.5" r="0.9" fill="#fff" opacity="0.91"/><circle cx="1246.6" cy="272.4" r="0.7" fill="#fff" opacity="0.74"/><circle cx="221.9" cy="571.7" r="0.8" fill="#fff" opacity="0.57"/><circle cx="1619.4" cy="568.3" r="0.9" fill="#fff" opacity="0.91"/><circle cx="1624.9" cy="1086.7" r="0.9" fill="#fff" opacity="0.32"/><circle cx="386.3" cy="542.2" r="1.0" fill="#fff" opacity="0.50"/><circle cx="375.1" cy="975.5" r="0.9" fill="#fff" opacity="0.71"/><circle cx="362.3" cy="738.6" r="1.0" fill="#fff" opacity="0.85"/><circle cx="1428.8" cy="319.9" r="0.9" fill="#fff" opacity="0.59"/><circle cx="1862.7" cy="1093.9" r="0.8" fill="#fff" opacity="0.35"/><circle cx="148.6" cy="648.3" r="0.7" fill="#fff" opacity="0.51"/><circle cx="1316.3" cy="553.1" r="1.0" fill="#fff" opacity="0.66"/><circle cx="1675.4" cy="385.8" r="0.7" fill="#fff" opacity="0.68"/><circle cx="1354.0" cy="945.7" r="0.9" fill="#fff" opacity="0.67"/><circle cx="1287.4" cy="983.0" r="0.8" fill="#fff" opacity="0.86"/><circle cx="305.2" cy="986.6" r="0.7" fill="#fff" opacity="0.82"/><circle cx="1755.2" cy="86.9" r="0.9" fill="#fff" opacity="0.91"/><circle cx="734.4" cy="875.5" r="0.7" fill="#fff" opacity="0.52"/><circle cx="1037.3" cy="536.7" r="1.0" fill="#fff" opacity="0.70"/><circle cx="1449.9" cy="435.4" r="0.7" fill="#fff" opacity="0.45"/><circle cx="1827.9" cy="1148.7" r="0.8" fill="#fff" opacity="0.25"/><circle cx="1907.2" cy="725.5" r="0.7" fill="#fff" opacity="0.52"/><circle cx="1299.9" cy="1105.0" r="0.8" fill="#fff" opacity="0.38"/><circle cx="222.8" cy="396.4" r="1.0" fill="#fff" opacity="0.47"/><circle cx="254.7" cy="80.8" r="0.7" fill="#fff" opacity="0.47"/><circle cx="269.9" cy="1070.5" r="0.9" fill="#fff" opacity="0.28"/><circle cx="440.8" cy="118.9" r="0.7" fill="#fff" opacity="0.82"/><circle cx="1455.2" cy="185.3" r="0.9" fill="#fff" opacity="0.75"/><circle cx="568.5" cy="798.1" r="0.8" fill="#fff" opacity="0.75"/><circle cx="1601.6" cy="507.2" r="0.9" fill="#fff" opacity="0.73"/><circle cx="1786.6" cy="447.6" r="0.7" fill="#fff" opacity="0.81"/><circle cx="44.6" cy="798.8" r="0.8" fill="#fff" opacity="0.55"/><circle cx="129.5" cy="636.7" r="0.7" fill="#fff" opacity="0.61"/><circle cx="406.3" cy="894.0" r="1.0" fill="#fff" opacity="0.46"/><circle cx="1775.0" cy="650.4" r="0.9" fill="#fff" opacity="0.90"/><circle cx="44.9" cy="772.4" r="0.7" fill="#fff" opacity="0.77"/><circle cx="1559.3" cy="728.3" r="0.9" fill="#fff" opacity="0.51"/><circle cx="1279.5" cy="130.4" r="0.8" fill="#fff" opacity="0.88"/><circle cx="1727.2" cy="722.1" r="1.0" fill="#fff" opacity="0.69"/><circle cx="1804.9" cy="366.2" r="1.0" fill="#fff" opacity="0.73"/><circle cx="1696.6" cy="867.9" r="0.7" fill="#fff" opacity="0.91"/><circle cx="817.5" cy="193.5" r="1.3" fill="#fff" opacity="0.80"/><circle cx="765.5" cy="960.1" r="0.7" fill="#fff" opacity="0.67"/><circle cx="1892.3" cy="1066.6" r="0.7" fill="#fff" opacity="0.37"/><circle cx="1410.2" cy="832.1" r="0.9" fill="#fff" opacity="0.55"/><circle cx="1318.1" cy="210.1" r="0.9" fill="#fff" opacity="0.69"/><circle cx="1801.6" cy="807.8" r="0.7" fill="#fff" opacity="0.70"/><circle cx="248.1" cy="110.7" r="1.0" fill="#fff" opacity="0.93"/><circle cx="1044.6" cy="399.7" r="0.7" fill="#fff" opacity="0.56"/><circle cx="205.8" cy="734.8" r="0.8" fill="#fff" opacity="0.55"/><circle cx="1054.5" cy="717.3" r="0.8" fill="#fff" opacity="0.76"/><circle cx="1667.3" cy="789.5" r="0.9" fill="#fff" opacity="0.64"/><circle cx="1131.6" cy="615.4" r="1.0" fill="#fff" opacity="0.94"/><circle cx="1189.5" cy="902.5" r="0.9" fill="#fff" opacity="0.65"/><circle cx="811.9" cy="1027.6" r="1.0" fill="#fff" opacity="0.41"/><circle cx="609.6" cy="110.3" r="0.9" fill="#fff" opacity="0.62"/><circle cx="1005.9" cy="243.2" r="0.9" fill="#fff" opacity="0.95"/><circle cx="83.3" cy="175.3" r="1.0" fill="#fff" opacity="0.52"/><circle cx="104.2" cy="86.4" r="0.9" fill="#fff" opacity="0.65"/><circle cx="1144.6" cy="157.4" r="0.9" fill="#fff" opacity="0.49"/><circle cx="649.8" cy="398.1" r="0.7" fill="#fff" opacity="0.54"/><circle cx="1758.3" cy="220.5" r="0.9" fill="#fff" opacity="0.94"/><circle cx="1356.7" cy="438.1" r="1.0" fill="#fff" opacity="0.51"/><circle cx="1890.1" cy="1006.4" r="1.0" fill="#fff" opacity="0.30"/><circle cx="1371.8" cy="492.2" r="0.8" fill="#fff" opacity="0.83"/><circle cx="1308.8" cy="203.0" r="0.7" fill="#fff" opacity="0.57"/><circle cx="1549.0" cy="323.4" r="0.9" fill="#fff" opacity="0.79"/><circle cx="165.5" cy="852.8" r="0.9" fill="#fff" opacity="0.58"/><circle cx="502.7" cy="1049.9" r="0.8" fill="#fff" opacity="0.45"/><circle cx="1000.0" cy="187.3" r="1.3" fill="#fff" opacity="0.80"/><circle cx="1542.7" cy="967.0" r="1.0" fill="#fff" opacity="0.65"/><circle cx="1048.0" cy="793.4" r="0.7" fill="#fff" opacity="0.69"/><circle cx="1486.6" cy="647.9" r="0.9" fill="#fff" opacity="0.52"/><circle cx="724.9" cy="781.3" r="0.7" fill="#fff" opacity="0.93"/><circle cx="765.3" cy="1136.5" r="1.0" fill="#fff" opacity="0.29"/><circle cx="1005.2" cy="975.9" r="0.7" fill="#fff" opacity="0.58"/><circle cx="208.4" cy="35.3" r="1.0" fill="#fff" opacity="0.76"/><circle cx="853.8" cy="135.3" r="0.7" fill="#fff" opacity="0.93"/><circle cx="580.9" cy="186.1" r="0.7" fill="#fff" opacity="0.65"/><circle cx="23.5" cy="506.6" r="0.7" fill="#fff" opacity="0.53"/><circle cx="411.0" cy="1037.0" r="0.9" fill="#fff" opacity="0.34"/><circle cx="1131.1" cy="227.8" r="0.9" fill="#fff" opacity="0.67"/><circle cx="1459.9" cy="320.2" r="0.8" fill="#fff" opacity="0.48"/><circle cx="1094.9" cy="284.9" r="1.0" fill="#fff" opacity="0.68"/><circle cx="229.2" cy="817.8" r="0.8" fill="#fff" opacity="0.48"/><circle cx="182.4" cy="647.8" r="0.8" fill="#fff" opacity="0.65"/><circle cx="1696.1" cy="383.2" r="0.7" fill="#fff" opacity="0.61"/><circle cx="1908.7" cy="764.3" r="0.9" fill="#fff" opacity="0.64"/><circle cx="1325.0" cy="663.5" r="0.9" fill="#fff" opacity="0.53"/><circle cx="1327.2" cy="1045.1" r="1.0" fill="#fff" opacity="0.35"/><circle cx="1585.3" cy="851.6" r="1.0" fill="#fff" opacity="0.80"/><circle cx="358.8" cy="327.0" r="1.0" fill="#fff" opacity="0.81"/><circle cx="794.5" cy="97.7" r="0.8" fill="#fff" opacity="0.58"/><circle cx="938.9" cy="524.1" r="0.7" fill="#fff" opacity="0.92"/><circle cx="777.1" cy="372.7" r="0.7" fill="#fff" opacity="0.60"/><circle cx="843.1" cy="68.8" r="0.8" fill="#fff" opacity="0.52"/><circle cx="520.5" cy="453.9" r="1.0" fill="#fff" opacity="0.87"/><circle cx="847.0" cy="958.5" r="0.7" fill="#fff" opacity="0.46"/><circle cx="1804.8" cy="35.5" r="0.7" fill="#fff" opacity="0.63"/><circle cx="1734.0" cy="137.9" r="0.7" fill="#fff" opacity="0.76"/><circle cx="682.1" cy="524.9" r="0.7" fill="#fff" opacity="0.69"/><circle cx="687.0" cy="943.6" r="1.0" fill="#fff" opacity="0.83"/><circle cx="197.0" cy="955.8" r="0.8" fill="#fff" opacity="0.79"/><circle cx="801.0" cy="987.8" r="0.9" fill="#fff" opacity="0.47"/><circle cx="1302.0" cy="485.5" r="0.9" fill="#fff" opacity="0.62"/><circle cx="1330.0" cy="1148.5" r="0.9" fill="#fff" opacity="0.27"/><circle cx="1003.8" cy="846.1" r="0.8" fill="#fff" opacity="0.66"/><circle cx="1908.7" cy="891.0" r="0.8" fill="#fff" opacity="0.73"/><circle cx="1058.0" cy="1072.2" r="0.8" fill="#fff" opacity="0.43"/><circle cx="1187.3" cy="181.6" r="0.7" fill="#fff" opacity="0.60"/><circle cx="1012.2" cy="384.8" r="0.7" fill="#fff" opacity="0.87"/><circle cx="738.6" cy="1099.7" r="1.0" fill="#fff" opacity="0.39"/><circle cx="961.2" cy="75.4" r="0.8" fill="#fff" opacity="0.87"/><circle cx="894.7" cy="928.9" r="0.7" fill="#fff" opacity="0.69"/><circle cx="830.4" cy="719.2" r="0.9" fill="#fff" opacity="0.75"/><circle cx="788.4" cy="153.4" r="0.7" fill="#fff" opacity="0.67"/><circle cx="1207.5" cy="353.1" r="0.7" fill="#fff" opacity="0.81"/><circle cx="1454.7" cy="575.7" r="1.0" fill="#fff" opacity="0.48"/><circle cx="1427.9" cy="359.7" r="0.8" fill="#fff" opacity="0.94"/><circle cx="568.1" cy="139.7" r="0.9" fill="#fff" opacity="0.57"/><circle cx="1296.5" cy="340.1" r="1.0" fill="#fff" opacity="0.86"/><circle cx="47.9" cy="684.5" r="1.0" fill="#fff" opacity="0.77"/><circle cx="817.0" cy="950.3" r="0.7" fill="#fff" opacity="0.63"/><circle cx="905.1" cy="234.8" r="0.7" fill="#fff" opacity="0.87"/><circle cx="19.9" cy="480.1" r="1.0" fill="#fff" opacity="0.52"/><circle cx="1311.9" cy="625.5" r="0.9" fill="#fff" opacity="0.52"/><circle cx="347.8" cy="1015.8" r="0.7" fill="#fff" opacity="0.36"/><circle cx="215.0" cy="1120.5" r="0.9" fill="#fff" opacity="0.44"/><circle cx="1382.9" cy="450.1" r="0.7" fill="#fff" opacity="0.80"/><circle cx="1819.3" cy="517.4" r="1.0" fill="#fff" opacity="0.50"/><circle cx="1405.2" cy="431.4" r="0.8" fill="#fff" opacity="0.52"/><circle cx="1133.8" cy="295.0" r="1.0" fill="#fff" opacity="0.51"/><circle cx="1334.3" cy="881.0" r="0.7" fill="#fff" opacity="0.52"/><circle cx="1119.0" cy="115.7" r="0.9" fill="#fff" opacity="0.72"/><circle cx="1570.9" cy="761.8" r="0.8" fill="#fff" opacity="0.60"/><circle cx="1350.8" cy="773.6" r="0.7" fill="#fff" opacity="0.68"/><circle cx="722.7" cy="181.5" r="0.9" fill="#fff" opacity="0.94"/><circle cx="298.4" cy="578.8" r="1.0" fill="#fff" opacity="0.85"/><circle cx="551.2" cy="512.8" r="0.8" fill="#fff" opacity="0.55"/><circle cx="1202.2" cy="371.4" r="0.9" fill="#fff" opacity="0.70"/><circle cx="1865.3" cy="386.8" r="0.9" fill="#fff" opacity="0.91"/><circle cx="49.4" cy="519.7" r="0.8" fill="#fff" opacity="0.79"/><circle cx="771.2" cy="97.4" r="1.0" fill="#fff" opacity="0.66"/><circle cx="1776.3" cy="1143.1" r="1.0" fill="#fff" opacity="0.45"/><circle cx="211.2" cy="510.1" r="0.8" fill="#fff" opacity="0.53"/><circle cx="993.7" cy="880.0" r="0.8" fill="#fff" opacity="0.60"/><circle cx="1882.3" cy="369.2" r="0.7" fill="#fff" opacity="0.77"/><circle cx="1207.6" cy="498.5" r="1.0" fill="#fff" opacity="0.81"/><circle cx="1338.6" cy="463.1" r="0.8" fill="#fff" opacity="0.61"/><circle cx="1358.5" cy="540.7" r="1.0" fill="#fff" opacity="0.71"/><circle cx="1352.6" cy="98.9" r="0.8" fill="#fff" opacity="0.73"/><circle cx="1404.6" cy="527.6" r="1.0" fill="#fff" opacity="0.93"/><circle cx="783.5" cy="411.0" r="1.0" fill="#fff" opacity="0.63"/><circle cx="1204.2" cy="606.2" r="0.7" fill="#fff" opacity="0.82"/><circle cx="1425.0" cy="580.2" r="0.8" fill="#fff" opacity="0.66"/><circle cx="1895.4" cy="663.6" r="0.7" fill="#fff" opacity="0.81"/><circle cx="1694.1" cy="881.8" r="0.8" fill="#fff" opacity="0.58"/><circle cx="541.7" cy="694.6" r="0.7" fill="#fff" opacity="0.46"/><circle cx="1150.3" cy="373.3" r="0.8" fill="#fff" opacity="0.82"/><circle cx="134.7" cy="284.4" r="0.9" fill="#fff" opacity="0.65"/><circle cx="1396.0" cy="438.1" r="0.8" fill="#fff" opacity="0.52"/><circle cx="1242.7" cy="290.3" r="0.8" fill="#fff" opacity="0.52"/><circle cx="1051.8" cy="1062.3" r="1.0" fill="#fff" opacity="0.28"/><circle cx="1179.9" cy="450.2" r="0.8" fill="#fff" opacity="0.81"/><circle cx="620.0" cy="144.4" r="0.8" fill="#fff" opacity="0.95"/><circle cx="367.0" cy="298.8" r="1.0" fill="#fff" opacity="0.67"/><circle cx="54.5" cy="812.1" r="1.0" fill="#fff" opacity="0.76"/><circle cx="1363.3" cy="315.4" r="1.0" fill="#fff" opacity="0.69"/><circle cx="195.7" cy="388.3" r="0.9" fill="#fff" opacity="0.93"/><circle cx="766.9" cy="273.3" r="0.7" fill="#fff" opacity="0.66"/><circle cx="1582.9" cy="945.1" r="0.8" fill="#fff" opacity="0.55"/><circle cx="768.1" cy="862.5" r="0.9" fill="#fff" opacity="0.56"/><circle cx="1030.3" cy="531.0" r="0.7" fill="#fff" opacity="0.52"/><circle cx="353.9" cy="925.1" r="1.0" fill="#fff" opacity="0.91"/><circle cx="1144.9" cy="384.5" r="1.0" fill="#fff" opacity="0.64"/><circle cx="706.6" cy="323.8" r="0.8" fill="#fff" opacity="0.51"/><circle cx="1240.0" cy="58.7" r="0.8" fill="#fff" opacity="0.62"/><circle cx="1621.4" cy="550.2" r="0.8" fill="#fff" opacity="0.47"/><circle cx="1348.7" cy="959.8" r="1.0" fill="#fff" opacity="0.82"/><circle cx="325.3" cy="742.9" r="0.8" fill="#fff" opacity="0.59"/><circle cx="1600.3" cy="1060.6" r="0.8" fill="#fff" opacity="0.44"/><circle cx="1456.4" cy="325.0" r="0.7" fill="#fff" opacity="0.71"/><circle cx="199.7" cy="493.1" r="0.9" fill="#fff" opacity="0.54"/><circle cx="1674.7" cy="497.1" r="0.8" fill="#fff" opacity="0.69"/><circle cx="1328.9" cy="117.9" r="1.0" fill="#fff" opacity="0.59"/><circle cx="1389.8" cy="1056.3" r="0.9" fill="#fff" opacity="0.38"/><circle cx="1840.4" cy="1098.7" r="0.7" fill="#fff" opacity="0.30"/><circle cx="1040.6" cy="72.9" r="0.7" fill="#fff" opacity="0.64"/><circle cx="1377.2" cy="582.3" r="0.9" fill="#fff" opacity="0.89"/><circle cx="1481.4" cy="154.0" r="1.0" fill="#fff" opacity="0.86"/><circle cx="834.3" cy="204.6" r="1.0" fill="#fff" opacity="0.50"/><circle cx="805.2" cy="681.3" r="1.3" fill="#fff" opacity="0.80"/><circle cx="818.3" cy="633.0" r="0.8" fill="#fff" opacity="0.70"/><circle cx="1178.3" cy="792.8" r="0.8" fill="#fff" opacity="0.73"/><circle cx="1000.2" cy="893.6" r="0.8" fill="#fff" opacity="0.89"/><circle cx="803.6" cy="301.6" r="1.0" fill="#fff" opacity="0.75"/><circle cx="386.6" cy="75.8" r="0.9" fill="#fff" opacity="0.77"/><circle cx="1807.2" cy="426.6" r="0.9" fill="#fff" opacity="0.59"/><circle cx="490.7" cy="362.5" r="0.8" fill="#fff" opacity="0.67"/><circle cx="29.4" cy="742.5" r="0.7" fill="#fff" opacity="0.75"/><circle cx="1057.1" cy="762.2" r="0.7" fill="#fff" opacity="0.51"/><circle cx="531.8" cy="592.5" r="0.8" fill="#fff" opacity="0.77"/><circle cx="132.2" cy="985.1" r="1.0" fill="#fff" opacity="0.50"/><circle cx="109.3" cy="701.6" r="1.0" fill="#fff" opacity="0.81"/><circle cx="674.7" cy="1099.5" r="0.7" fill="#fff" opacity="0.29"/><circle cx="1761.9" cy="264.6" r="1.0" fill="#fff" opacity="0.68"/><circle cx="657.9" cy="1142.3" r="0.9" fill="#fff" opacity="0.34"/><circle cx="526.9" cy="1009.0" r="0.9" fill="#fff" opacity="0.27"/><circle cx="139.0" cy="511.8" r="0.9" fill="#fff" opacity="0.45"/><circle cx="1590.0" cy="1103.4" r="0.7" fill="#fff" opacity="0.30"/><circle cx="845.3" cy="438.2" r="0.9" fill="#fff" opacity="0.86"/><circle cx="549.2" cy="144.6" r="0.8" fill="#fff" opacity="0.50"/><circle cx="1831.9" cy="476.4" r="0.8" fill="#fff" opacity="0.91"/><circle cx="1042.1" cy="929.9" r="0.7" fill="#fff" opacity="0.54"/><circle cx="369.3" cy="391.1" r="0.7" fill="#fff" opacity="0.72"/><circle cx="1610.0" cy="1119.0" r="0.7" fill="#fff" opacity="0.46"/><circle cx="706.2" cy="636.0" r="1.0" fill="#fff" opacity="0.83"/><circle cx="1311.1" cy="382.4" r="0.8" fill="#fff" opacity="0.95"/><circle cx="7.5" cy="460.8" r="0.7" fill="#fff" opacity="0.84"/><circle cx="1789.9" cy="325.0" r="1.0" fill="#fff" opacity="0.93"/><circle cx="1084.7" cy="405.1" r="0.9" fill="#fff" opacity="0.82"/><circle cx="1296.2" cy="457.2" r="1.0" fill="#fff" opacity="0.63"/><circle cx="191.7" cy="647.1" r="0.8" fill="#fff" opacity="0.61"/><circle cx="122.6" cy="623.4" r="1.0" fill="#fff" opacity="0.71"/><circle cx="768.9" cy="640.6" r="0.9" fill="#fff" opacity="0.50"/><circle cx="254.8" cy="101.4" r="0.7" fill="#fff" opacity="0.47"/><circle cx="1100.1" cy="153.1" r="1.0" fill="#fff" opacity="0.60"/><circle cx="1823.1" cy="367.7" r="0.7" fill="#fff" opacity="0.89"/><circle cx="266.7" cy="460.3" r="0.8" fill="#fff" opacity="0.63"/><circle cx="860.0" cy="873.1" r="1.0" fill="#fff" opacity="0.48"/><circle cx="831.1" cy="790.0" r="0.8" fill="#fff" opacity="0.94"/><circle cx="162.2" cy="266.6" r="0.7" fill="#fff" opacity="0.71"/><circle cx="279.1" cy="203.1" r="0.8" fill="#fff" opacity="0.58"/><circle cx="1127.3" cy="473.9" r="0.7" fill="#fff" opacity="0.53"/><circle cx="1560.3" cy="687.7" r="0.7" fill="#fff" opacity="0.59"/><circle cx="1126.8" cy="409.6" r="1.0" fill="#fff" opacity="0.67"/><circle cx="1202.5" cy="541.6" r="0.7" fill="#fff" opacity="0.74"/><circle cx="926.2" cy="578.3" r="0.8" fill="#fff" opacity="0.95"/><circle cx="949.2" cy="1121.3" r="0.8" fill="#fff" opacity="0.36"/><circle cx="342.9" cy="492.3" r="1.0" fill="#fff" opacity="0.54"/><circle cx="1518.7" cy="656.4" r="0.7" fill="#fff" opacity="0.50"/><circle cx="1363.3" cy="243.9" r="0.8" fill="#fff" opacity="0.48"/><circle cx="72.6" cy="589.8" r="0.7" fill="#fff" opacity="0.74"/><circle cx="85.1" cy="84.5" r="0.9" fill="#fff" opacity="0.80"/><circle cx="498.6" cy="172.5" r="1.0" fill="#fff" opacity="0.62"/><circle cx="430.1" cy="498.9" r="0.7" fill="#fff" opacity="0.65"/><circle cx="748.2" cy="50.6" r="0.8" fill="#fff" opacity="0.64"/><circle cx="439.6" cy="477.6" r="1.0" fill="#fff" opacity="0.90"/><circle cx="82.2" cy="209.8" r="1.0" fill="#fff" opacity="0.58"/><circle cx="1096.7" cy="1074.4" r="0.7" fill="#fff" opacity="0.27"/><circle cx="1350.0" cy="721.2" r="0.9" fill="#fff" opacity="0.48"/><circle cx="1280.8" cy="360.5" r="1.0" fill="#fff" opacity="0.80"/><circle cx="20.4" cy="161.2" r="0.7" fill="#fff" opacity="0.92"/><circle cx="974.5" cy="386.0" r="0.9" fill="#fff" opacity="0.92"/><circle cx="1718.5" cy="598.6" r="1.0" fill="#fff" opacity="0.70"/><circle cx="1518.3" cy="163.6" r="0.9" fill="#fff" opacity="0.85"/><circle cx="690.3" cy="801.5" r="0.8" fill="#fff" opacity="0.56"/><circle cx="133.1" cy="755.2" r="0.9" fill="#fff" opacity="0.95"/><circle cx="967.5" cy="864.1" r="1.0" fill="#fff" opacity="0.70"/><circle cx="697.9" cy="1114.2" r="0.8" fill="#fff" opacity="0.31"/><circle cx="463.9" cy="291.6" r="0.7" fill="#fff" opacity="0.92"/><circle cx="374.6" cy="573.4" r="0.7" fill="#fff" opacity="0.85"/><circle cx="926.3" cy="687.4" r="0.7" fill="#fff" opacity="0.70"/><circle cx="1209.6" cy="638.8" r="0.9" fill="#fff" opacity="0.74"/><circle cx="663.9" cy="120.0" r="1.0" fill="#fff" opacity="0.84"/><circle cx="1477.5" cy="955.8" r="0.9" fill="#fff" opacity="0.85"/><circle cx="76.5" cy="1084.7" r="1.0" fill="#fff" opacity="0.46"/><circle cx="1345.0" cy="989.9" r="0.7" fill="#fff" opacity="0.82"/><circle cx="463.3" cy="511.4" r="0.9" fill="#fff" opacity="0.60"/><circle cx="355.9" cy="927.1" r="0.7" fill="#fff" opacity="0.83"/><circle cx="1892.2" cy="806.7" r="1.0" fill="#fff" opacity="0.67"/><circle cx="1655.3" cy="178.2" r="0.7" fill="#fff" opacity="0.93"/><circle cx="969.2" cy="468.7" r="0.8" fill="#fff" opacity="0.92"/><circle cx="736.9" cy="337.5" r="0.7" fill="#fff" opacity="0.91"/><circle cx="45.1" cy="197.5" r="1.3" fill="#fff" opacity="0.80"/><circle cx="181.8" cy="376.5" r="1.0" fill="#fff" opacity="0.75"/><circle cx="1295.0" cy="682.2" r="1.0" fill="#fff" opacity="0.63"/><circle cx="1199.1" cy="408.4" r="1.0" fill="#fff" opacity="0.53"/><circle cx="1697.6" cy="545.7" r="0.8" fill="#fff" opacity="0.77"/><circle cx="1466.1" cy="494.3" r="1.0" fill="#fff" opacity="0.78"/><circle cx="891.8" cy="346.8" r="0.8" fill="#fff" opacity="0.61"/><circle cx="740.8" cy="533.9" r="1.0" fill="#fff" opacity="0.64"/><circle cx="1866.2" cy="835.9" r="1.0" fill="#fff" opacity="0.89"/><circle cx="1293.3" cy="544.3" r="0.8" fill="#fff" opacity="0.77"/><circle cx="914.7" cy="219.1" r="0.9" fill="#fff" opacity="0.58"/><circle cx="1181.0" cy="393.6" r="0.7" fill="#fff" opacity="0.67"/><circle cx="657.6" cy="733.2" r="1.0" fill="#fff" opacity="0.91"/><circle cx="1035.1" cy="781.3" r="0.9" fill="#fff" opacity="0.78"/><circle cx="886.2" cy="712.1" r="1.0" fill="#fff" opacity="0.73"/><circle cx="903.5" cy="355.6" r="0.8" fill="#fff" opacity="0.49"/><circle cx="987.1" cy="1140.9" r="1.0" fill="#fff" opacity="0.39"/><circle cx="1884.8" cy="265.0" r="0.7" fill="#fff" opacity="0.81"/><circle cx="1034.9" cy="430.3" r="1.0" fill="#fff" opacity="0.62"/><circle cx="1520.0" cy="996.0" r="0.9" fill="#fff" opacity="0.65"/><circle cx="16.6" cy="628.5" r="0.9" fill="#fff" opacity="0.95"/><circle cx="1734.5" cy="318.8" r="0.7" fill="#fff" opacity="0.61"/><circle cx="1543.2" cy="646.7" r="1.0" fill="#fff" opacity="0.80"/><circle cx="168.1" cy="1001.2" r="0.8" fill="#fff" opacity="0.34"/><circle cx="1505.8" cy="278.1" r="0.7" fill="#fff" opacity="0.64"/><circle cx="600.9" cy="279.7" r="0.9" fill="#fff" opacity="0.63"/><circle cx="583.9" cy="356.1" r="0.7" fill="#fff" opacity="0.86"/><circle cx="300.6" cy="1097.0" r="1.0" fill="#fff" opacity="0.31"/><circle cx="1232.3" cy="59.2" r="1.0" fill="#fff" opacity="0.77"/><circle cx="1297.3" cy="938.5" r="0.7" fill="#fff" opacity="0.87"/><circle cx="658.6" cy="1046.3" r="0.7" fill="#fff" opacity="0.44"/><circle cx="238.6" cy="1138.6" r="0.7" fill="#fff" opacity="0.47"/><circle cx="827.6" cy="80.8" r="1.0" fill="#fff" opacity="0.46"/><circle cx="1812.0" cy="334.8" r="0.9" fill="#fff" opacity="0.60"/><circle cx="1270.0" cy="530.7" r="0.9" fill="#fff" opacity="0.78"/><circle cx="124.6" cy="442.8" r="1.0" fill="#fff" opacity="0.52"/><circle cx="1638.3" cy="233.5" r="0.7" fill="#fff" opacity="0.53"/><circle cx="1655.7" cy="664.9" r="0.9" fill="#fff" opacity="0.78"/><circle cx="989.4" cy="398.4" r="1.0" fill="#fff" opacity="0.50"/><circle cx="0.5" cy="1063.0" r="0.8" fill="#fff" opacity="0.32"/><circle cx="993.2" cy="29.8" r="0.8" fill="#fff" opacity="0.84"/><circle cx="1870.4" cy="536.7" r="1.0" fill="#fff" opacity="0.63"/><circle cx="975.6" cy="1119.8" r="0.7" fill="#fff" opacity="0.35"/><circle cx="240.9" cy="527.5" r="0.7" fill="#fff" opacity="0.70"/><circle cx="860.1" cy="29.2" r="0.7" fill="#fff" opacity="0.49"/><circle cx="1687.4" cy="1070.8" r="0.7" fill="#fff" opacity="0.23"/><circle cx="396.8" cy="1107.6" r="1.0" fill="#fff" opacity="0.38"/><circle cx="329.1" cy="1039.0" r="0.9" fill="#fff" opacity="0.42"/><circle cx="1306.3" cy="168.1" r="1.0" fill="#fff" opacity="0.57"/><circle cx="107.8" cy="120.9" r="0.7" fill="#fff" opacity="0.58"/><circle cx="1829.0" cy="722.4" r="0.9" fill="#fff" opacity="0.89"/><circle cx="726.7" cy="270.5" r="1.0" fill="#fff" opacity="0.79"/><circle cx="1273.5" cy="207.0" r="1.0" fill="#fff" opacity="0.83"/><circle cx="1382.1" cy="551.6" r="0.8" fill="#fff" opacity="0.56"/><circle cx="141.9" cy="1053.4" r="0.9" fill="#fff" opacity="0.23"/><circle cx="1755.7" cy="946.3" r="0.9" fill="#fff" opacity="0.51"/><circle cx="471.9" cy="282.6" r="1.0" fill="#fff" opacity="0.57"/><circle cx="1193.1" cy="721.7" r="0.8" fill="#fff" opacity="0.66"/><circle cx="712.8" cy="314.0" r="0.8" fill="#fff" opacity="0.50"/><circle cx="927.5" cy="1132.8" r="0.7" fill="#fff" opacity="0.25"/><circle cx="1666.8" cy="682.4" r="1.0" fill="#fff" opacity="0.74"/><circle cx="22.0" cy="440.9" r="0.7" fill="#fff" opacity="0.93"/><circle cx="1512.2" cy="1022.7" r="0.8" fill="#fff" opacity="0.30"/><circle cx="1861.0" cy="1035.8" r="1.0" fill="#fff" opacity="0.36"/><circle cx="256.5" cy="853.6" r="0.7" fill="#fff" opacity="0.62"/><circle cx="1560.6" cy="311.9" r="0.9" fill="#fff" opacity="0.72"/><circle cx="454.9" cy="747.7" r="0.7" fill="#fff" opacity="0.83"/><circle cx="456.4" cy="458.6" r="0.8" fill="#fff" opacity="0.46"/><circle cx="835.1" cy="1128.2" r="0.8" fill="#fff" opacity="0.40"/><circle cx="1451.6" cy="1148.0" r="0.8" fill="#fff" opacity="0.32"/><circle cx="1335.9" cy="562.6" r="0.9" fill="#fff" opacity="0.88"/><circle cx="332.3" cy="137.9" r="0.8" fill="#fff" opacity="0.62"/><circle cx="207.3" cy="423.9" r="0.8" fill="#fff" opacity="0.49"/><circle cx="1614.0" cy="688.2" r="0.8" fill="#fff" opacity="0.75"/><circle cx="160.3" cy="1059.7" r="0.9" fill="#fff" opacity="0.36"/><circle cx="535.1" cy="159.7" r="0.8" fill="#fff" opacity="0.52"/><circle cx="1548.0" cy="530.0" r="0.7" fill="#fff" opacity="0.62"/><circle cx="1316.4" cy="111.7" r="0.8" fill="#fff" opacity="0.89"/><circle cx="1436.6" cy="611.8" r="0.9" fill="#fff" opacity="0.50"/><circle cx="1819.1" cy="338.7" r="1.0" fill="#fff" opacity="0.83"/><circle cx="1821.8" cy="1098.9" r="1.0" fill="#fff" opacity="0.43"/></svg>
<div id="mb"><svg class="a" style="left:20px;top:2px" width="15" height="17" viewBox="0 0 170 200"><path fill="#000" d="M150 140c-4 10-8 19-14 27-8 11-16 22-28 22s-15-7-29-7-18 7-29 7S30 178 22 167C6 145-6 104 10 76c8-14 22-23 38-23 12 0 23 8 30 8s19-9 33-8c6 0 22 2 33 18-1 1-20 12-20 35 0 28 25 37 26 37zM112 33c6-8 11-19 10-30-9 0-21 6-28 14-6 7-11 18-10 29 11 1 21-6 28-13z"/></svg><span style="left:54.5px;font-weight:bold">Max</span><span style="left:101px;">File</span><span style="left:142.5px;">Edit</span><span style="left:185.5px;">View</span><span style="left:235.5px;">Object</span><span style="left:296.5px;">Arrange</span><span style="left:366px;">Options</span><span style="left:435px;">Debug</span><span style="left:496.5px;">Window</span><span style="left:566px;">Extras</span><span style="left:625px;">Help</span><svg class="a" style="left:1596px;top:3px" width="22" height="16"><path d="M2 1h18v11h-3M5 12H2V1" fill="none" stroke="#111" stroke-width="1.6"/><path d="M11 8l6 7H5z" fill="#111"/></svg><svg class="a" style="left:1627px;top:2px" width="21" height="18"><circle cx="11.5" cy="9.5" r="7" fill="none" stroke="#222" stroke-width="1.5"/><path d="M11.5 5v5l3 2" fill="none" stroke="#222" stroke-width="1.4"/><path d="M1 8l3.5 4 3.5-4z" fill="#222"/></svg><svg class="a" style="left:1662px;top:3px" width="12" height="17"><path d="M2 5l8 7-4 3V2l4 3-8 7" fill="none" stroke="#aaa" stroke-width="1.2"/></svg><svg class="a" style="left:1686px;top:4px" width="22" height="15"><path d="M1 4Q11-3 21 4L11 14z" fill="none" stroke="#111" stroke-width="1.6"/></svg><div class="a" style="left:1720px;top:3px;width:16px;height:16px;background:#111;border-radius:3px;color:#fff;font-size:13px;line-height:16px;text-align:center">A</div><svg class="a" style="left:1747px;top:3px" width="23" height="16"><path d="M1 5h4l5-4v14l-5-4H1z" fill="#111"/><path d="M13 5q2 3 0 6M16 3q4 5 0 10M19 1q6 7 0 14" fill="none" stroke="#111" stroke-width="1.4"/></svg><span style="left:1779px;font-size:14px">月 15:38</span><svg class="a" style="left:1848px;top:3px" width="17" height="17"><circle cx="6.5" cy="6.5" r="5" fill="none" stroke="#111" stroke-width="1.6"/><path d="M10 10l5 5" stroke="#111" stroke-width="1.8"/></svg><svg class="a" style="left:1879px;top:5px" width="19" height="13"><g fill="#111"><rect x="0" y="0" width="3" height="2.4"/><rect x="0" y="5" width="3" height="2.4"/><rect x="0" y="10" width="3" height="2.4"/><rect x="5" y="0" width="14" height="2.4"/><rect x="5" y="5" width="14" height="2.4"/><rect x="5" y="10" width="14" height="2.4"/></g></svg></div>
<div class="win" style="left:36px;top:36px;width:576px;height:516px;background:#333;overflow:hidden;border-radius:5px 5px 4px 4px"><div class="tb" style="background:linear-gradient(#ececec,#d3d3d3);color:#262626">ASL</div><div class="tl" style="left:8px;top:5px;background:#d6d6d6;border:1px solid #c0c0c0"></div><div class="tl" style="left:28px;top:5px;background:#fbb829;border:1px solid #df9c1a"></div><div class="tl" style="left:48px;top:5px;background:#29c33a;border:1px solid #1fa02c"></div><svg class="a" style="left:0;top:22px" width="576" height="494" viewBox="36 58 576 494"><path d="M323.7 151.4 C390.7 151.4 445.0 212.6 445.0 288.0 C445.0 377.0 381.6 449.2 303.3 449.2 C232.0 449.2 174.2 386.0 174.2 308.0 C174.2 221.5 241.1 151.4 323.7 151.4 Z" fill="none" stroke="#2ae82a" stroke-width="1.05"/><path d="M323.7 151.4 C370.5 151.4 408.5 223.3 408.5 312.0 C408.5 391.7 381.5 456.3 348.3 456.3 C304.8 456.3 269.5 381.0 269.5 288.0 C269.5 212.6 293.8 151.4 323.7 151.4 Z" fill="none" stroke="#d42020" stroke-width="1.2"/><ellipse cx="324" cy="312" rx="154" ry="25.8" fill="none" stroke="#1a1ae6" stroke-width="1.4"/><line x1="323.8" y1="136" x2="323.8" y2="305" stroke="#9a9a9a" stroke-width="1"/><line x1="323.8" y1="58" x2="323.8" y2="98" stroke="#2020e0" stroke-width="1.5"/><line x1="320.5" y1="98" x2="327" y2="98" stroke="#2020e0" stroke-width="1.2"/><path d="M323.8 105L317 136H331z" fill="#8a8a8a"/><line x1="36" y1="324" x2="123" y2="321.5" stroke="#e02020" stroke-width="1.4"/><line x1="115" y1="318.5" x2="115" y2="325" stroke="#e02020" stroke-width="1.2"/><path d="M123.7 321.3L158.7 310V327z" fill="#8a8a8a"/><line x1="158.7" y1="318.5" x2="323.8" y2="305" stroke="#9a9a9a" stroke-width="1.1"/><line x1="323.8" y1="305" x2="412" y2="332" stroke="#9a9a9a" stroke-width="1.1"/><line x1="370" y1="319" x2="412" y2="332" stroke="#3fae3f" stroke-width="1.1"/><path d="M413 335Q418 326 424 327.5L444 345.5H414z" fill="#8a8a8a"/><line x1="443" y1="345" x2="612" y2="400" stroke="#22dd22" stroke-width="1.3"/><rect x="446" y="343.5" width="5" height="5" fill="none" stroke="#22dd22" stroke-width="1.1"/><line x1="263.8" y1="203.8" x2="323" y2="304" stroke="#b4b4b4" stroke-width="2.8"/></svg></div>
<div class="win" style="left:658px;top:36px;width:986px;height:651px;background:#484848;overflow:hidden"><div class="tb" style="background:#f3f3f3;color:#acacac"><span style="display:inline-block;width:9px;height:10px;background:#9d9d9d;border-radius:1px;margin-right:6px;vertical-align:-1px"></span>GL_test01</div><div class="tl" style="left:8px;top:5px;background:#dedede;border:1px solid #cfcfcf"></div><div class="tl" style="left:28px;top:5px;background:#dedede;border:1px solid #cfcfcf"></div><div class="tl" style="left:48px;top:5px;background:#dedede;border:1px solid #cfcfcf"></div><div class="a" style="left:11px;top:8px;width:6px;height:6px;border-radius:50%;background:#5a5a5a"></div><div class="a" style="left:34px;top:56px;width:918px;height:561px;background:#dfdfdf"></div></div><svg class="a" style="left:0;top:0" width="1920" height="1200"><text x="666" y="79" font-size="11" fill="#6c6c6c" font-family="Liberation Sans">100%</text><path d="M699 72h6l-3 4z" fill="#6c6c6c"/><rect x="729" y="67" width="17" height="15" fill="none" stroke="#6b6b6b" stroke-width="1.3"/><line x1="729" y1="70" x2="746" y2="70" stroke="#6b6b6b" stroke-width="1.3"/><line x1="729" y1="79" x2="746" y2="79" stroke="#6b6b6b" stroke-width="1.3"/><path d="M776 67.5h-15v15h15" fill="none" stroke="#6b6b6b" stroke-width="1.3"/><text x="768" y="78" font-size="8" fill="#6b6b6b" text-anchor="middle" font-family="Liberation Sans">m</text><path d="M788.0 69h17v10h-7l-3 4-2-4h-5z" fill="#6b6b6b"/><rect x="817" y="67.5" width="16" height="15" fill="none" stroke="#6b6b6b" stroke-width="1.3"/><path d="M819 69.5l12 11M831 69.5l-12 11" stroke="#6b6b6b" stroke-width="1.2"/><rect x="846.5" y="67.5" width="16" height="15" fill="none" stroke="#6b6b6b" stroke-width="1.3"/><circle cx="854.5" cy="75" r="4" fill="none" stroke="#6b6b6b" stroke-width="1.6"/><path d="M851.5 87h6l-3 3z" fill="#6b6b6b"/><rect x="875.5" y="67.5" width="16" height="15" fill="none" stroke="#6b6b6b" stroke-width="1.3"/><path d="M879.5 71l6 4-6 4z" fill="#6b6b6b"/><path d="M880.5 87h6l-3 3z" fill="#6b6b6b"/><rect x="904" y="67.5" width="16" height="15" fill="none" stroke="#6b6b6b" stroke-width="1.3"/><line x1="904" y1="75" x2="920" y2="75" stroke="#6b6b6b" stroke-width="1.6"/><path d="M909 87h6l-3 3z" fill="#6b6b6b"/><path d="M936.5 81A7.5 7.5 0 1 1 946.5 81" fill="none" stroke="#6b6b6b" stroke-width="1.8"/><line x1="941.5" y1="76" x2="945.5" y2="70" stroke="#6b6b6b" stroke-width="1.6"/><path d="M938.5 87h6l-3 3z" fill="#6b6b6b"/><path d="M970.5 68v14M963.5 75h14" stroke="#6b6b6b" stroke-width="2.4"/><path d="M967.5 87h6l-3 3z" fill="#6b6b6b"/><path d="M1009 76l8 -6 7 7-8 6z" fill="#6b6b6b"/><path d="M1025 76q2 3 0 5q-2-2 0-5z" fill="#6b6b6b"/><rect x="1587" y="67.0" width="2" height="2.5" fill="#6b6b6b"/><rect x="1590" y="67.0" width="2" height="2.5" fill="#6b6b6b"/><rect x="1593" y="67.0" width="2" height="2.5" fill="#6b6b6b"/><rect x="1596" y="67.0" width="2" height="2.5" fill="#6b6b6b"/><rect x="1599" y="67.0" width="2" height="2.5" fill="#6b6b6b"/><rect x="1602" y="67.0" width="2" height="2.5" fill="#6b6b6b"/><rect x="1605" y="67.0" width="2" height="2.5" fill="#6b6b6b"/><rect x="1587" y="70.6" width="2" height="2.5" fill="#6b6b6b"/><rect x="1590" y="70.6" width="2" height="2.5" fill="#6b6b6b"/><rect x="1593" y="70.6" width="2" height="2.5" fill="#6b6b6b"/><rect x="1596" y="70.6" width="2" height="2.5" fill="#6b6b6b"/><rect x="1599" y="70.6" width="2" height="2.5" fill="#6b6b6b"/><rect x="1602" y="70.6" width="2" height="2.5" fill="#6b6b6b"/><rect x="1605" y="70.6" width="2" height="2.5" fill="#6b6b6b"/><rect x="1587" y="74.2" width="2" height="2.5" fill="#6b6b6b"/><rect x="1590" y="74.2" width="2" height="2.5" fill="#6b6b6b"/><rect x="1593" y="74.2" width="2" height="2.5" fill="#6b6b6b"/><rect x="1596" y="74.2" width="2" height="2.5" fill="#6b6b6b"/><rect x="1599" y="74.2" width="2" height="2.5" fill="#6b6b6b"/><rect x="1602" y="74.2" width="2" height="2.5" fill="#6b6b6b"/><rect x="1605" y="74.2" width="2" height="2.5" fill="#6b6b6b"/><rect x="1587" y="77.8" width="2" height="2.5" fill="#6b6b6b"/><rect x="1590" y="77.8" width="2" height="2.5" fill="#6b6b6b"/><rect x="1593" y="77.8" width="2" height="2.5" fill="#6b6b6b"/><rect x="1596" y="77.8" width="2" height="2.5" fill="#6b6b6b"/><rect x="1599" y="77.8" width="2" height="2.5" fill="#6b6b6b"/><rect x="1602" y="77.8" width="2" height="2.5" fill="#6b6b6b"/><rect x="1605" y="77.8" width="2" height="2.5" fill="#6b6b6b"/><rect x="1587" y="81.4" width="2" height="2.5" fill="#6b6b6b"/><rect x="1590" y="81.4" width="2" height="2.5" fill="#6b6b6b"/><rect x="1593" y="81.4" width="2" height="2.5" fill="#6b6b6b"/><path d="M675 171.5l7 3.5v8L675 187l-7-3.5v-8z" fill="#666"/><path d="M668 175l7 3.5 7-3.5M675 178.5v8.5" stroke="#464646" stroke-width="1" fill="none"/><circle cx="675" cy="216" r="7" fill="none" stroke="#666" stroke-width="1.6"/><circle cx="675" cy="216" r="3.2" fill="none" stroke="#666" stroke-width="1.6"/><rect x="667" y="248" width="16" height="11" fill="none" stroke="#666" stroke-width="1.6"/><line x1="667" y1="251" x2="683" y2="251" stroke="#666" stroke-width="1.4"/><path d="M675 282v11" stroke="#666" stroke-width="1.5"/><ellipse cx="673" cy="294" rx="3" ry="2.3" fill="#666"/><path d="M675 282q5 2 4 7" fill="none" stroke="#666" stroke-width="1.4"/><path d="M668 320v14M682 320v14" stroke="#666" stroke-width="2" stroke-dasharray="2 2"/><path d="M672 323l6 4-6 4z" fill="#666"/><rect x="667" y="357" width="16" height="14" fill="none" stroke="#666" stroke-width="1.4"/><path d="M668 370l4-6 3 3 3-5 4 8z" fill="#666"/><path d="M669 397l8 8a3 3 0 0 1-4 4l-9-9a2 2 0 0 1 3-3l7 7" fill="none" stroke="#666" stroke-width="1.6"/><path d="M676 432a6 6 0 0 0 0 12z" fill="#666"/><path d="M666 438h3M676 435h5M676 441h5" stroke="#666" stroke-width="1.8"/><circle cx="675" cy="475" r="8" fill="#666"/><text x="675" y="478.5" font-size="11" font-style="italic" font-weight="bold" fill="#464646" text-anchor="middle" font-family="Liberation Serif">v</text><circle cx="675" cy="512" r="8" fill="#666"/><text x="675" y="516" font-size="12" font-style="italic" font-weight="bold" fill="#464646" text-anchor="middle" font-family="Liberation Serif">b</text><path d="M675 541l2.4 5.2 5.6.6-4.2 3.8 1.2 5.6-5-2.9-5 2.9 1.2-5.6-4.2-3.8 5.6-.6z" fill="#666"/><circle cx="1625" cy="174" r="5.5" fill="none" stroke="#666" stroke-width="2"/><path d="M1629 178l5 5" stroke="#666" stroke-width="2.4"/><circle cx="1627" cy="222" r="8" fill="#666"/><text x="1627" y="226" font-size="12" font-style="italic" font-weight="bold" fill="#464646" text-anchor="middle" font-family="Liberation Serif">i</text><rect x="1619" y="262" width="7" height="12" fill="#666"/><rect x="1628" y="262" width="7" height="12" fill="#666"/><rect x="1619" y="307" width="16" height="1.6" fill="#666"/><rect x="1619" y="310" width="16" height="1.6" fill="#666"/><rect x="1619" y="313" width="16" height="1.6" fill="#666"/><rect x="1619" y="316" width="16" height="1.6" fill="#666"/><rect x="1619" y="319" width="16" height="1.6" fill="#666"/><rect x="1619" y="322" width="16" height="1.6" fill="#666"/><rect x="1619" y="389" width="16" height="12" rx="2" fill="none" stroke="#666" stroke-width="1.8"/><circle cx="1627" cy="395" r="3" fill="none" stroke="#666" stroke-width="1.6"/><rect x="1624" y="386" width="6" height="3" fill="#666"/><path d="M1622 432v16M1627 432v16M1632 432v16" stroke="#666" stroke-width="1.6"/><rect x="1619.5" y="441" width="5" height="3" fill="#666"/><rect x="1624.5" y="436" width="5" height="3" fill="#666"/><rect x="1629.5" y="442" width="5" height="3" fill="#666"/><rect x="669" y="669" width="12" height="9" rx="1" fill="#666"/><path d="M671.5 669v-3a3.5 3.5 0 0 1 7 0v3" fill="none" stroke="#666" stroke-width="1.8"/><path d="M712 663h-13v13h6" fill="none" stroke="#666" stroke-width="1.6"/><path d="M704 668l9 4-4 1 3 4-2 1-3-4-3 3z" fill="#666"/><rect x="743" y="663" width="18" height="10" fill="#666"/><path d="M752 673l-5 6M752 673l5 6" stroke="#666" stroke-width="1.6"/><rect x="790" y="664" width="11" height="8" fill="#666"/><rect x="795" y="669" width="11" height="8" fill="#666" stroke="#484848" stroke-width="1"/><path d="M840 662v16M844 662v16M848 662v16M836 666h16M836 670h16M836 674h16" stroke="#666" stroke-width="1.2"/><path d="M882 668l7 7a2.5 2.5 0 0 1-4 3l-7-7a2 2 0 0 1 3-3l5 5" fill="none" stroke="#666" stroke-width="1.6"/><path d="M894 661v7M890.5 664.5h7" stroke="#666" stroke-width="1.5"/><path d="M929 677l9-9" stroke="#666" stroke-width="2.8" stroke-linecap="round"/><path d="M937.5 663.5a4 4 0 1 0 5 5l-2.5-.5-2-2z" fill="#666"/><rect x="974" y="663" width="4" height="15" fill="#666"/><rect x="979.5" y="663" width="4" height="15" fill="#666"/><rect x="985" y="663" width="4" height="15" fill="#666"/><rect x="989.5" y="663" width="2" height="15" fill="#666"/><rect x="1019.0" y="664.0" width="2.2" height="2" fill="#666"/><rect x="1022.2" y="664.0" width="2.2" height="2" fill="#666"/><rect x="1025.4" y="664.0" width="2.2" height="2" fill="#666"/><rect x="1028.6" y="664.0" width="2.2" height="2" fill="#666"/><rect x="1031.8" y="664.0" width="2.2" height="2" fill="#666"/><rect x="1035.0" y="664.0" width="2.2" height="2" fill="#666"/><rect x="1019.0" y="667.5" width="2.2" height="2" fill="#666"/><rect x="1022.2" y="667.5" width="2.2" height="2" fill="#666"/><rect x="1025.4" y="667.5" width="2.2" height="2" fill="#666"/><rect x="1028.6" y="667.5" width="2.2" height="2" fill="#666"/><rect x="1031.8" y="667.5" width="2.2" height="2" fill="#666"/><rect x="1035.0" y="667.5" width="2.2" height="2" fill="#666"/><rect x="1019.0" y="671.0" width="2.2" height="2" fill="#666"/><rect x="1022.2" y="671.0" width="2.2" height="2" fill="#666"/><rect x="1025.4" y="671.0" width="2.2" height="2" fill="#666"/><rect x="1028.6" y="671.0" width="2.2" height="2" fill="#666"/><rect x="1031.8" y="671.0" width="2.2" height="2" fill="#666"/><rect x="1035.0" y="671.0" width="2.2" height="2" fill="#666"/><rect x="1020" y="675" width="16" height="2" fill="#666"/><circle cx="1575" cy="670" r="9.5" fill="none" stroke="#666" stroke-width="3" stroke-dasharray="13 2"/><path d="M1572 665.5l7 4.5-7 4.5z" fill="#666"/><path d="M1623 666A6.5 6.5 0 1 0 1631 666" fill="none" stroke="#666" stroke-width="2"/><path d="M1627 661v8" stroke="#666" stroke-width="2"/><rect x="1617.5" y="542" width="7.5" height="108" fill="#6c6c6c"/><rect x="1617.5" y="565" width="7.5" height="1" fill="#3e3e3e"/><rect x="1617.5" y="568.95" width="7.5" height="1" fill="#3e3e3e"/><rect x="1617.5" y="572.9000000000001" width="7.5" height="1" fill="#3e3e3e"/><rect x="1617.5" y="576.8500000000001" width="7.5" height="1" fill="#3e3e3e"/><rect x="1617.5" y="580.8000000000002" width="7.5" height="1" fill="#3e3e3e"/><rect x="1617.5" y="584.7500000000002" width="7.5" height="1" fill="#3e3e3e"/><rect x="1617.5" y="588.7000000000003" width="7.5" height="1" fill="#3e3e3e"/><rect x="1617.5" y="592.6500000000003" width="7.5" height="1" fill="#3e3e3e"/><rect x="1617.5" y="596.6000000000004" width="7.5" height="1" fill="#3e3e3e"/><rect x="1617.5" y="600.5500000000004" width="7.5" height="1" fill="#3e3e3e"/><rect x="1617.5" y="604.5000000000005" width="7.5" height="1" fill="#3e3e3e"/><rect x="1617.5" y="608.4500000000005" width="7.5" height="1" fill="#3e3e3e"/><rect x="1617.5" y="612.4000000000005" width="7.5" height="1" fill="#3e3e3e"/><rect x="1617.5" y="616.3500000000006" width="7.5" height="1" fill="#3e3e3e"/><rect x="1617.5" y="620.3000000000006" width="7.5" height="1" fill="#3e3e3e"/><rect x="1617.5" y="624.2500000000007" width="7.5" height="1" fill="#3e3e3e"/><rect x="1617.5" y="628.2000000000007" width="7.5" height="1" fill="#3e3e3e"/><rect x="1617.5" y="632.1500000000008" width="7.5" height="1" fill="#3e3e3e"/><rect x="1617.5" y="636.1000000000008" width="7.5" height="1" fill="#3e3e3e"/><rect x="1617.5" y="640.0500000000009" width="7.5" height="1" fill="#3e3e3e"/><rect x="1617.5" y="644.0000000000009" width="7.5" height="1" fill="#3e3e3e"/><rect x="1617.5" y="647.950000000001" width="7.5" height="1" fill="#3e3e3e"/><rect x="1629" y="542" width="7.5" height="108" fill="#6c6c6c"/><rect x="1629" y="565" width="7.5" height="1" fill="#3e3e3e"/><rect x="1629" y="568.95" width="7.5" height="1" fill="#3e3e3e"/><rect x="1629" y="572.9000000000001" width="7.5" height="1" fill="#3e3e3e"/><rect x="1629" y="576.8500000000001" width="7.5" height="1" fill="#3e3e3e"/><rect x="1629" y="580.8000000000002" width="7.5" height="1" fill="#3e3e3e"/><rect x="1629" y="584.7500000000002" width="7.5" height="1" fill="#3e3e3e"/><rect x="1629" y="588.7000000000003" width="7.5" height="1" fill="#3e3e3e"/><rect x="1629" y="592.6500000000003" width="7.5" height="1" fill="#3e3e3e"/><rect x="1629" y="596.6000000000004" width="7.5" height="1" fill="#3e3e3e"/><rect x="1629" y="600.5500000000004" width="7.5" height="1" fill="#3e3e3e"/><rect x="1629" y="604.5000000000005" width="7.5" height="1" fill="#3e3e3e"/><rect x="1629" y="608.4500000000005" width="7.5" height="1" fill="#3e3e3e"/><rect x="1629" y="612.4000000000005" width="7.5" height="1" fill="#3e3e3e"/><rect x="1629" y="616.3500000000006" width="7.5" height="1" fill="#3e3e3e"/><rect x="1629" y="620.3000000000006" width="7.5" height="1" fill="#3e3e3e"/><rect x="1629" y="624.2500000000007" width="7.5" height="1" fill="#3e3e3e"/><rect x="1629" y="628.2000000000007" width="7.5" height="1" fill="#3e3e3e"/><rect x="1629" y="632.1500000000008" width="7.5" height="1" fill="#3e3e3e"/><rect x="1629" y="636.1000000000008" width="7.5" height="1" fill="#3e3e3e"/><rect x="1629" y="640.0500000000009" width="7.5" height="1" fill="#3e3e3e"/><rect x="1629" y="644.0000000000009" width="7.5" height="1" fill="#3e3e3e"/><rect x="1629" y="647.950000000001" width="7.5" height="1" fill="#3e3e3e"/></svg>
<div class="win" style="left:81px;top:586px;width:498px;height:471px;background:#484848;overflow:hidden"><div class="tb" style="background:linear-gradient(#f0f0f0,#d9d9d9);color:#8e8e8e">[offset_add]</div><div class="tl" style="left:8px;top:5px;background:#cccccc;border:1px solid #b9b9b9"></div><div class="tl" style="left:28px;top:5px;background:#cccccc;border:1px solid #b9b9b9"></div><div class="tl" style="left:48px;top:5px;background:#cccccc;border:1px solid #b9b9b9"></div><div class="a" style="left:34px;top:56px;width:430px;height:381px;background:#dfdfdf"></div></div><svg class="a" style="left:0;top:0" width="1920" height="1200"><text x="89" y="629" font-size="11" fill="#6c6c6c" font-family="Liberation Sans">100%</text><path d="M122 622h6l-3 4z" fill="#6c6c6c"/><rect x="152" y="617" width="17" height="15" fill="none" stroke="#6b6b6b" stroke-width="1.3"/><line x1="152" y1="620" x2="169" y2="620" stroke="#6b6b6b" stroke-width="1.3"/><line x1="152" y1="629" x2="169" y2="629" stroke="#6b6b6b" stroke-width="1.3"/><path d="M199 617.5h-15v15h15" fill="none" stroke="#6b6b6b" stroke-width="1.3"/><text x="191" y="628" font-size="8" fill="#6b6b6b" text-anchor="middle" font-family="Liberation Sans">m</text><path d="M211.0 619h17v10h-7l-3 4-2-4h-5z" fill="#6b6b6b"/><rect x="240" y="617.5" width="16" height="15" fill="none" stroke="#6b6b6b" stroke-width="1.3"/><path d="M242 619.5l12 11M254 619.5l-12 11" stroke="#6b6b6b" stroke-width="1.2"/><rect x="269.5" y="617.5" width="16" height="15" fill="none" stroke="#6b6b6b" stroke-width="1.3"/><circle cx="277.5" cy="625" r="4" fill="none" stroke="#6b6b6b" stroke-width="1.6"/><path d="M274.5 637h6l-3 3z" fill="#6b6b6b"/><rect x="298.5" y="617.5" width="16" height="15" fill="none" stroke="#6b6b6b" stroke-width="1.3"/><path d="M302.5 621l6 4-6 4z" fill="#6b6b6b"/><path d="M303.5 637h6l-3 3z" fill="#6b6b6b"/><rect x="327" y="617.5" width="16" height="15" fill="none" stroke="#6b6b6b" stroke-width="1.3"/><line x1="327" y1="625" x2="343" y2="625" stroke="#6b6b6b" stroke-width="1.6"/><path d="M332 637h6l-3 3z" fill="#6b6b6b"/><path d="M359.5 631A7.5 7.5 0 1 1 369.5 631" fill="none" stroke="#6b6b6b" stroke-width="1.8"/><line x1="364.5" y1="626" x2="368.5" y2="620" stroke="#6b6b6b" stroke-width="1.6"/><path d="M361.5 637h6l-3 3z" fill="#6b6b6b"/><path d="M393.5 618v14M386.5 625h14" stroke="#6b6b6b" stroke-width="2.4"/><path d="M390.5 637h6l-3 3z" fill="#6b6b6b"/><path d="M432 626l8 -6 7 7-8 6z" fill="#6b6b6b"/><path d="M448 626q2 3 0 5q-2-2 0-5z" fill="#6b6b6b"/><rect x="522" y="617.0" width="2" height="2.5" fill="#6b6b6b"/><rect x="525" y="617.0" width="2" height="2.5" fill="#6b6b6b"/><rect x="528" y="617.0" width="2" height="2.5" fill="#6b6b6b"/><rect x="531" y="617.0" width="2" height="2.5" fill="#6b6b6b"/><rect x="534" y="617.0" width="2" height="2.5" fill="#6b6b6b"/><rect x="537" y="617.0" width="2" height="2.5" fill="#6b6b6b"/><rect x="540" y="617.0" width="2" height="2.5" fill="#6b6b6b"/><rect x="522" y="620.6" width="2" height="2.5" fill="#6b6b6b"/><rect x="525" y="620.6" width="2" height="2.5" fill="#6b6b6b"/><rect x="528" y="620.6" width="2" height="2.5" fill="#6b6b6b"/><rect x="531" y="620.6" width="2" height="2.5" fill="#6b6b6b"/><rect x="534" y="620.6" width="2" height="2.5" fill="#6b6b6b"/><rect x="537" y="620.6" width="2" height="2.5" fill="#6b6b6b"/><rect x="540" y="620.6" width="2" height="2.5" fill="#6b6b6b"/><rect x="522" y="624.2" width="2" height="2.5" fill="#6b6b6b"/><rect x="525" y="624.2" width="2" height="2.5" fill="#6b6b6b"/><rect x="528" y="624.2" width="2" height="2.5" fill="#6b6b6b"/><rect x="531" y="624.2" width="2" height="2.5" fill="#6b6b6b"/><rect x="534" y="624.2" width="2" height="2.5" fill="#6b6b6b"/><rect x="537" y="624.2" width="2" height="2.5" fill="#6b6b6b"/><rect x="540" y="624.2" width="2" height="2.5" fill="#6b6b6b"/><rect x="522" y="627.8" width="2" height="2.5" fill="#6b6b6b"/><rect x="525" y="627.8" width="2" height="2.5" fill="#6b6b6b"/><rect x="528" y="627.8" width="2" height="2.5" fill="#6b6b6b"/><rect x="531" y="627.8" width="2" height="2.5" fill="#6b6b6b"/><rect x="534" y="627.8" width="2" height="2.5" fill="#6b6b6b"/><rect x="537" y="627.8" width="2" height="2.5" fill="#6b6b6b"/><rect x="540" y="627.8" width="2" height="2.5" fill="#6b6b6b"/><rect x="522" y="631.4" width="2" height="2.5" fill="#6b6b6b"/><rect x="525" y="631.4" width="2" height="2.5" fill="#6b6b6b"/><rect x="528" y="631.4" width="2" height="2.5" fill="#6b6b6b"/><path d="M98 651.5l7 3.5v8L98 667l-7-3.5v-8z" fill="#666"/><path d="M91 655l7 3.5 7-3.5M98 658.5v8.5" stroke="#464646" stroke-width="1" fill="none"/><circle cx="98" cy="691" r="7" fill="none" stroke="#666" stroke-width="1.6"/><circle cx="98" cy="691" r="3.2" fill="none" stroke="#666" stroke-width="1.6"/><rect x="90" y="718" width="16" height="11" fill="none" stroke="#666" stroke-width="1.6"/><line x1="90" y1="721" x2="106" y2="721" stroke="#666" stroke-width="1.4"/><path d="M98 747v11" stroke="#666" stroke-width="1.5"/><ellipse cx="96" cy="759" rx="3" ry="2.3" fill="#666"/><path d="M98 747q5 2 4 7" fill="none" stroke="#666" stroke-width="1.4"/><path d="M91 780v14M105 780v14" stroke="#666" stroke-width="2" stroke-dasharray="2 2"/><path d="M95 783l6 4-6 4z" fill="#666"/><rect x="90" y="812" width="16" height="14" fill="none" stroke="#666" stroke-width="1.4"/><path d="M91 825l4-6 3 3 3-5 4 8z" fill="#666"/><path d="M92 847l8 8a3 3 0 0 1-4 4l-9-9a2 2 0 0 1 3-3l7 7" fill="none" stroke="#666" stroke-width="1.6"/><path d="M99 877a6 6 0 0 0 0 12z" fill="#666"/><path d="M89 883h3M99 880h5M99 886h5" stroke="#666" stroke-width="1.8"/><circle cx="98" cy="915" r="8" fill="#666"/><text x="98" y="918.5" font-size="11" font-style="italic" font-weight="bold" fill="#464646" text-anchor="middle" font-family="Liberation Serif">v</text><circle cx="98" cy="947" r="8" fill="#666"/><text x="98" y="951" font-size="12" font-style="italic" font-weight="bold" fill="#464646" text-anchor="middle" font-family="Liberation Serif">b</text><path d="M98 971l2.4 5.2 5.6.6-4.2 3.8 1.2 5.6-5-2.9-5 2.9 1.2-5.6-4.2-3.8 5.6-.6z" fill="#666"/><circle cx="561" cy="658" r="5.5" fill="none" stroke="#666" stroke-width="2"/><path d="M565 662l5 5" stroke="#666" stroke-width="2.4"/><circle cx="563" cy="700" r="8" fill="#666"/><text x="563" y="704" font-size="12" font-style="italic" font-weight="bold" fill="#464646" text-anchor="middle" font-family="Liberation Serif">i</text><rect x="555" y="734" width="7" height="12" fill="#666"/><rect x="564" y="734" width="7" height="12" fill="#666"/><rect x="555" y="773" width="16" height="1.6" fill="#666"/><rect x="555" y="776" width="16" height="1.6" fill="#666"/><rect x="555" y="779" width="16" height="1.6" fill="#666"/><rect x="555" y="782" width="16" height="1.6" fill="#666"/><rect x="555" y="785" width="16" height="1.6" fill="#666"/><rect x="555" y="788" width="16" height="1.6" fill="#666"/><rect x="555" y="838" width="16" height="12" rx="2" fill="none" stroke="#666" stroke-width="1.8"/><circle cx="563" cy="844" r="3" fill="none" stroke="#666" stroke-width="1.6"/><rect x="560" y="835" width="6" height="3" fill="#666"/><path d="M558 875v16M563 875v16M568 875v16" stroke="#666" stroke-width="1.6"/><rect x="555.5" y="884" width="5" height="3" fill="#666"/><rect x="560.5" y="879" width="5" height="3" fill="#666"/><rect x="565.5" y="885" width="5" height="3" fill="#666"/><rect x="91" y="1039" width="12" height="9" rx="1" fill="#666"/><path d="M93.5 1039v-3a3.5 3.5 0 0 1 7 0v3" fill="none" stroke="#666" stroke-width="1.8"/><path d="M135 1033h-13v13h6" fill="none" stroke="#666" stroke-width="1.6"/><path d="M127 1038l9 4-4 1 3 4-2 1-3-4-3 3z" fill="#666"/><rect x="166" y="1033" width="18" height="10" fill="#666"/><path d="M175 1043l-5 6M175 1043l5 6" stroke="#666" stroke-width="1.6"/><rect x="213" y="1034" width="11" height="8" fill="#666"/><rect x="218" y="1039" width="11" height="8" fill="#666" stroke="#484848" stroke-width="1"/><path d="M263 1032v16M267 1032v16M271 1032v16M259 1036h16M259 1040h16M259 1044h16" stroke="#666" stroke-width="1.2"/><path d="M305 1038l7 7a2.5 2.5 0 0 1-4 3l-7-7a2 2 0 0 1 3-3l5 5" fill="none" stroke="#666" stroke-width="1.6"/><path d="M317 1031v7M313.5 1034.5h7" stroke="#666" stroke-width="1.5"/><path d="M352 1047l9-9" stroke="#666" stroke-width="2.8" stroke-linecap="round"/><path d="M360.5 1033.5a4 4 0 1 0 5 5l-2.5-.5-2-2z" fill="#666"/><rect x="397" y="1033" width="4" height="15" fill="#666"/><rect x="402.5" y="1033" width="4" height="15" fill="#666"/><rect x="408" y="1033" width="4" height="15" fill="#666"/><rect x="412.5" y="1033" width="2" height="15" fill="#666"/><rect x="442.0" y="1034.0" width="2.2" height="2" fill="#666"/><rect x="445.2" y="1034.0" width="2.2" height="2" fill="#666"/><rect x="448.4" y="1034.0" width="2.2" height="2" fill="#666"/><rect x="451.6" y="1034.0" width="2.2" height="2" fill="#666"/><rect x="454.8" y="1034.0" width="2.2" height="2" fill="#666"/><rect x="458.0" y="1034.0" width="2.2" height="2" fill="#666"/><rect x="442.0" y="1037.5" width="2.2" height="2" fill="#666"/><rect x="445.2" y="1037.5" width="2.2" height="2" fill="#666"/><rect x="448.4" y="1037.5" width="2.2" height="2" fill="#666"/><rect x="451.6" y="1037.5" width="2.2" height="2" fill="#666"/><rect x="454.8" y="1037.5" width="2.2" height="2" fill="#666"/><rect x="458.0" y="1037.5" width="2.2" height="2" fill="#666"/><rect x="442.0" y="1041.0" width="2.2" height="2" fill="#666"/><rect x="445.2" y="1041.0" width="2.2" height="2" fill="#666"/><rect x="448.4" y="1041.0" width="2.2" height="2" fill="#666"/><rect x="451.6" y="1041.0" width="2.2" height="2" fill="#666"/><rect x="454.8" y="1041.0" width="2.2" height="2" fill="#666"/><rect x="458.0" y="1041.0" width="2.2" height="2" fill="#666"/><rect x="443" y="1045" width="16" height="2" fill="#666"/><circle cx="511" cy="1040" r="9.5" fill="none" stroke="#666" stroke-width="3" stroke-dasharray="13 2"/><path d="M508 1035.5l7 4.5-7 4.5z" fill="#666"/><path d="M559 1036A6.5 6.5 0 1 0 567 1036" fill="none" stroke="#666" stroke-width="2"/><path d="M563 1031v8" stroke="#666" stroke-width="2"/><rect x="554" y="912" width="7.5" height="108" fill="#6c6c6c"/><rect x="554" y="935" width="7.5" height="1" fill="#3e3e3e"/><rect x="554" y="938.95" width="7.5" height="1" fill="#3e3e3e"/><rect x="554" y="942.9000000000001" width="7.5" height="1" fill="#3e3e3e"/><rect x="554" y="946.8500000000001" width="7.5" height="1" fill="#3e3e3e"/><rect x="554" y="950.8000000000002" width="7.5" height="1" fill="#3e3e3e"/><rect x="554" y="954.7500000000002" width="7.5" height="1" fill="#3e3e3e"/><rect x="554" y="958.7000000000003" width="7.5" height="1" fill="#3e3e3e"/><rect x="554" y="962.6500000000003" width="7.5" height="1" fill="#3e3e3e"/><rect x="554" y="966.6000000000004" width="7.5" height="1" fill="#3e3e3e"/><rect x="554" y="970.5500000000004" width="7.5" height="1" fill="#3e3e3e"/><rect x="554" y="974.5000000000005" width="7.5" height="1" fill="#3e3e3e"/><rect x="554" y="978.4500000000005" width="7.5" height="1" fill="#3e3e3e"/><rect x="554" y="982.4000000000005" width="7.5" height="1" fill="#3e3e3e"/><rect x="554" y="986.3500000000006" width="7.5" height="1" fill="#3e3e3e"/><rect x="554" y="990.3000000000006" width="7.5" height="1" fill="#3e3e3e"/><rect x="554" y="994.2500000000007" width="7.5" height="1" fill="#3e3e3e"/><rect x="554" y="998.2000000000007" width="7.5" height="1" fill="#3e3e3e"/><rect x="554" y="1002.1500000000008" width="7.5" height="1" fill="#3e3e3e"/><rect x="554" y="1006.1000000000008" width="7.5" height="1" fill="#3e3e3e"/><rect x="554" y="1010.0500000000009" width="7.5" height="1" fill="#3e3e3e"/><rect x="554" y="1014.0000000000009" width="7.5" height="1" fill="#3e3e3e"/><rect x="554" y="1017.950000000001" width="7.5" height="1" fill="#3e3e3e"/><rect x="564.8" y="912" width="7.5" height="108" fill="#6c6c6c"/><rect x="564.8" y="935" width="7.5" height="1" fill="#3e3e3e"/><rect x="564.8" y="938.95" width="7.5" height="1" fill="#3e3e3e"/><rect x="564.8" y="942.9000000000001" width="7.5" height="1" fill="#3e3e3e"/><rect x="564.8" y="946.8500000000001" width="7.5" height="1" fill="#3e3e3e"/><rect x="564.8" y="950.8000000000002" width="7.5" height="1" fill="#3e3e3e"/><rect x="564.8" y="954.7500000000002" width="7.5" height="1" fill="#3e3e3e"/><rect x="564.8" y="958.7000000000003" width="7.5" height="1" fill="#3e3e3e"/><rect x="564.8" y="962.6500000000003" width="7.5" height="1" fill="#3e3e3e"/><rect x="564.8" y="966.6000000000004" width="7.5" height="1" fill="#3e3e3e"/><rect x="564.8" y="970.5500000000004" width="7.5" height="1" fill="#3e3e3e"/><rect x="564.8" y="974.5000000000005" width="7.5" height="1" fill="#3e3e3e"/><rect x="564.8" y="978.4500000000005" width="7.5" height="1" fill="#3e3e3e"/><rect x="564.8" y="982.4000000000005" width="7.5" height="1" fill="#3e3e3e"/><rect x="564.8" y="986.3500000000006" width="7.5" height="1" fill="#3e3e3e"/><rect x="564.8" y="990.3000000000006" width="7.5" height="1" fill="#3e3e3e"/><rect x="564.8" y="994.2500000000007" width="7.5" height="1" fill="#3e3e3e"/><rect x="564.8" y="998.2000000000007" width="7.5" height="1" fill="#3e3e3e"/><rect x="564.8" y="1002.1500000000008" width="7.5" height="1" fill="#3e3e3e"/><rect x="564.8" y="1006.1000000000008" width="7.5" height="1" fill="#3e3e3e"/><rect x="564.8" y="1010.0500000000009" width="7.5" height="1" fill="#3e3e3e"/><rect x="564.8" y="1014.0000000000009" width="7.5" height="1" fill="#3e3e3e"/><rect x="564.8" y="1017.950000000001" width="7.5" height="1" fill="#3e3e3e"/></svg>
<svg class="a" style="left:0;top:0" width="1920" height="1200"><g fill="none" stroke="#8e8e8e" stroke-width="3.3"><path d="M730 127 C730 139 730 123 730 135"/><path d="M730 199 C730 211 730 196 730 208"/><path d="M730 229 C730 241 730 226 730 238"/><path d="M730 258 C730 270 730 256 730 268"/><path d="M730 288 C730 300 730 289 730 301"/><path d="M822 157 C822 169 822 152 822 164"/><path d="M822 184 C822 196 822 181 822 193"/><path d="M822 213 C822 236.2 822 229.8 822 253"/><path d="M838 239 C838 251 822 241 822 253"/><path d="M990 142 C990 154 990 142 990 154"/><path d="M990 142 C990 154 1025 142 1025 154"/><path d="M990 175 C990 187 939 178 939 190"/><path d="M990 175 C990 187 990 178 990 190"/><path d="M1025 175 C1025 187 1041 178 1041 190"/><path d="M939 210 C939 222 986 207 986 219"/><path d="M990 210 C990 222 1032 207 1032 219"/><path d="M1041 210 C1041 222 1078 207 1078 219"/><path d="M939 239 C939 251 939 235 939 247"/><path d="M1126 133 C1126 145 1126 132 1126 144"/><path d="M1126 164 C1126 180.24 1126 175.76 1126 192"/><path d="M1126 164 C1126 176 1211 158 1211 170"/><path d="M1211 190 C1211 202 1211 184 1211 196"/><path d="M1211 217 C1211 229 1211 211 1211 223"/><path d="M1232 217 C1232 229 1211 211 1211 223"/><path d="M1126 214 C1126 240.1 1126 232.9 1126 259"/><path d="M1329 157 C1329 169 1329 154 1329 166"/><path d="M1329 187 C1329 199 1329 182 1329 194"/><path d="M1127 280 C1127 372.8 1057 347.2 1057 440"/><path d="M1227 280 C1227 372.8 1195 347.2 1195 440"/><path d="M1327 280 C1327 323.5 1306 311.5 1306 355"/><path d="M1428 280 C1428 405.28 1428 370.72 1428 496"/><path d="M1528 280 C1528 292 1528 282 1528 294"/><path d="M1528 314 C1528 326 1528 309 1528 321"/><path d="M1360 310 C1360 322 1360 304 1360 316"/><path d="M1360 338 C1360 350 1306 343 1306 355"/><path d="M1306 377 C1306 389 1306 372 1306 384"/><path d="M1306 405 C1306 417 1306 402 1306 414"/><path d="M1458 421 C1458 433 1458 419 1458 431"/><path d="M1458 453 C1458 465 1458 448 1458 460"/><path d="M1458 482 C1458 494 1458 484 1458 496"/><path d="M1458 482 C1458 494 1489 484 1489 496"/><path d="M1458 482 C1458 494 1518 484 1518 496"/><path d="M1428 517 C1428 529 1428 512 1428 524"/><path d="M1249 462 C1249 488.68 1258 481.32 1258 508"/><path d="M1258 530 C1258 561.9 1195 553.1 1195 585"/><path d="M889 406 C889 434.42 755 426.58 755 455"/><path d="M889 406 C889 434.42 819 426.58 819 455"/><path d="M889 406 C889 434.42 883 426.58 883 455"/><path d="M755 476 C755 488 755 472 755 484"/><path d="M819 476 C819 488 819 472 819 484"/><path d="M883 476 C883 488 883 472 883 484"/></g><g fill="none" stroke="#a9a9a9" stroke-width="2"><path d="M730 127 C730 139 730 123 730 135"/><path d="M730 199 C730 211 730 196 730 208"/><path d="M730 229 C730 241 730 226 730 238"/><path d="M730 258 C730 270 730 256 730 268"/><path d="M730 288 C730 300 730 289 730 301"/><path d="M822 157 C822 169 822 152 822 164"/><path d="M822 184 C822 196 822 181 822 193"/><path d="M822 213 C822 236.2 822 229.8 822 253"/><path d="M838 239 C838 251 822 241 822 253"/><path d="M990 142 C990 154 990 142 990 154"/><path d="M990 142 C990 154 1025 142 1025 154"/><path d="M990 175 C990 187 939 178 939 190"/><path d="M990 175 C990 187 990 178 990 190"/><path d="M1025 175 C1025 187 1041 178 1041 190"/><path d="M939 210 C939 222 986 207 986 219"/><path d="M990 210 C990 222 1032 207 1032 219"/><path d="M1041 210 C1041 222 1078 207 1078 219"/><path d="M939 239 C939 251 939 235 939 247"/><path d="M1126 133 C1126 145 1126 132 1126 144"/><path d="M1126 164 C1126 180.24 1126 175.76 1126 192"/><path d="M1126 164 C1126 176 1211 158 1211 170"/><path d="M1211 190 C1211 202 1211 184 1211 196"/><path d="M1211 217 C1211 229 1211 211 1211 223"/><path d="M1232 217 C1232 229 1211 211 1211 223"/><path d="M1126 214 C1126 240.1 1126 232.9 1126 259"/><path d="M1329 157 C1329 169 1329 154 1329 166"/><path d="M1329 187 C1329 199 1329 182 1329 194"/><path d="M1127 280 C1127 372.8 1057 347.2 1057 440"/><path d="M1227 280 C1227 372.8 1195 347.2 1195 440"/><path d="M1327 280 C1327 323.5 1306 311.5 1306 355"/><path d="M1428 280 C1428 405.28 1428 370.72 1428 496"/><path d="M1528 280 C1528 292 1528 282 1528 294"/><path d="M1528 314 C1528 326 1528 309 1528 321"/><path d="M1360 310 C1360 322 1360 304 1360 316"/><path d="M1360 338 C1360 350 1306 343 1306 355"/><path d="M1306 377 C1306 389 1306 372 1306 384"/><path d="M1306 405 C1306 417 1306 402 1306 414"/><path d="M1458 421 C1458 433 1458 419 1458 431"/><path d="M1458 453 C1458 465 1458 448 1458 460"/><path d="M1458 482 C1458 494 1458 484 1458 496"/><path d="M1458 482 C1458 494 1489 484 1489 496"/><path d="M1458 482 C1458 494 1518 484 1518 496"/><path d="M1428 517 C1428 529 1428 512 1428 524"/><path d="M1249 462 C1249 488.68 1258 481.32 1258 508"/><path d="M1258 530 C1258 561.9 1195 553.1 1195 585"/><path d="M889 406 C889 434.42 755 426.58 755 455"/><path d="M889 406 C889 434.42 819 426.58 819 455"/><path d="M889 406 C889 434.42 883 426.58 883 455"/><path d="M755 476 C755 488 755 472 755 484"/><path d="M819 476 C819 488 819 472 819 484"/><path d="M883 476 C883 488 883 472 883 484"/></g></svg>
<svg class="a" style="left:0;top:0" width="1920" height="1200"><g fill="none" stroke="#8e8e8e" stroke-width="3.3"><path d="M154 693 C154 706.34 154 702.66 154 716"/><path d="M154 738 C154 780.34 154 768.66 154 811"/><path d="M176 738 C176 780.34 201 768.66 201 811"/><path d="M197.5 738 C197.5 780.34 245 768.66 245 811"/><path d="M219 738 C219 780.34 289 768.66 289 811"/><path d="M241 738 C241 780.34 333 768.66 333 811"/><path d="M262 738 C262 780.34 377 768.66 377 811"/><path d="M312 738 C312 780.34 165 768.66 165 811"/><path d="M312 738 C312 780.34 300 768.66 300 811"/><path d="M376 738 C376 780.34 212 768.66 212 811"/><path d="M376 738 C376 780.34 343.5 768.66 343.5 811"/><path d="M440 738 C440 780.34 256 768.66 256 811"/><path d="M440 738 C440 780.34 387.5 768.66 387.5 811"/><path d="M154 833 C154 855.04 154 848.96 154 871"/><path d="M201 833 C201 855.04 173.5 848.96 173.5 871"/><path d="M245 833 C245 855.04 192.5 848.96 192.5 871"/><path d="M289 833 C289 855.04 211 848.96 211 871"/><path d="M333 833 C333 855.04 230 848.96 230 871"/><path d="M377 833 C377 855.04 249 848.96 249 871"/><path d="M154 893 C154 905 154 895 154 907"/><path d="M154 929 C154 941.76 154 938.24 154 951"/></g><g fill="none" stroke="#a9a9a9" stroke-width="2"><path d="M154 693 C154 706.34 154 702.66 154 716"/><path d="M154 738 C154 780.34 154 768.66 154 811"/><path d="M176 738 C176 780.34 201 768.66 201 811"/><path d="M197.5 738 C197.5 780.34 245 768.66 245 811"/><path d="M219 738 C219 780.34 289 768.66 289 811"/><path d="M241 738 C241 780.34 333 768.66 333 811"/><path d="M262 738 C262 780.34 377 768.66 377 811"/><path d="M312 738 C312 780.34 165 768.66 165 811"/><path d="M312 738 C312 780.34 300 768.66 300 811"/><path d="M376 738 C376 780.34 212 768.66 212 811"/><path d="M376 738 C376 780.34 343.5 768.66 343.5 811"/><path d="M440 738 C440 780.34 256 768.66 256 811"/><path d="M440 738 C440 780.34 387.5 768.66 387.5 811"/><path d="M154 833 C154 855.04 154 848.96 154 871"/><path d="M201 833 C201 855.04 173.5 848.96 173.5 871"/><path d="M245 833 C245 855.04 192.5 848.96 192.5 871"/><path d="M289 833 C289 855.04 211 848.96 211 871"/><path d="M333 833 C333 855.04 230 848.96 230 871"/><path d="M377 833 C377 855.04 249 848.96 249 871"/><path d="M154 893 C154 905 154 895 154 907"/><path d="M154 929 C154 941.76 154 938.24 154 951"/></g></svg>
<div class="o" style="left:721px;top:105px;width:60px;height:22px"><i></i><b style="line-height:22px;transform:scaleX(0.97)">loadbang</b></div>
<div class="o" style="left:721px;top:135px;width:35px;height:22px"><i></i><b style="line-height:22px;transform:scaleX(0.97)">s init</b></div>
<div class="o" style="left:721px;top:178px;width:46px;height:21px"><i></i><b style="line-height:21px;transform:scaleX(0.97)">key</b></div>
<div class="o" style="left:721px;top:208px;width:57px;height:21px"><i></i><b style="line-height:21px;transform:scaleX(0.97)">select 27</b></div>
<svg class="a" style="left:721px;top:238px" width="20" height="20"><rect width="20" height="20" fill="#2b2b2b"/><path d="M5.0 5.0L15.0 15.0M15.0 5.0L5.0 15.0" stroke="#555" stroke-width="1.6"/></svg>
<div class="m" style="left:721px;top:268px;width:76px;height:20px;line-height:20px"><span style="display:inline-block;transform:scaleX(0.97);transform-origin:0 0">fullscreen $1</span></div>
<div class="o" style="left:721px;top:301px;width:243px;height:20px"><i></i><b style="line-height:20px;transform:scaleX(0.97)">jit.window ASL 20 60 340 300 @depthbuffer 1</b></div>
<div class="n" style="left:814px;top:137px;width:50px;height:20px;line-height:20px"><span style="display:inline-block;transform:scaleX(0.97);transform-origin:0 0">0.5</span></div>
<div class="m" style="left:814px;top:164px;width:55px;height:20px;line-height:20px"><span style="display:inline-block;transform:scaleX(0.97);transform-origin:0 0">radius $1</span></div>
<div class="o" style="left:814px;top:193px;width:92px;height:20px"><i></i><b style="line-height:20px;transform:scaleX(0.97)">jit.gl.handle ASL</b></div>
<div class="o" style="left:830px;top:219px;width:50px;height:20px"><i></i><b style="line-height:20px;transform:scaleX(0.97)">r param</b></div>
<div class="o" style="left:814px;top:253px;width:90px;height:20px"><i></i><b style="line-height:20px;transform:scaleX(0.97)">jit.gl.sketch ASL</b></div>
<div class="o" style="left:982px;top:121px;width:33px;height:21px"><i></i><b style="line-height:21px;transform:scaleX(0.97)">r init</b></div>
<div class="m" style="left:982px;top:154px;width:32px;height:21px;line-height:21px"><span style="display:inline-block;transform:scaleX(0.97);transform-origin:0 0">0</span></div>
<div class="m" style="left:1017px;top:154px;width:32px;height:21px;line-height:21px"><span style="display:inline-block;transform:scaleX(0.97);transform-origin:0 0">-1.</span></div>
<div class="n" style="left:931px;top:190px;width:49px;height:20px;line-height:20px"><span style="display:inline-block;transform:scaleX(0.97);transform-origin:0 0">0.</span></div>
<div class="n" style="left:982px;top:190px;width:49px;height:20px;line-height:20px"><span style="display:inline-block;transform:scaleX(0.97);transform-origin:0 0">0.</span></div>
<div class="n" style="left:1033px;top:190px;width:50px;height:20px;line-height:20px"><span style="display:inline-block;transform:scaleX(0.97);transform-origin:0 0">-1.</span></div>
<div class="o" style="left:931px;top:219px;width:157px;height:20px"><i></i><b style="line-height:20px;transform:scaleX(0.97)">pak position 0. 0. 0.</b></div>
<div class="o" style="left:931px;top:247px;width:52px;height:21px"><i></i><b style="line-height:21px;transform:scaleX(0.97)">s param</b></div>
<div class="o" style="left:1118px;top:112px;width:70px;height:21px"><i></i><b style="line-height:21px;transform:scaleX(0.97)">loadmess 1</b></div>
<svg class="a" style="left:1118px;top:144px" width="20" height="20"><rect width="20" height="20" fill="#2b2b2b"/><path d="M5.0 5.0L15.0 15.0M15.0 5.0L5.0 15.0" stroke="#cde8ec" stroke-width="1.6"/></svg>
<div class="o" style="left:1201px;top:170px;width:63px;height:20px"><i></i><b style="line-height:20px;transform:scaleX(0.97)">qmetro 20</b></div>
<div class="o" style="left:1201px;top:196px;width:63px;height:21px"><i></i><b style="line-height:21px;transform:scaleX(0.97)">t b erase b</b></div>
<div class="o" style="left:1201px;top:223px;width:90px;height:21px"><i></i><b style="line-height:21px;transform:scaleX(0.97)">jit.gl.render ASL</b></div>
<div class="o" style="left:1118px;top:192px;width:65px;height:22px"><i></i><b style="line-height:22px;transform:scaleX(0.97)">metro 100</b></div>
<svg class="a" style="left:1321px;top:112px" width="45" height="45"><rect width="45" height="45" fill="#2b2b2b"/><path d="M11.25 11.25L33.75 33.75M33.75 11.25L11.25 33.75" stroke="#cde8ec" stroke-width="3.1500000000000004"/></svg>
<div class="m" style="left:1321px;top:166px;width:49px;height:21px;line-height:21px"><span style="display:inline-block;transform:scaleX(0.97);transform-origin:0 0">axes $1</span></div>
<div class="o" style="left:1321px;top:194px;width:52px;height:21px"><i></i><b style="line-height:21px;transform:scaleX(0.97)">s param</b></div>
<div class="o" style="left:1118px;top:259px;width:420px;height:21px"><i></i><b style="line-height:21px;transform:scaleX(0.97)">t b b b b b</b></div>
<div class="o" style="left:1352px;top:289px;width:31px;height:21px"><i></i><b style="line-height:21px;transform:scaleX(0.97)">r init</b></div>
<div class="m" style="left:1352px;top:316px;width:29px;height:22px;line-height:22px"><span style="display:inline-block;transform:scaleX(0.97);transform-origin:0 0">3</span></div>
<div class="n" style="left:1297px;top:355px;width:33px;height:22px;line-height:22px"><span style="display:inline-block;transform:scaleX(0.97);transform-origin:0 0">4</span></div>
<div class="o" style="left:1297px;top:384px;width:112px;height:21px"><i></i><b style="line-height:21px;transform:scaleX(0.97)">prepend gllinewidth</b></div>
<div class="o" style="left:1297px;top:414px;width:52px;height:21px"><i></i><b style="line-height:21px;transform:scaleX(0.97)">s param</b></div>
<div class="m" style="left:1519px;top:294px;width:34px;height:20px;line-height:20px"><span style="display:inline-block;transform:scaleX(0.97);transform-origin:0 0">reset</span></div>
<div class="o" style="left:1519px;top:321px;width:52px;height:20px"><i></i><b style="line-height:20px;transform:scaleX(0.97)">s param</b></div>
<div class="a" style="left:1449px;top:294px;width:45px;height:127px;background:#2b2b2b"><div class="a" style="left:0;top:5px;width:45px;height:38px;background:#474747"></div><div class="a" style="left:0;top:43px;width:45px;height:79px;background:#c6e2e6"></div><div class="a" style="left:0;top:49px;width:45px;height:1px;background:#4a4a4a"></div></div>
<div class="o" style="left:1449px;top:431px;width:97px;height:22px"><i></i><b style="line-height:22px;transform:scaleX(0.97)">scale 0 127 0. 1.</b></div>
<div class="n" style="left:1449px;top:460px;width:50px;height:22px;line-height:22px"><span style="display:inline-block;transform:scaleX(0.97);transform-origin:0 0">0.654</span></div>
<div class="o" style="left:1419px;top:496px;width:109px;height:21px"><i></i><b style="line-height:21px;transform:scaleX(0.97)">pack glcolor 0. 0. 0.</b></div>
<div class="o" style="left:1419px;top:524px;width:52px;height:21px"><i></i><b style="line-height:21px;transform:scaleX(0.97)">s param</b></div>
<div class="o" style="left:1048px;top:440px;width:72px;height:22px"><i></i><b style="line-height:22px;transform:scaleX(0.97)">t b b b b b b</b></div>
<div class="o" style="left:1186px;top:440px;width:72px;height:22px"><i></i><b style="line-height:22px;transform:scaleX(0.97)">t b b b b b b</b></div>
<div class="m" style="left:1249px;top:508px;width:113px;height:22px;line-height:22px;font-size:13px">0. 0. 0. 0.5 0.5 0.5</div>
<div class="o" style="left:1186px;top:585px;width:74px;height:22px"><i></i><b style="line-height:22px;transform:scaleX(0.97)">p offset_add</b></div>
<div class="m" style="left:881px;top:384px;width:29px;height:22px;line-height:22px"><span style="display:inline-block;transform:scaleX(0.97);transform-origin:0 0">0.</span></div>
<div class="n" style="left:747px;top:455px;width:50px;height:21px;line-height:21px"><span style="display:inline-block;transform:scaleX(0.97);transform-origin:0 0">0.</span></div>
<div class="n" style="left:811px;top:455px;width:50px;height:21px;line-height:21px"><span style="display:inline-block;transform:scaleX(0.97);transform-origin:0 0">0.</span></div>
<div class="n" style="left:875px;top:455px;width:50px;height:21px;line-height:21px"><span style="display:inline-block;transform:scaleX(0.97);transform-origin:0 0">0.</span></div>
<div class="o" style="left:747px;top:484px;width:60px;height:22px"><i></i><b style="line-height:22px;transform:scaleX(0.97)">s x_offset</b></div>
<div class="o" style="left:811px;top:484px;width:60px;height:22px"><i></i><b style="line-height:22px;transform:scaleX(0.97)">s y_offset</b></div>
<div class="o" style="left:875px;top:484px;width:60px;height:22px"><i></i><b style="line-height:22px;transform:scaleX(0.97)">s z_offset</b></div>
<div class="a" style="left:145px;top:663px;width:30px;height:30px;background:#2b2b2b;color:#fff;font-size:12px;font-weight:bold;text-align:center;line-height:18px">1<div class="a" style="left:8px;top:17px;border-top:8px solid #c5e1e5;border-left:7px solid transparent;border-right:7px solid transparent"></div></div>
<div class="o" style="left:145px;top:716px;width:127px;height:22px"><i></i><b style="line-height:22px;transform:scaleX(1.0)">unpack 0. 0. 0. 0. 0. 0.</b></div>
<div class="o" style="left:303px;top:716px;width:58px;height:22px"><i></i><b style="line-height:22px;transform:scaleX(1.0)">r x_offset</b></div>
<div class="o" style="left:367px;top:716px;width:58px;height:22px"><i></i><b style="line-height:22px;transform:scaleX(1.0)">r y_offset</b></div>
<div class="o" style="left:431px;top:716px;width:58px;height:22px"><i></i><b style="line-height:22px;transform:scaleX(1.0)">r z_offset</b></div>
<div class="o" style="left:145px;top:811px;width:30px;height:22px"><i></i><b style="line-height:22px;transform:scaleX(1.0)">+ 0.</b></div>
<div class="o" style="left:192px;top:811px;width:30px;height:22px"><i></i><b style="line-height:22px;transform:scaleX(1.0)">+ 0.</b></div>
<div class="o" style="left:236px;top:811px;width:30px;height:22px"><i></i><b style="line-height:22px;transform:scaleX(1.0)">+ 0.</b></div>
<div class="o" style="left:280px;top:811px;width:30px;height:22px"><i></i><b style="line-height:22px;transform:scaleX(1.0)">+ 0.</b></div>
<div class="o" style="left:324px;top:811px;width:30px;height:22px"><i></i><b style="line-height:22px;transform:scaleX(1.0)">+ 0.</b></div>
<div class="o" style="left:368px;top:811px;width:30px;height:22px"><i></i><b style="line-height:22px;transform:scaleX(1.0)">+ 0.</b></div>
<div class="o" style="left:145px;top:871px;width:114px;height:22px"><i></i><b style="line-height:22px;transform:scaleX(1.0)">pack 0. 0. 0. 0. 0. 0.</b></div>
<div class="o" style="left:145px;top:907px;width:121px;height:22px"><i></i><b style="line-height:22px;transform:scaleX(1.0)">prepend linesegment</b></div>
<div class="o" style="left:145px;top:951px;width:52px;height:21px"><i></i><b style="line-height:21px;transform:scaleX(1.0)">s param</b></div>
<svg class="a" style="left:0;top:0" width="1920" height="1200"><path d="M726.8 229A3.2 3.2 0 0 1 733.2 229Z" fill="#1e1e1e" stroke="#a8b850" stroke-width="1"/><path d="M1323.8 280A3.2 3.2 0 0 1 1330.2 280Z" fill="#1e1e1e" stroke="#a8b850" stroke-width="1"/><path d="M372.8 738A3.2 3.2 0 0 1 379.2 738Z" fill="#1e1e1e" stroke="#a8b850" stroke-width="1"/><path d="M150.8 893A3.2 3.2 0 0 1 157.2 893Z" fill="#1e1e1e" stroke="#a8b850" stroke-width="1"/><path d="M1356.8 310A3.2 3.2 0 0 1 1363.2 310Z" fill="#1e1e1e" stroke="#a8b850" stroke-width="1"/><path d="M308.8 738A3.2 3.2 0 0 1 315.2 738Z" fill="#1e1e1e" stroke="#a8b850" stroke-width="1"/><path d="M1424.8 280A3.2 3.2 0 0 1 1431.2 280Z" fill="#1e1e1e" stroke="#a8b850" stroke-width="1"/><path d="M215.8 738A3.2 3.2 0 0 1 222.2 738Z" fill="#1e1e1e" stroke="#a8b850" stroke-width="1"/><path d="M1207.8 190A3.2 3.2 0 0 1 1214.2 190Z" fill="#1e1e1e" stroke="#a8b850" stroke-width="1"/><path d="M150.8 929A3.2 3.2 0 0 1 157.2 929Z" fill="#1e1e1e" stroke="#a8b850" stroke-width="1"/><path d="M241.8 833A3.2 3.2 0 0 1 248.2 833Z" fill="#1e1e1e" stroke="#a8b850" stroke-width="1"/><path d="M285.8 833A3.2 3.2 0 0 1 292.2 833Z" fill="#1e1e1e" stroke="#a8b850" stroke-width="1"/><path d="M373.8 833A3.2 3.2 0 0 1 380.2 833Z" fill="#1e1e1e" stroke="#a8b850" stroke-width="1"/><path d="M1207.8 217A3.2 3.2 0 0 1 1214.2 217Z" fill="#1e1e1e" stroke="#a8b850" stroke-width="1"/><path d="M237.8 738A3.2 3.2 0 0 1 244.2 738Z" fill="#1e1e1e" stroke="#a8b850" stroke-width="1"/><path d="M726.8 127A3.2 3.2 0 0 1 733.2 127Z" fill="#1e1e1e" stroke="#a8b850" stroke-width="1"/><path d="M818.8 213A3.2 3.2 0 0 1 825.2 213Z" fill="#1e1e1e" stroke="#a8b850" stroke-width="1"/><path d="M986.8 142A3.2 3.2 0 0 1 993.2 142Z" fill="#1e1e1e" stroke="#a8b850" stroke-width="1"/><path d="M329.8 833A3.2 3.2 0 0 1 336.2 833Z" fill="#1e1e1e" stroke="#a8b850" stroke-width="1"/><path d="M197.8 833A3.2 3.2 0 0 1 204.2 833Z" fill="#1e1e1e" stroke="#a8b850" stroke-width="1"/><path d="M1122.8 133A3.2 3.2 0 0 1 1129.2 133Z" fill="#1e1e1e" stroke="#a8b850" stroke-width="1"/><path d="M1223.8 280A3.2 3.2 0 0 1 1230.2 280Z" fill="#1e1e1e" stroke="#a8b850" stroke-width="1"/><path d="M1302.8 405A3.2 3.2 0 0 1 1309.2 405Z" fill="#1e1e1e" stroke="#a8b850" stroke-width="1"/><path d="M1454.8 453A3.2 3.2 0 0 1 1461.2 453Z" fill="#1e1e1e" stroke="#a8b850" stroke-width="1"/><path d="M1424.8 517A3.2 3.2 0 0 1 1431.2 517Z" fill="#1e1e1e" stroke="#a8b850" stroke-width="1"/><path d="M834.8 239A3.2 3.2 0 0 1 841.2 239Z" fill="#1e1e1e" stroke="#a8b850" stroke-width="1"/><path d="M935.8 239A3.2 3.2 0 0 1 942.2 239Z" fill="#1e1e1e" stroke="#a8b850" stroke-width="1"/><path d="M1524.8 280A3.2 3.2 0 0 1 1531.2 280Z" fill="#1e1e1e" stroke="#a8b850" stroke-width="1"/><path d="M150.8 833A3.2 3.2 0 0 1 157.2 833Z" fill="#1e1e1e" stroke="#a8b850" stroke-width="1"/><path d="M726.8 199A3.2 3.2 0 0 1 733.2 199Z" fill="#1e1e1e" stroke="#a8b850" stroke-width="1"/><path d="M1245.8 462A3.2 3.2 0 0 1 1252.2 462Z" fill="#1e1e1e" stroke="#a8b850" stroke-width="1"/><path d="M1228.8 217A3.2 3.2 0 0 1 1235.2 217Z" fill="#1e1e1e" stroke="#a8b850" stroke-width="1"/><path d="M258.8 738A3.2 3.2 0 0 1 265.2 738Z" fill="#1e1e1e" stroke="#a8b850" stroke-width="1"/><path d="M150.8 738A3.2 3.2 0 0 1 157.2 738Z" fill="#1e1e1e" stroke="#a8b850" stroke-width="1"/><path d="M172.8 738A3.2 3.2 0 0 1 179.2 738Z" fill="#1e1e1e" stroke="#a8b850" stroke-width="1"/><path d="M436.8 738A3.2 3.2 0 0 1 443.2 738Z" fill="#1e1e1e" stroke="#a8b850" stroke-width="1"/><path d="M1122.8 214A3.2 3.2 0 0 1 1129.2 214Z" fill="#1e1e1e" stroke="#a8b850" stroke-width="1"/><path d="M194.3 738A3.2 3.2 0 0 1 200.7 738Z" fill="#1e1e1e" stroke="#a8b850" stroke-width="1"/><path d="M1123.8 280A3.2 3.2 0 0 1 1130.2 280Z" fill="#1e1e1e" stroke="#a8b850" stroke-width="1"/><path d="M982.8 219A3.2 3.2 0 0 0 989.2 219Z" fill="#3c0c0c" stroke="#e48a8a" stroke-width="1"/><path d="M161.8 811A3.2 3.2 0 0 0 168.2 811Z" fill="#123" stroke="#6ccadb" stroke-width="1"/><path d="M818.8 193A3.2 3.2 0 0 0 825.2 193Z" fill="#3c0c0c" stroke="#e48a8a" stroke-width="1"/><path d="M245.8 871A3.2 3.2 0 0 0 252.2 871Z" fill="#123" stroke="#6ccadb" stroke-width="1"/><path d="M935.8 247A3.2 3.2 0 0 0 942.2 247Z" fill="#3c0c0c" stroke="#e48a8a" stroke-width="1"/><path d="M815.8 484A3.2 3.2 0 0 0 822.2 484Z" fill="#3c0c0c" stroke="#e48a8a" stroke-width="1"/><path d="M150.8 716A3.2 3.2 0 0 0 157.2 716Z" fill="#3c0c0c" stroke="#e48a8a" stroke-width="1"/><path d="M751.8 484A3.2 3.2 0 0 0 758.2 484Z" fill="#3c0c0c" stroke="#e48a8a" stroke-width="1"/><path d="M150.8 907A3.2 3.2 0 0 0 157.2 907Z" fill="#3c0c0c" stroke="#e48a8a" stroke-width="1"/><path d="M150.8 951A3.2 3.2 0 0 0 157.2 951Z" fill="#3c0c0c" stroke="#e48a8a" stroke-width="1"/><path d="M1122.8 192A3.2 3.2 0 0 0 1129.2 192Z" fill="#3c0c0c" stroke="#e48a8a" stroke-width="1"/><path d="M1454.8 431A3.2 3.2 0 0 0 1461.2 431Z" fill="#3c0c0c" stroke="#e48a8a" stroke-width="1"/><path d="M1028.8 219A3.2 3.2 0 0 0 1035.2 219Z" fill="#3c0c0c" stroke="#e48a8a" stroke-width="1"/><path d="M1122.8 259A3.2 3.2 0 0 0 1129.2 259Z" fill="#3c0c0c" stroke="#e48a8a" stroke-width="1"/><path d="M1325.8 194A3.2 3.2 0 0 0 1332.2 194Z" fill="#3c0c0c" stroke="#e48a8a" stroke-width="1"/><path d="M1074.8 219A3.2 3.2 0 0 0 1081.2 219Z" fill="#3c0c0c" stroke="#e48a8a" stroke-width="1"/><path d="M1424.8 524A3.2 3.2 0 0 0 1431.2 524Z" fill="#3c0c0c" stroke="#e48a8a" stroke-width="1"/><path d="M1207.8 196A3.2 3.2 0 0 0 1214.2 196Z" fill="#3c0c0c" stroke="#e48a8a" stroke-width="1"/><path d="M1524.8 321A3.2 3.2 0 0 0 1531.2 321Z" fill="#3c0c0c" stroke="#e48a8a" stroke-width="1"/><path d="M1053.8 440A3.2 3.2 0 0 0 1060.2 440Z" fill="#3c0c0c" stroke="#e48a8a" stroke-width="1"/><path d="M150.8 871A3.2 3.2 0 0 0 157.2 871Z" fill="#3c0c0c" stroke="#e48a8a" stroke-width="1"/><path d="M818.8 253A3.2 3.2 0 0 0 825.2 253Z" fill="#3c0c0c" stroke="#e48a8a" stroke-width="1"/><path d="M170.3 871A3.2 3.2 0 0 0 176.7 871Z" fill="#123" stroke="#6ccadb" stroke-width="1"/><path d="M726.8 301A3.2 3.2 0 0 0 733.2 301Z" fill="#3c0c0c" stroke="#e48a8a" stroke-width="1"/><path d="M207.8 871A3.2 3.2 0 0 0 214.2 871Z" fill="#123" stroke="#6ccadb" stroke-width="1"/><path d="M1191.8 440A3.2 3.2 0 0 0 1198.2 440Z" fill="#3c0c0c" stroke="#e48a8a" stroke-width="1"/><path d="M1424.8 496A3.2 3.2 0 0 0 1431.2 496Z" fill="#3c0c0c" stroke="#e48a8a" stroke-width="1"/><path d="M1302.8 384A3.2 3.2 0 0 0 1309.2 384Z" fill="#3c0c0c" stroke="#e48a8a" stroke-width="1"/><path d="M1514.8 496A3.2 3.2 0 0 0 1521.2 496Z" fill="#123" stroke="#6ccadb" stroke-width="1"/><path d="M1207.8 223A3.2 3.2 0 0 0 1214.2 223Z" fill="#3c0c0c" stroke="#e48a8a" stroke-width="1"/><path d="M373.8 811A3.2 3.2 0 0 0 380.2 811Z" fill="#3c0c0c" stroke="#e48a8a" stroke-width="1"/><path d="M241.8 811A3.2 3.2 0 0 0 248.2 811Z" fill="#3c0c0c" stroke="#e48a8a" stroke-width="1"/><path d="M285.8 811A3.2 3.2 0 0 0 292.2 811Z" fill="#3c0c0c" stroke="#e48a8a" stroke-width="1"/><path d="M208.8 811A3.2 3.2 0 0 0 215.2 811Z" fill="#123" stroke="#6ccadb" stroke-width="1"/><path d="M252.8 811A3.2 3.2 0 0 0 259.2 811Z" fill="#123" stroke="#6ccadb" stroke-width="1"/><path d="M1302.8 414A3.2 3.2 0 0 0 1309.2 414Z" fill="#3c0c0c" stroke="#e48a8a" stroke-width="1"/><path d="M197.8 811A3.2 3.2 0 0 0 204.2 811Z" fill="#3c0c0c" stroke="#e48a8a" stroke-width="1"/><path d="M1485.8 496A3.2 3.2 0 0 0 1492.2 496Z" fill="#123" stroke="#6ccadb" stroke-width="1"/><path d="M296.8 811A3.2 3.2 0 0 0 303.2 811Z" fill="#123" stroke="#6ccadb" stroke-width="1"/><path d="M329.8 811A3.2 3.2 0 0 0 336.2 811Z" fill="#3c0c0c" stroke="#e48a8a" stroke-width="1"/><path d="M340.3 811A3.2 3.2 0 0 0 346.7 811Z" fill="#123" stroke="#6ccadb" stroke-width="1"/><path d="M384.3 811A3.2 3.2 0 0 0 390.7 811Z" fill="#123" stroke="#6ccadb" stroke-width="1"/><path d="M189.3 871A3.2 3.2 0 0 0 195.7 871Z" fill="#123" stroke="#6ccadb" stroke-width="1"/><path d="M1207.8 170A3.2 3.2 0 0 0 1214.2 170Z" fill="#3c0c0c" stroke="#e48a8a" stroke-width="1"/><path d="M226.8 871A3.2 3.2 0 0 0 233.2 871Z" fill="#123" stroke="#6ccadb" stroke-width="1"/><path d="M726.8 135A3.2 3.2 0 0 0 733.2 135Z" fill="#3c0c0c" stroke="#e48a8a" stroke-width="1"/><path d="M1454.8 496A3.2 3.2 0 0 0 1461.2 496Z" fill="#123" stroke="#6ccadb" stroke-width="1"/><path d="M726.8 208A3.2 3.2 0 0 0 733.2 208Z" fill="#3c0c0c" stroke="#e48a8a" stroke-width="1"/><path d="M1191.8 585A3.2 3.2 0 0 0 1198.2 585Z" fill="#3c0c0c" stroke="#e48a8a" stroke-width="1"/><path d="M879.8 484A3.2 3.2 0 0 0 886.2 484Z" fill="#3c0c0c" stroke="#e48a8a" stroke-width="1"/><path d="M150.8 811A3.2 3.2 0 0 0 157.2 811Z" fill="#3c0c0c" stroke="#e48a8a" stroke-width="1"/><path d="M736.6 199A3.4 3.2 0 0 1 743.4 199Z" fill="#a4a4a4"/><path d="M745.1 199A3.4 3.2 0 0 1 751.9 199Z" fill="#a4a4a4"/><path d="M754.1 199A3.4 3.2 0 0 1 760.9 199Z" fill="#a4a4a4"/><path d="M765.1 229A3.4 3.2 0 0 1 771.9 229Z" fill="#a4a4a4"/><path d="M893.6 213A3.4 3.2 0 0 1 900.4 213Z" fill="#a4a4a4"/><path d="M818.6 273A3.4 3.2 0 0 1 825.4 273Z" fill="#a4a4a4"/><path d="M891.6 273A3.4 3.2 0 0 1 898.4 273Z" fill="#a4a4a4"/><path d="M726.6 321A3.4 3.2 0 0 1 733.4 321Z" fill="#a4a4a4"/><path d="M951.6 321A3.4 3.2 0 0 1 958.4 321Z" fill="#a4a4a4"/><path d="M1251.6 217A3.4 3.2 0 0 1 1258.4 217Z" fill="#a4a4a4"/><path d="M1206.6 244A3.4 3.2 0 0 1 1213.4 244Z" fill="#a4a4a4"/><path d="M1278.6 244A3.4 3.2 0 0 1 1285.4 244Z" fill="#a4a4a4"/><path d="M1053.6 462A3.4 3.2 0 0 1 1060.4 462Z" fill="#a4a4a4"/><path d="M1062.6 462A3.4 3.2 0 0 1 1069.4 462Z" fill="#a4a4a4"/><path d="M1071.6 462A3.4 3.2 0 0 1 1078.4 462Z" fill="#a4a4a4"/><path d="M1080.6 462A3.4 3.2 0 0 1 1087.4 462Z" fill="#a4a4a4"/><path d="M1089.6 462A3.4 3.2 0 0 1 1096.4 462Z" fill="#a4a4a4"/><path d="M1098.6 462A3.4 3.2 0 0 1 1105.4 462Z" fill="#a4a4a4"/><path d="M1107.6 462A3.4 3.2 0 0 1 1114.4 462Z" fill="#a4a4a4"/><path d="M1191.6 462A3.4 3.2 0 0 1 1198.4 462Z" fill="#a4a4a4"/><path d="M1200.6 462A3.4 3.2 0 0 1 1207.4 462Z" fill="#a4a4a4"/><path d="M1209.6 462A3.4 3.2 0 0 1 1216.4 462Z" fill="#a4a4a4"/><path d="M1218.6 462A3.4 3.2 0 0 1 1225.4 462Z" fill="#a4a4a4"/><path d="M1227.6 462A3.4 3.2 0 0 1 1234.4 462Z" fill="#a4a4a4"/><path d="M1236.6 462A3.4 3.2 0 0 1 1243.4 462Z" fill="#a4a4a4"/><path d="M726.6 105A3.4 3.2 0 0 0 733.4 105Z" fill="#a4a4a4"/><path d="M765.1 208A3.4 3.2 0 0 0 771.9 208Z" fill="#a4a4a4"/><path d="M1122.6 112A3.4 3.2 0 0 0 1129.4 112Z" fill="#a4a4a4"/><path d="M1251.6 170A3.4 3.2 0 0 0 1258.4 170Z" fill="#a4a4a4"/><path d="M1170.6 192A3.4 3.2 0 0 0 1177.4 192Z" fill="#a4a4a4"/><path d="M1470.6 431A3.4 3.2 0 0 0 1477.4 431Z" fill="#a4a4a4"/><path d="M1486.6 431A3.4 3.2 0 0 0 1493.4 431Z" fill="#a4a4a4"/><path d="M1501.6 431A3.4 3.2 0 0 0 1508.4 431Z" fill="#a4a4a4"/><path d="M1516.6 431A3.4 3.2 0 0 0 1523.4 431Z" fill="#a4a4a4"/><path d="M1532.6 431A3.4 3.2 0 0 0 1539.4 431Z" fill="#a4a4a4"/></svg>
<div class="win" style="left:1531px;top:869px;width:354px;height:251px;background:#353535;overflow:hidden"><div class="tb" style="background:#f3f3f3;color:#acacac">Max Console</div><div class="tl" style="left:8px;top:5px;background:#dedede;border:1px solid #cfcfcf"></div><div class="tl" style="left:28px;top:5px;background:#dedede;border:1px solid #cfcfcf"></div><div class="tl" style="left:48px;top:5px;background:#dedede;border:1px solid #cfcfcf"></div><div class="a" style="left:0;top:22px;width:354px;height:34px;background:#484848"></div><div class="a" style="left:0;top:56px;width:354px;height:20px;background:#383838"></div><div class="a" style="left:0;top:76px;width:354px;height:20px;background:#2f2f2f"></div><div class="a" style="left:0;top:96px;width:354px;height:20px;background:#383838"></div><div class="a" style="left:0;top:116px;width:354px;height:20px;background:#2f2f2f"></div><div class="a" style="left:0;top:136px;width:354px;height:20px;background:#383838"></div><div class="a" style="left:0;top:156px;width:354px;height:20px;background:#2f2f2f"></div><div class="a" style="left:0;top:176px;width:354px;height:20px;background:#383838"></div><div class="a" style="left:0;top:196px;width:354px;height:20px;background:#2f2f2f"></div><div class="a" style="left:0;top:216px;width:354px;height:35px;background:#484848"></div><div class="a" style="left:180px;top:33px;color:#8c8c8c;font-size:13px;line-height:14px">Filter</div></div><svg class="a" style="left:0;top:0" width="1920" height="1200"><circle cx="1698" cy="906" r="4.5" fill="none" stroke="#d0d0d0" stroke-width="2"/><path d="M1701 909l4 4" stroke="#d0d0d0" stroke-width="2.4"/><path d="M1870 903v11M1864.5 908.5h11" stroke="#6a6a6a" stroke-width="2"/><path d="M1543 1096l13 13M1556 1096l-13 13" stroke="#6a6a6a" stroke-width="2.6"/><circle cx="1603" cy="1103" r="8" fill="#6a6a6a"/><path d="M1603 1097v6l4 3" fill="none" stroke="#484848" stroke-width="1.6"/><path d="M1640 1094l8 16h-16z" fill="#6a6a6a"/><path d="M1640 1099v6M1640 1107v1.5" stroke="#484848" stroke-width="1.6"/><path d="M1673 1094h8M1673 1098h8M1673 1102h8" stroke="#6a6a6a" stroke-width="2"/><path d="M1671 1104h12l-6 7z" fill="#6a6a6a"/><path d="M1724 1103l7-6v4h8v4h-8v4z" fill="#6a6a6a"/></svg>
<svg class="a" style="left:1788px;top:45px" width="24" height="24"><rect x="2" y="2" width="20" height="18" rx="2" fill="#f5a000"/><rect x="2" y="18" width="20" height="4" fill="#ccc"/></svg><svg class="a" style="left:1866px;top:44px" width="24" height="25"><rect x="2" y="2" width="20" height="20" rx="3" fill="#aeb4b8"/><rect x="5" y="5" width="14" height="3" fill="#6f757a"/><circle cx="12" cy="15" r="5" fill="#8b9196"/></svg><div class="dl" style="left:1755px;top:74px">500GBwork<br>11</div><div class="dl" style="left:1832px;top:71px">Macintosh<br>HD</div><svg class="a" style="left:1866px;top:117px" width="18" height="22"><path d="M1 1h11l5 5v15H1z" fill="#f0f0f0" stroke="#bbb" stroke-width=".6"/><path d="M12 1v5h5" fill="#ddd"/><rect x="3" y="5" width="11" height="10" fill="#c8c8c8"/><text x="8.5" y="13.5" font-size="9" font-weight="bold" fill="#555" text-anchor="middle" font-family="Liberation Serif">J</text><rect x="2" y="16" width="14" height="3" fill="#666"/></svg><div class="dl" style="left:1830px;top:144px">schedule</div><svg class="a" style="left:1861px;top:171px" width="28" height="22"><path d="M1 3h9l2 2h15v16H1z" fill="#5fb4ee"/><rect x="1" y="6" width="26" height="15" fill="#78c6f6" rx="1"/></svg><div class="dl" style="left:1830px;top:197px">1106</div><svg class="a" style="left:1866px;top:226px" width="18" height="22"><path d="M1 1h11l5 5v15H1z" fill="#f0f0f0" stroke="#bbb" stroke-width=".6"/><path d="M12 1v5h5" fill="#ddd"/><rect x="3" y="5" width="11" height="10" fill="#c8c8c8"/><text x="8.5" y="13.5" font-size="9" font-weight="bold" fill="#555" text-anchor="middle" font-family="Liberation Serif">J</text><rect x="2" y="16" width="14" height="3" fill="#666"/></svg><div class="dl" style="left:1830px;top:253px">メアド</div><svg class="a" style="left:1861px;top:279px" width="28" height="22"><path d="M1 3h9l2 2h15v16H1z" fill="#5fb4ee"/><rect x="1" y="6" width="26" height="15" fill="#78c6f6" rx="1"/></svg><div class="dl" style="left:1830px;top:306px">ASL</div><svg class="a" style="left:1861px;top:335px" width="28" height="22"><path d="M1 3h9l2 2h15v16H1z" fill="#5fb4ee"/><rect x="1" y="6" width="26" height="15" fill="#78c6f6" rx="1"/></svg><div class="dl" style="left:1830px;top:362px">お仕事</div><svg class="a" style="left:1857px;top:393px" width="28" height="22"><path d="M1 3h9l2 2h15v16H1z" fill="#5fb4ee"/><rect x="1" y="6" width="26" height="15" fill="#78c6f6" rx="1"/></svg><div class="dl" style="left:1826px;top:421px">実験中</div><svg class="a" style="left:1857px;top:449px" width="28" height="22"><path d="M1 3h9l2 2h15v16H1z" fill="#5fb4ee"/><rect x="1" y="6" width="26" height="15" fill="#78c6f6" rx="1"/></svg><div class="dl" style="left:1826px;top:477px">PureData_te<br>st</div><svg class="a" style="left:1865px;top:519px" width="18" height="22"><path d="M1 1h11l5 5v15H1z" fill="#f0f0f0" stroke="#bbb" stroke-width=".6"/><path d="M12 1v5h5" fill="#ddd"/><path d="M3 6l11-2 1 6-11 3z" fill="#4a6aa0"/><path d="M3 10l12-1v4H3z" fill="#a08050"/><text x="9" y="19" font-size="5" fill="#777" text-anchor="middle" font-family="Liberation Sans">PDF</text></svg><div class="dl" style="left:1828px;top:546px">Arduino.pdf</div><svg class="a" style="left:1863px;top:568px" width="18" height="22"><path d="M1 1h11l5 5v15H1z" fill="#f0f0f0" stroke="#bbb" stroke-width=".6"/><path d="M12 1v5h5" fill="#ddd"/><rect x="2.5" y="6" width="13" height="13" fill="#2a2a2a"/><circle cx="9" cy="9.5" r="2" fill="none" stroke="#aaa" stroke-width="1"/><circle cx="9" cy="14" r="3" fill="none" stroke="#aaa" stroke-width="1"/></svg><div class="dl" style="left:1826px;top:595px">GL_test01.<br>maxpat</div>
<div class="a" style="left:31px;top:1155px;width:1858px;height:45px;background:#e9684b;border-radius:5px 5px 0 0;box-shadow:inset 0 1px 0 rgba(255,255,255,.15)"></div><div class="a" style="left:1806px;top:1162px;width:1px;height:35px;background:#8a3a28"></div><svg class="a" style="left:0;top:1150px" width="1920" height="50"><g transform="translate(37.5 11)"><rect x="0" y="1" width="28" height="27" rx="2" fill="#e9eef3"/><path d="M0 3a2 2 0 0 1 2-2h13q-4 8-3 14h3q-1 6 1 13H2a2 2 0 0 1-2-2z" fill="#1f7fea"/><path d="M5 19q9 6 18 0" fill="none" stroke="#1a2a40" stroke-width="1.3"/><rect x="7" y="7" width="1.4" height="4" fill="#1a2a40"/><rect x="20" y="7" width="1.4" height="4" fill="#1a2a40"/></g><g transform="translate(73.5 11)"><path d="M6 3l16-3 5 24-16 4z" fill="#e6e6e6"/><path d="M9 8l12-2M9.5 11l12-2M10 14l12-2M10.5 17l12-2" stroke="#aaa" stroke-width=".7"/><path d="M8 1l6 3.4v6.8L8 14.6 2 11.2V4.4z" fill="#2a2a2a" stroke="#fff" stroke-width=".8"/><text x="8" y="11.5" font-size="8" font-weight="bold" fill="#fff" text-anchor="middle" font-family="Liberation Serif">J</text><path d="M16 26l9-16" stroke="#3aa53a" stroke-width="2.6"/></g><g transform="translate(109.5 11)"><path d="M2 4l18-3 5 25-18 2z" fill="#f6f6f6"/><path d="M5 8l15-2.4M5.6 11l15-2.4M6.2 14l15-2.4M6.8 17l15-2.4M7.4 20l15-2.4" stroke="#c8c8c8" stroke-width=".6"/><path d="M17 27l8-26" stroke="#8a98a8" stroke-width="2"/></g><g transform="translate(145.5 11)"><path d="M1 6l4 20 14 2-4-22z" fill="#ddd"/><path d="M4 4l21-3 2 23-20 3z" fill="#69c02a"/><path d="M8 10q5-4 9 1t7-2M7 18q6-3 10 2" stroke="#a8e070" stroke-width="1" fill="none"/><path d="M18 27l7-24" stroke="#eee" stroke-width="2"/></g><g transform="translate(181.5 11)"><circle cx="14" cy="15" r="13" fill="#ff5a2a"/><path d="M14 2q12 2 13 14-2-6-6-7z" fill="#ffb020"/><circle cx="15" cy="15" r="6.5" fill="#7a3ad8"/><path d="M3 10q4-6 11-5-6 3-5 9z" fill="#ff9a2a"/></g><g transform="translate(217.5 11)"><circle cx="14" cy="14.5" r="13.5" fill="#dd4a3a"/><path d="M14 14.5L2.3 21.3A13.5 13.5 0 0 0 14 28z" fill="#2ea44a"/><path d="M14 14.5L14 28A13.5 13.5 0 0 0 25.7 7.7z" fill="#f7c41a"/><path d="M14 14.5L2.3 21.3A13.5 13.5 0 0 1 2.3 7.7z" fill="#2ea44a"/><circle cx="14" cy="14.5" r="6" fill="#fff"/><circle cx="14" cy="14.5" r="4.6" fill="#3a7af0"/></g><g transform="translate(253.5 11)"><rect x="0" y="0" width="28" height="28" rx="6" fill="#ef3939"/><circle cx="14" cy="14" r="10" fill="#fff"/><path d="M8.5 9.5l5.5 10 5.5-10" stroke="#ef3939" stroke-width="3" fill="none" stroke-linecap="round"/></g><g transform="translate(289.5 11)"><circle cx="14" cy="14.5" r="13.5" fill="#e8eef6"/><circle cx="14" cy="14.5" r="12.3" fill="#2a8af0"/><path d="M20 7l-8 6 2 2z" fill="#e83a3a"/><path d="M8 22l4-9 2 2z" fill="#fff"/></g><g transform="translate(325.5 11)"><text x="11" y="22" font-size="24" font-weight="bold" fill="#e8701a" stroke="#7a3a10" stroke-width=".6" font-family="Liberation Serif" font-style="italic">B</text><text x="-2" y="28" font-size="27" font-weight="bold" fill="#3ab02a" stroke="#1a5a10" stroke-width=".6" font-family="Liberation Serif" font-style="italic">B</text></g><g transform="translate(361.5 11)"><rect x="1" y="2" width="27" height="25" rx="1.5" fill="#1c1c1c" stroke="#555" stroke-width=".8"/><path d="M4 6l3 2-3 2M8 10h3" stroke="#ddd" stroke-width="1"/></g><g transform="translate(397.5 11)"><circle cx="14" cy="14.5" r="13.5" fill="#383838" stroke="#777" stroke-width=".6"/><path d="M8 12l11-2-5 12" stroke="#eee" stroke-width="2.2" stroke-dasharray="2 1.2" fill="none"/></g><g transform="translate(433.5 11)"><rect x="0" y="1" width="28" height="27" rx="4" fill="#2e2e2e"/><circle cx="14" cy="8.5" r="4.5" fill="none" stroke="#aaa" stroke-width="1.8"/><circle cx="14" cy="18.5" r="6.5" fill="none" stroke="#aaa" stroke-width="1.8"/><circle cx="14" cy="18.5" r="3.2" fill="#8ad8d8"/></g><g transform="translate(469.5 11)"><rect x="1" y="0" width="6" height="6" fill="#3ab83a" stroke="#222" stroke-width=".6"/><rect x="0" y="9" width="28" height="17" fill="#f4f4f4" stroke="#222" stroke-width="1"/><text x="2" y="22" font-size="11" font-weight="bold" fill="#111" font-family="Liberation Mono">Pd</text></g><g transform="translate(505.5 11)"><path d="M14 1l13 6v14l-13 7-13-7V7z" fill="#9a9a9a"/><path d="M14 1l13 6-13 6-13-6z" fill="#c8c8c8"/><path d="M14 13v15l-13-7V7z" fill="#7a7a7a"/><path d="M5 12l6 3v7l-6-3zM17 15l6-3v7l-6 3z" fill="none" stroke="#333" stroke-width="1"/></g><g transform="translate(541.5 11)"><rect x="0" y="1" width="28" height="27" rx="3" fill="#142236"/><text x="5" y="21" font-size="19" fill="#fff" font-family="Liberation Sans">P</text><circle cx="19" cy="22" r="1.6" fill="none" stroke="#fff" stroke-width="1"/><circle cx="23" cy="22" r="1.6" fill="none" stroke="#fff" stroke-width="1"/></g><g transform="translate(577.5 11)"><rect x="0" y="1" width="28" height="27" rx="3" fill="#1a2a42"/><text x="6" y="23" font-size="21" font-weight="bold" fill="#fff" font-family="Liberation Serif">P</text></g><g transform="translate(613.5 11)"><circle cx="14" cy="14.5" r="13.5" fill="#111" stroke="#ccc" stroke-width=".7"/><text x="8" y="22" font-size="15" fill="#fff" font-family="Liberation Serif">p</text><text x="15" y="14" font-size="10" fill="#fff" font-family="Liberation Serif">3</text></g><g transform="translate(649.5 11)"><circle cx="14" cy="14.5" r="13.5" fill="#17979d"/><path d="M8.5 10a4.5 4.5 0 1 0 0 9q3 0 5.5-4.5 2.5-4.5 5.5-4.5a4.5 4.5 0 1 1 0 9q-3 0-5.5-4.5-2.5-4.5-5.5-4.5z" fill="none" stroke="#fff" stroke-width="2"/></g><g transform="translate(685.5 11)"><path d="M9 1h10l8 8v10l-8 8H9l-8-8V9z" fill="#353535"/><rect x="10" y="6" width="8" height="7" fill="#222" stroke="#e05a3a" stroke-width=".8"/><path d="M8 19h2M13 19h2M18 19h2M10 23h8" stroke="#eee" stroke-width="1.2"/></g><g transform="translate(721.5 11)"><path d="M2 4q0-3 4-3h9l12 14v9q0 3-4 3H15L2 12z" fill="#c8c8c8"/><path d="M2 4q0-3 4-3h9l12 14q0 2-3 2H14L2 7z" fill="#2a2a2a"/></g><g transform="translate(757.5 11)"><path d="M6 1q2 13 0 27q-2-13 0-27z" fill="#f0f0f0"/><ellipse cx="17" cy="13" rx="10" ry="2.4" fill="#eee"/><ellipse cx="20" cy="6" rx="3" ry="4" fill="#222"/><ellipse cx="20" cy="7" rx="1.8" ry="2.6" fill="#fff"/><path d="M15 17l10 9M25 17l-10 9" stroke="#aaa" stroke-width="2"/></g><g transform="translate(793.5 11)"><path d="M2 7l19-4 5 20-19 4z" fill="#3a8ae6"/><path d="M6 9l12-2.5M8 15l12-2.5M9 21l12-2.5" stroke="#8ac0f0" stroke-width=".5"/><path d="M12 27l9-22" stroke="#222" stroke-width="2.4"/><path d="M16 3l10-2 1 3-10 3z" fill="#bbb"/></g><g transform="translate(829.5 11)"><path d="M1 13Q5-10 10 13z" fill="#e8d020"/><path d="M2 13Q4 2 5 0v13z" fill="#d02a2a"/><path d="M7 13Q6 1 5 0v13z" fill="#3ab83a"/><path d="M10 14Q15 38 20 14z" fill="#3ab83a"/><path d="M13 14q2 10 2 13V14z" fill="#e8d020"/><path d="M17 14q-1 10-2 13V14z" fill="#d02a2a"/><path d="M1 13Q5-10 10 13Q15 38 20 14" fill="none" stroke="#111" stroke-width="1"/></g><g transform="translate(865.5 11)"><path d="M14 0L28 27H0z" fill="#d83030"/><path d="M14 0L14 17 0 27z" fill="#3a4ed0"/><path d="M0 27L14 17l14 10z" fill="#2ab82a"/><path d="M14 8v9l-5 3z" fill="#ccc"/></g><g transform="translate(901.5 11)"><rect x="1" y="3" width="13" height="10" rx="1" fill="#ddd"/><path d="M3 9q4-5 8 0z" fill="#c82a2a"/><rect x="7" y="15" width="13" height="11" rx="1" fill="#ddd"/><path d="M9 21q4-5 8 0z" fill="#c82a2a"/><path d="M15 5q10 0 10 8t-4 8" fill="none" stroke="#222" stroke-width="2"/></g><g transform="translate(937.5 11)"><path d="M1 5l19-3 6 21-19 4z" fill="#2a48c0" stroke="#9ab" stroke-width=".6"/><path d="M10 21l14-17" stroke="#d8a040" stroke-width="1.4"/><path d="M23 2l4 20" stroke="#e8b060" stroke-width="1"/></g><g transform="translate(973.5 11)"><path d="M3 1h18l3 4H2z" fill="#555"/><rect x="2" y="5" width="20" height="17" fill="#6a7a88"/><rect x="3" y="12" width="18" height="4" fill="#bfe6f6"/><rect x="14" y="15" width="12" height="13" fill="#d8dde2" stroke="#999" stroke-width=".5"/><rect x="16" y="18" width="3" height="4" fill="#e8a020"/></g><g transform="translate(1009.5 11)"><rect x="1" y="5" width="26" height="19" fill="#e6e6e6" stroke="#aaa" stroke-width=".6"/><path d="M3 6l9 10 -9 7z" fill="#888"/><path d="M8 1l11 26M20 1L9 27" stroke="#999" stroke-width="1.6"/></g><g transform="translate(1045.5 11)"><circle cx="14" cy="14.5" r="13.5" fill="#c8a42a"/><circle cx="14" cy="14.5" r="11" fill="#2a2a2a"/><path d="M7 14h14M8 17h12" stroke="#aaa" stroke-width="1.4"/></g><g transform="translate(1081.5 11)"><rect x="1" y="1" width="26" height="27" fill="#1c1c1c"/><rect x="2" y="11" width="24" height="16" fill="#f4f4f4"/><path d="M5 11v16M8.5 11v16M12 11v16M15.5 11v16M19 11v16M22.5 11v16" stroke="#333" stroke-width=".8"/><path d="M5 11v8M9 11v8M16 11v8M20 11v8" stroke="#111" stroke-width="2"/></g><g transform="translate(1117.5 11)"><circle cx="14" cy="14.5" r="13.5" fill="#f4f4f8" stroke="#c070e0" stroke-width="1"/><path d="M11 8l9-2v13" stroke="#e83a6a" stroke-width="2" fill="none"/><path d="M11 8v13" stroke="#9a5af0" stroke-width="2"/><circle cx="9" cy="21" r="2.6" fill="#7a5af0"/><circle cx="18" cy="19" r="2.6" fill="#3a8af0"/></g><g transform="translate(1153.5 11)"><rect x="0" y="1" width="28" height="27" fill="#c00a0a"/><path d="M8 22q6 0 8-8t8-7" stroke="#fff" stroke-width="3" fill="none"/><path d="M11 14h8" stroke="#fff" stroke-width="2.4"/></g><g transform="translate(1189.5 11)"><ellipse cx="10" cy="19" rx="8" ry="8" fill="#b8601a"/><ellipse cx="10" cy="19" rx="4" ry="4" fill="#e8a040"/><path d="M13 15l13-14" stroke="#8a6a4a" stroke-width="2.2"/><circle cx="9" cy="20" r="2" fill="#333"/></g><g transform="translate(1225.5 11)"><path d="M14 1l13 13-13 14L1 14z" fill="#b8cce8"/><path d="M6 14l6 7 13-16-13 11z" fill="#f0a010"/></g><g transform="translate(1261.5 11)"><circle cx="14" cy="14.5" r="13.5" fill="#5a5a5a"/><circle cx="14" cy="14.5" r="10" fill="#3a3a3a"/><path d="M5 16a9 9 0 0 1 18 0" stroke="#111" stroke-width="2" fill="none"/><rect x="9" y="11" width="10" height="10" rx="2" fill="#888"/><path d="M12 19v-6l4-1v6" stroke="#222" stroke-width="1.2" fill="none"/></g><g transform="translate(1297.5 11)"><rect x="2" y="4" width="18" height="16" fill="#1a6ab8"/><rect x="11" y="3" width="16" height="6" fill="#3ab83a"/><text x="12" y="8.5" font-size="6" font-weight="bold" fill="#fff" font-family="Liberation Sans">Free</text><rect x="12" y="10" width="14" height="17" fill="#111"/><rect x="15" y="14" width="8" height="8" fill="#c84a2a"/><rect x="6" y="12" width="6" height="12" fill="#2a4ac8"/></g><g transform="translate(1333.5 11)"><rect x="0" y="1" width="28" height="27" rx="3" fill="#183a6a"/><path d="M14 4l11 10h-4v11H7V14H3z" fill="#fff"/><text x="9" y="22" font-size="11" font-weight="bold" fill="#183a6a" font-family="Liberation Serif">G</text></g><g transform="translate(1369.5 11)"><rect x="2" y="3" width="24" height="20" fill="#a88a5a"/><path d="M1 6l22-3 3 20-22 3z" fill="#dce6f0"/><path d="M3 16q8-6 20-3l1 8-19 3z" fill="#4a5a7a"/><circle cx="21" cy="21" r="5.5" fill="#777" stroke="#ccc" stroke-width="1.4"/></g><g transform="translate(1405.5 11)"><rect x="0" y="0" width="28" height="28" rx="4" fill="#1a78d0" stroke="#cde" stroke-width=".8"/><path d="M3 15l5-5 3 5 5-7 3 4 6-8" stroke="#fff" stroke-width="1.6" fill="none"/><ellipse cx="18" cy="21" rx="6" ry="3.5" fill="none" stroke="#fff" stroke-width="1"/></g><g transform="translate(1441.5 11)"><rect x="0" y="1" width="28" height="27" rx="2" fill="#f0a090" stroke="#d88070" stroke-width=".6"/><path d="M1 12h2v-2h2v1h3v-2h3v1h4v-2h3v-3h2v3h2v-1h3v4H1z" fill="#8060c8"/><path d="M1 16h26v2l-3 2-4-1-3 2-4-1-3 1-4-2-5 1z" fill="#e85a3a"/></g><g transform="translate(1477.5 11)"><rect x="0" y="9" width="28" height="18" fill="#f6f0b8"/><text x="6" y="23" font-size="12" font-weight="bold" fill="#333" font-family="Liberation Sans">App</text><rect x="4" y="1" width="5" height="18" fill="#5a5ab8"/><ellipse cx="6.5" cy="1.5" rx="2.5" ry="1.5" fill="#d8c080"/></g><g transform="translate(1513.5 11)"><path d="M14 0l12 7v14l-12 7-12-7V7z" fill="#4a9ae8"/><circle cx="14" cy="14" r="9" fill="#0a1a2a"/><circle cx="14" cy="14" r="7" fill="#1a58b0" stroke="#fff" stroke-width="1"/><circle cx="14" cy="14" r="1.6" fill="#fff"/></g><g transform="translate(1549.5 11)"><path d="M1 4l24-4 1 4-24 4z" fill="#222"/><path d="M4 3l3 4M10 2l3 4M16 1l3 4" stroke="#fff" stroke-width="1.6"/><rect x="1" y="8" width="26" height="5" fill="#222"/><path d="M4 8l3 5M11 8l3 5M18 8l3 5" stroke="#fff" stroke-width="1.6"/><rect x="1" y="13" width="26" height="15" fill="#2a6ad8"/><path d="M11 16h6v5h3l-6 6-6-6h3z" fill="#fff"/></g><g transform="translate(1585.5 11)"><circle cx="14" cy="13.5" r="11.5" fill="none" stroke="#1a2838" stroke-width="5"/><circle cx="14" cy="13.5" r="9" fill="#1a6ad8"/><path d="M18 18l8 8" stroke="#111" stroke-width="4"/></g><g transform="translate(1621.5 11)"><circle cx="14" cy="14" r="11" fill="none" stroke="#2a80e0" stroke-width="4.5"/><circle cx="14" cy="14" r="8.5" fill="#e0eef8"/><path d="M12 16l8-8" stroke="#2a80e0" stroke-width="2.6"/><path d="M18 20l8 7" stroke="#2a80e0" stroke-width="3.4"/></g><g transform="translate(1657.5 11)"><path d="M10 2h8l7 22H3z" fill="#f08a1a"/><path d="M9 8h10l2 5H7zM6 16h16l2 5H4z" fill="#f4f4f4"/><ellipse cx="14" cy="26" rx="13" ry="2.5" fill="#e87a10"/></g><g transform="translate(1693.5 11)"><path d="M2 3h24l-2 10H4z" fill="#2a7ae0"/><rect x="9" y="4" width="10" height="8" fill="#e8eef8"/><circle cx="13" cy="8" r="2.4" fill="#e84a2a"/><path d="M14 13v12" stroke="#ccc" stroke-width="1.8"/><ellipse cx="14" cy="26" rx="6" ry="2" fill="#aab"/></g><g transform="translate(1729.5 11)"><path d="M1 4l18-3 5 23-18 4z" fill="#f4f4f4"/><path d="M1 4l18-3 1 5-18 3z" fill="#f0a030"/><rect x="5" y="10" width="8" height="6" fill="#2a6ad8"/><path d="M6 19h12M6.5 22h12" stroke="#bbb" stroke-width=".8"/><path d="M18 26l8-24" stroke="#e8a020" stroke-width="2.2"/></g><g transform="translate(1765.5 11)"><rect x="0" y="1" width="28" height="27" rx="3" fill="#8a8a8a"/><circle cx="14" cy="14.5" r="11" fill="#2a2a2a"/><circle cx="14" cy="14.5" r="8" fill="#777"/><circle cx="14" cy="14.5" r="6" fill="#2a2a2a"/><path d="M14 14.5V8M14 14.5l-5 3.5M14 14.5l5 3.5" stroke="#888" stroke-width="2"/></g><rect x="1815" y="17" width="32" height="21" fill="#f4f6fa"/><rect x="1815" y="16" width="32" height="2" fill="#222"/><rect x="1815" y="18" width="32" height="2" fill="#2a70d0"/><circle cx="1841" cy="36" r="4.5" fill="#e84a2a"/><circle cx="1841" cy="35" r="2.5" fill="#6a2ad8"/><path d="M1855 14h24l-3 26h-18z" fill="#dfe6ea"/><ellipse cx="1867" cy="14" rx="12" ry="3" fill="#666"/><path d="M1859 14l3-3 3 2 4-2 4 3" stroke="#334" stroke-width="1.5" fill="none"/><circle cx="52" cy="45.8" r="1.8" fill="#5a0a0a"/><circle cx="88" cy="45.8" r="1.8" fill="#5a0a0a"/><circle cx="195" cy="45.8" r="1.8" fill="#5a0a0a"/><circle cx="447" cy="45.8" r="1.8" fill="#5a0a0a"/><circle cx="1420" cy="45.8" r="1.8" fill="#5a0a0a"/><circle cx="1456" cy="45.8" r="1.8" fill="#5a0a0a"/></svg>
</body></html>
